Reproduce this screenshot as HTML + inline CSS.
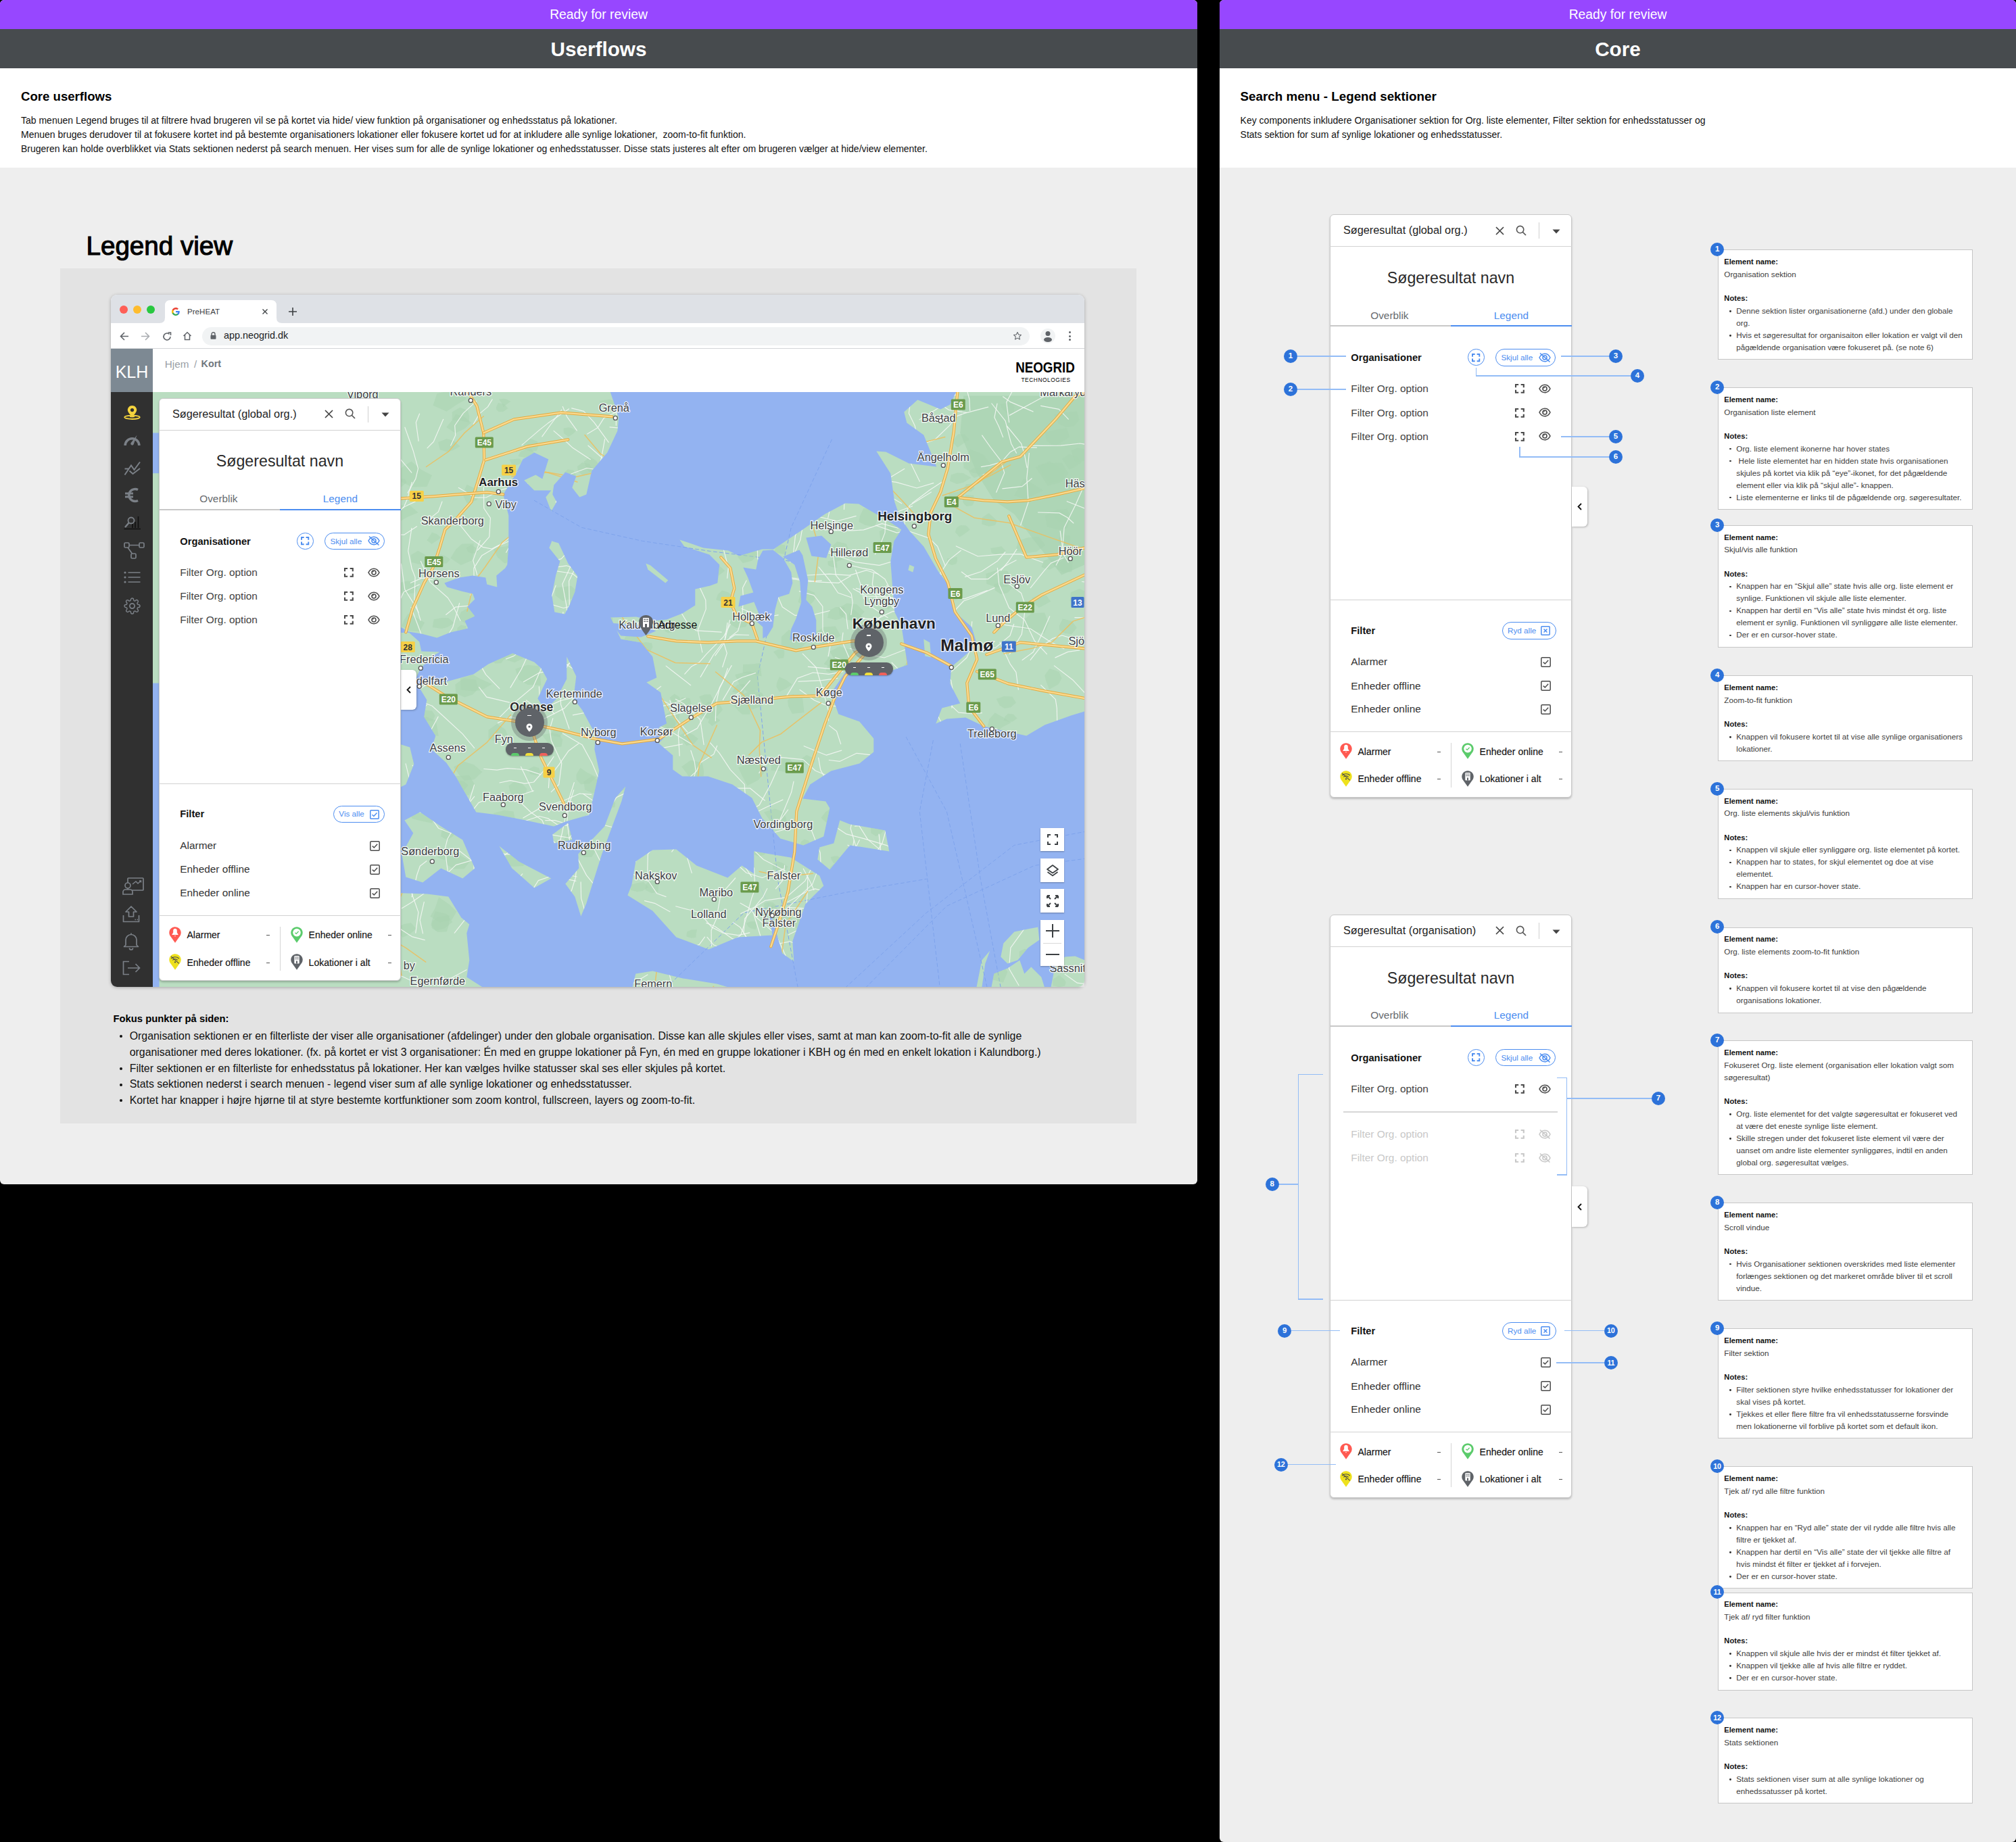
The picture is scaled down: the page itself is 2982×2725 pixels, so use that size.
<!DOCTYPE html>
<html><head><meta charset="utf-8"><title>Userflows - Core</title>
<style>
html,body{margin:0;padding:0;}
body{width:2982px;height:2725px;background:#000;position:relative;overflow:hidden;font-family:"Liberation Sans", sans-serif;}
.t{position:absolute;white-space:nowrap;font-family:"Liberation Sans", sans-serif;}
.r{position:absolute;}
svg{position:absolute;overflow:visible;}
</style></head><body>
<div class="r" style="left:0.00px;top:0.00px;width:1771.00px;height:1752.00px;background:#EEEEEE;border-radius:6px;overflow:hidden"></div><div class="r" style="left:0.00px;top:0.00px;width:1771.00px;height:43.00px;background:#9747FF;border-radius:6px 6px 0 0"></div><div class="r" style="left:0.00px;top:43.00px;width:1771.00px;height:58.00px;background:#474B4E;"></div><div class="r" style="left:0.00px;top:101.00px;width:1771.00px;height:147.00px;background:#FFFFFF;"></div><div class="t" style="left:-114.50px;top:9.83px;width:2000px;text-align:center;font-size:19.3px;line-height:23.16px;font-weight:400;color:#fff;">Ready for review</div><div class="t" style="left:-114.50px;top:55.19px;width:2000px;text-align:center;font-size:29.7px;line-height:35.64px;font-weight:700;color:#fff;">Userflows</div><div class="t" style="left:31.00px;top:131.70px;font-size:18.6px;line-height:22.32px;font-weight:700;color:#000;">Core userflows</div><div class="t" style="left:31.00px;top:170.25px;font-size:14px;line-height:16.8px;font-weight:400;color:#111;">Tab menuen Legend bruges til at filtrere hvad brugeren vil se på kortet via hide/ view funktion på organisationer og enhedsstatus på lokationer.</div><div class="t" style="left:31.00px;top:191.05px;font-size:14px;line-height:16.8px;font-weight:400;color:#111;white-space:pre">Menuen bruges derudover til at fokusere kortet ind på bestemte organisationers lokationer eller fokusere kortet ud for at inkludere alle synlige lokationer,  zoom-to-fit funktion.</div><div class="t" style="left:31.00px;top:211.75px;font-size:14px;line-height:16.8px;font-weight:400;color:#111;">Brugeren kan holde overblikket via Stats sektionen nederst på search menuen. Her vises sum for alle de synlige lokationer og enhedsstatusser. Disse stats justeres alt efter om brugeren vælger at hide/view elementer.</div><div class="t" style="left:127.50px;top:340.87px;font-size:38.6px;line-height:46.32px;font-weight:400;color:#000;-webkit-text-stroke:1.1px #000">Legend view</div><div class="r" style="left:89.00px;top:397.00px;width:1592.00px;height:1265.00px;background:#E3E3E3;"></div><div class="t" style="left:167.50px;top:1499.49px;font-size:14.8px;line-height:17.76px;font-weight:700;color:#000;">Fokus punkter på siden:</div><div class="r" style="left:177.00px;top:1530.70px;width:4.00px;height:4.00px;background:#111;border-radius:50%"></div><div class="t" style="left:191.70px;top:1522.65px;font-size:15.9px;line-height:19.08px;font-weight:400;color:#111;">Organisation sektionen er en filterliste der viser alle organisationer (afdelinger) under den globale organisation. Disse kan alle skjules eller vises, samt at man kan zoom-to-fit alle de synlige</div><div class="t" style="left:191.70px;top:1546.75px;font-size:15.9px;line-height:19.08px;font-weight:400;color:#111;">organisationer med deres lokationer. (fx. på kortet er vist 3 organisationer: Én med en gruppe lokationer på Fyn, én med en gruppe lokationer i KBH og én med en enkelt lokation i Kalundborg.)</div><div class="r" style="left:177.00px;top:1579.00px;width:4.00px;height:4.00px;background:#111;border-radius:50%"></div><div class="t" style="left:191.70px;top:1570.95px;font-size:15.9px;line-height:19.08px;font-weight:400;color:#111;">Filter sektionen er en filterliste for enhedsstatus på lokationer. Her kan vælges hvilke statusser skal ses eller skjules på kortet.</div><div class="r" style="left:177.00px;top:1602.50px;width:4.00px;height:4.00px;background:#111;border-radius:50%"></div><div class="t" style="left:191.70px;top:1594.45px;font-size:15.9px;line-height:19.08px;font-weight:400;color:#111;">Stats sektionen nederst i search menuen - legend viser sum af alle synlige lokationer og enhedsstatusser.</div><div class="r" style="left:177.00px;top:1626.30px;width:4.00px;height:4.00px;background:#111;border-radius:50%"></div><div class="t" style="left:191.70px;top:1618.25px;font-size:15.9px;line-height:19.08px;font-weight:400;color:#111;">Kortet har knapper i højre hjørne til at styre bestemte kortfunktioner som zoom kontrol, fullscreen, layers og zoom-to-fit.</div><div class="r" style="left:1804.00px;top:0.00px;width:1178.00px;height:2725.00px;background:#EEEEEE;border-radius:6px;overflow:hidden"></div><div class="r" style="left:1804.00px;top:0.00px;width:1178.00px;height:43.00px;background:#9747FF;border-radius:6px 6px 0 0"></div><div class="r" style="left:1804.00px;top:43.00px;width:1178.00px;height:58.00px;background:#474B4E;"></div><div class="r" style="left:1804.00px;top:101.00px;width:1178.00px;height:147.00px;background:#FFFFFF;"></div><div class="t" style="left:1393.00px;top:9.83px;width:2000px;text-align:center;font-size:19.3px;line-height:23.16px;font-weight:400;color:#fff;">Ready for review</div><div class="t" style="left:1393.00px;top:55.19px;width:2000px;text-align:center;font-size:29.7px;line-height:35.64px;font-weight:700;color:#fff;">Core</div><div class="t" style="left:1834.60px;top:131.51px;font-size:18.8px;line-height:22.56px;font-weight:700;color:#000;">Search menu - Legend sektioner</div><div class="t" style="left:1834.60px;top:170.35px;font-size:14px;line-height:16.8px;font-weight:400;color:#111;">Key components inkludere Organisationer sektion for Org. liste elementer, Filter sektion for enhedsstatusser og</div><div class="t" style="left:1834.60px;top:191.35px;font-size:14px;line-height:16.8px;font-weight:400;color:#111;">Stats sektion for sum af synlige lokationer og enhedsstatusser.</div><div class="r" style="left:164.00px;top:436.00px;width:1440.00px;height:1024.00px;background:#FFFFFF;border-radius:9px;box-shadow:0 1px 5px rgba(0,0,0,0.28);overflow:hidden"></div><div class="r" style="left:164.00px;top:436.00px;width:1440.00px;height:42.00px;background:#DEE1E6;border-radius:9px 9px 0 0"></div><div class="r" style="left:177.00px;top:451.70px;width:12.00px;height:12.00px;background:#FE5F57;border-radius:50%"></div><div class="r" style="left:197.00px;top:451.70px;width:12.00px;height:12.00px;background:#FEBC2E;border-radius:50%"></div><div class="r" style="left:217.00px;top:451.70px;width:12.00px;height:12.00px;background:#28C840;border-radius:50%"></div><svg style="left:236px;top:444px" width="181" height="34" viewBox="0 0 181 34">
<path d="M0 34 Q8 34 8 26 L8 8 Q8 0 16 0 L165 0 Q173 0 173 8 L173 26 Q173 34 181 34 Z" fill="#fff"/></svg><svg style="left:254px;top:455px" width="12" height="12" viewBox="0 0 24 24">
<path d="M23.5 12.3c0-.8-.1-1.6-.2-2.3H12v4.5h6.5c-.3 1.5-1.1 2.7-2.4 3.6v3h3.9c2.2-2.1 3.5-5.1 3.5-8.8z" fill="#4285F4"/>
<path d="M12 24c3.2 0 6-1.1 7.9-2.9l-3.9-3c-1.1.7-2.4 1.2-4 1.2-3.1 0-5.7-2.1-6.6-4.9h-4v3.1C3.4 21.3 7.4 24 12 24z" fill="#34A853"/>
<path d="M5.4 14.4c-.2-.7-.4-1.5-.4-2.4s.1-1.6.4-2.4V6.5h-4C.5 8.2 0 10 0 12s.5 3.8 1.4 5.5l4-3.1z" fill="#FBBC05"/>
<path d="M12 4.8c1.8 0 3.3.6 4.6 1.8l3.4-3.4C18 1.2 15.2 0 12 0 7.4 0 3.4 2.7 1.4 6.5l4 3.1C6.3 6.9 8.9 4.8 12 4.8z" fill="#EA4335"/></svg><div class="t" style="left:277.00px;top:453.72px;font-size:11.6px;line-height:13.92px;font-weight:400;color:#3C4043;">PreHEAT</div><svg style="left:387.7px;top:457px" width="8" height="8" viewBox="0 0 8 8"><path d="M0.5 0.5L7.5 7.5M7.5 0.5L0.5 7.5" stroke="#3C4043" stroke-width="1.3"/></svg><svg style="left:426.6px;top:455px" width="12" height="12" viewBox="0 0 12 12"><path d="M6 0V12M0 6H12" stroke="#3C4043" stroke-width="1.6"/></svg><div class="r" style="left:164.00px;top:515.00px;width:1440.00px;height:1.00px;background:#D3D5D8;"></div><svg style="left:177px;top:491px" width="14" height="13" viewBox="0 0 14 13"><path d="M13 6.5H2M7 1L1.5 6.5L7 12" stroke="#5F6368" stroke-width="1.6" fill="none"/></svg><svg style="left:208px;top:491px" width="14" height="13" viewBox="0 0 14 13"><path d="M1 6.5H12M7 1L12.5 6.5L7 12" stroke="#A9ACB0" stroke-width="1.6" fill="none"/></svg><svg style="left:239.5px;top:490.5px" width="14" height="14" viewBox="0 0 14 14"><path d="M12 7A5 5 0 1 1 10.5 3.4" stroke="#5F6368" stroke-width="1.6" fill="none"/><path d="M8.5 1H12.5V5" stroke="#5F6368" stroke-width="1.6" fill="none"/></svg><svg style="left:270px;top:490px" width="14" height="14" viewBox="0 0 14 14"><path d="M1.5 7L7 1.8L12.5 7M3.5 5.5V12.5H10.5V5.5" stroke="#5F6368" stroke-width="1.5" fill="none"/></svg><div class="r" style="left:298.60px;top:483.50px;width:1224.40px;height:27.50px;background:#F1F3F4;border-radius:14px"></div><svg style="left:311px;top:491px" width="9" height="11" viewBox="0 0 9 11"><path d="M2 5V3.2A2.5 2.5 0 0 1 7 3.2V5" stroke="#5F6368" stroke-width="1.4" fill="none"/><rect x="0.5" y="4.8" width="8" height="6" rx="1" fill="#5F6368"/></svg><div class="t" style="left:331.00px;top:487.97px;font-size:14.4px;line-height:17.28px;font-weight:400;color:#202124;">app.neogrid.dk</div><svg style="left:1497.8px;top:490px" width="14" height="14" viewBox="0 0 24 24"><path d="M12 2.5l2.9 6.1 6.6.8-4.9 4.6 1.3 6.6L12 17.3l-5.9 3.3 1.3-6.6L2.5 9.4l6.6-.8z" stroke="#5F6368" stroke-width="1.8" fill="none" stroke-linejoin="round"/></svg><div class="r" style="left:1539.00px;top:486.00px;width:22.00px;height:22.00px;background:#F1F3F4;border-radius:50%"></div><svg style="left:1543px;top:489px" width="14" height="16" viewBox="0 0 14 16"><circle cx="7" cy="4.5" r="3.5" fill="#5F6368"/><ellipse cx="7" cy="13.5" rx="6" ry="3.5" fill="#5F6368"/></svg><div class="r" style="left:1580.50px;top:490.00px;width:3.00px;height:3.00px;background:#5F6368;border-radius:50%"></div><div class="r" style="left:1580.50px;top:495.50px;width:3.00px;height:3.00px;background:#5F6368;border-radius:50%"></div><div class="r" style="left:1580.50px;top:501.00px;width:3.00px;height:3.00px;background:#5F6368;border-radius:50%"></div><div class="r" style="left:164.00px;top:515.50px;width:61.70px;height:64.10px;background:#7D8993;"></div><div class="t" style="left:145.00px;top:535.24px;width:100px;text-align:center;font-size:25px;line-height:30.0px;font-weight:400;color:#fff;">KLH</div><div class="r" style="left:164.00px;top:579.60px;width:61.70px;height:880.40px;background:#303030;border-bottom-left-radius:9px"></div><div class="t" style="left:243.70px;top:529.52px;font-size:15.3px;line-height:18.36px;font-weight:400;color:#9AA0A6;">Hjem</div><div class="t" style="left:287.00px;top:529.80px;font-size:15px;line-height:18.0px;font-weight:400;color:#9AA0A6;">/</div><div class="t" style="left:297.60px;top:530.47px;font-size:14.3px;line-height:17.16px;font-weight:700;color:#6F767D;">Kort</div><div class="t" style="left:1446.00px;top:530.40px;width:200px;text-align:center;font-size:22.5px;line-height:27.0px;font-weight:700;color:#000;transform:scaleX(0.835);transform-origin:center;letter-spacing:0px">NEOGRID</div><div class="t" style="left:1447.00px;top:557.09px;width:200px;text-align:center;font-size:9.1px;line-height:10.92px;font-weight:400;color:#000;letter-spacing:0.6px;transform:scaleX(0.92)">TECHNOLOGIES</div>
<svg style="left:183px;top:599px" width="25" height="22" viewBox="0 0 25 22">
 <path d="M12.5 1C8.6 1 5.8 3.9 5.8 7.6C5.8 11.8 12.5 17.5 12.5 17.5S19.2 11.8 19.2 7.6C19.2 3.9 16.4 1 12.5 1Z" fill="#F3D33E"/>
 <circle cx="12.5" cy="7.6" r="2.6" fill="#303030"/>
 <ellipse cx="12.5" cy="18.3" rx="11.3" ry="2.7" stroke="#F3D33E" stroke-width="1.8" fill="none"/>
 <path d="M9 17L12.5 17.5L16 17" stroke="#F3D33E" stroke-width="2"/></svg>
<svg style="left:183px;top:643px" width="25" height="17" viewBox="0 0 25 17">
 <path d="M2.2 16A10.3 10.3 0 0 1 22.8 16" stroke="#7B8087" stroke-width="3.6" fill="none"/>
 <path d="M19.5 0.8L14.6 14.6A2.4 2.4 0 0 1 10.4 12.4Z" fill="#7B8087"/></svg>
<svg style="left:183px;top:682px" width="25" height="22" viewBox="0 0 25 22">
 <path d="M1.5 20.5L11 6.5L15.5 13L24 1.5M1.5 11.5L7 11.5M8.5 14.5L13.5 19L24 11" stroke="#7B8087" stroke-width="2" fill="none"/></svg>
<svg style="left:184px;top:720px" width="22" height="25" viewBox="0 0 22 25">
 <path d="M20 4.5A9 9 0 1 0 20 20.5" stroke="#7B8087" stroke-width="3.4" fill="none"/>
 <path d="M1 10H13M1 15H13" stroke="#7B8087" stroke-width="2.8"/></svg>
<svg style="left:183px;top:763px" width="25" height="21" viewBox="0 0 25 21">
 <circle cx="11" cy="7" r="4.5" stroke="#7B8087" stroke-width="1.8" fill="none"/>
 <path d="M7.7 10.3L2 17" stroke="#7B8087" stroke-width="2.4"/>
 <path d="M13 12V18M17 9V18M21.5 1V18" stroke="#111" stroke-width="1.6"/>
 <path d="M0.5 19.5H25" stroke="#111" stroke-width="1.4"/></svg>
<svg style="left:183px;top:802px" width="32" height="25" viewBox="0 0 32 25">
 <rect x="1" y="1" width="7" height="7" rx="1.5" stroke="#7B8087" stroke-width="1.7" fill="none"/>
 <rect x="23" y="1" width="7" height="7" rx="1.5" stroke="#7B8087" stroke-width="1.7" fill="none"/>
 <rect x="11" y="17" width="7" height="7" rx="1.5" stroke="#7B8087" stroke-width="1.7" fill="none"/>
 <path d="M8 4.5H23M6 8L12.5 17" stroke="#7B8087" stroke-width="1.7"/></svg>
<svg style="left:183px;top:845px" width="25" height="18" viewBox="0 0 25 18">
 <circle cx="2" cy="2" r="1.6" fill="#7B8087"/><circle cx="2" cy="9" r="1.6" fill="#7B8087"/><circle cx="2" cy="16" r="1.6" fill="#7B8087"/>
 <path d="M6.5 2H24.5M6.5 9H24.5M6.5 16H24.5" stroke="#7B8087" stroke-width="1.6"/></svg>
<svg style="left:183px;top:883px" width="25" height="27" viewBox="0 0 24 24">
 <path d="M12 15.5A3.5 3.5 0 1 0 12 8.5A3.5 3.5 0 1 0 12 15.5Z" stroke="#7B8087" stroke-width="1.6" fill="none"/>
 <path d="M19.4 15a1.7 1.7 0 0 0 .3 1.8l.1.1a2 2 0 1 1-2.8 2.8l-.1-.1a1.7 1.7 0 0 0-1.8-.3 1.7 1.7 0 0 0-1 1.5V21a2 2 0 1 1-4 0v-.1a1.7 1.7 0 0 0-1.1-1.5 1.7 1.7 0 0 0-1.8.3l-.1.1a2 2 0 1 1-2.8-2.8l.1-.1a1.7 1.7 0 0 0 .3-1.8 1.7 1.7 0 0 0-1.5-1H3a2 2 0 1 1 0-4h.1a1.7 1.7 0 0 0 1.5-1.1 1.7 1.7 0 0 0-.3-1.8l-.1-.1a2 2 0 1 1 2.8-2.8l.1.1a1.7 1.7 0 0 0 1.8.3H9a1.7 1.7 0 0 0 1-1.5V3a2 2 0 1 1 4 0v.1a1.7 1.7 0 0 0 1 1.5 1.7 1.7 0 0 0 1.8-.3l.1-.1a2 2 0 1 1 2.8 2.8l-.1.1a1.7 1.7 0 0 0-.3 1.8V9a1.7 1.7 0 0 0 1.5 1H21a2 2 0 1 1 0 4h-.1a1.7 1.7 0 0 0-1.5 1z" stroke="#7B8087" stroke-width="1.4" fill="none"/></svg>
<svg style="left:181px;top:1298px" width="32" height="26" viewBox="0 0 32 26">
 <rect x="8" y="1" width="23" height="18" rx="1" stroke="#7B8087" stroke-width="1.7" fill="none"/>
 <circle cx="8" cy="12" r="4" stroke="#7B8087" stroke-width="1.7" fill="#303030"/>
 <path d="M1 25V21.5A3.5 3.5 0 0 1 4.5 18H11.5A3.5 3.5 0 0 1 15 21.5V25Z" stroke="#7B8087" stroke-width="1.7" fill="#303030"/>
 <path d="M15 10L20 6L23 9L27.5 5M25 5H27.5V7.5" stroke="#7B8087" stroke-width="1.5" fill="none"/></svg>
<svg style="left:181px;top:1339px" width="27" height="26" viewBox="0 0 27 26">
 <path d="M13 2L5 10H9.5V17H16.5V10H21Z" stroke="#7B8087" stroke-width="1.7" fill="none" stroke-linejoin="round"/>
 <path d="M1.5 15V24.5H24.5V15" stroke="#7B8087" stroke-width="1.7" fill="none"/>
 <path d="M18.5 21.5H20M21.5 21.5H23" stroke="#7B8087" stroke-width="1.5"/></svg>
<svg style="left:182px;top:1379px" width="24" height="26" viewBox="0 0 24 26">
 <path d="M12 1.5V3.5M4 19V11.5A8 8 0 0 1 20 11.5V19L22.5 21.5H1.5Z" stroke="#7B8087" stroke-width="1.7" fill="none" stroke-linejoin="round"/>
 <path d="M9.5 23.5A2.5 2.5 0 0 0 14.5 23.5" stroke="#7B8087" stroke-width="1.7" fill="none"/></svg>
<svg style="left:181px;top:1421px" width="27" height="22" viewBox="0 0 27 22">
 <path d="M10 1.5H1.5V20.5H10" stroke="#7B8087" stroke-width="1.7" fill="none"/>
 <path d="M8 11H25.5M19.5 5L25.5 11L19.5 17" stroke="#7B8087" stroke-width="1.7" fill="none"/></svg>
<svg style="left:225.7px;top:579.6px;overflow:hidden" width="1378.3" height="880.4" viewBox="225.7 579.6 1378.3 880.4"><rect x="225.7" y="579.6" width="1378.3" height="880.4" fill="#93B3F1"/><polygon points="225.7,579.6 902.5,579.6 915,617 913,637 898,669 875,696 867,731 857,735 846,721 852,704 836,698 819,717 817,731 823,742 815,756 807,735 815,725 790,725 775,710 792,702 802,708 811,679 790,669 773,679 763,700 744,731 752,762 752,804 750,835 747,840 734,851 735,868 720,864 718,854 699,851 679,854 657,862 661,868 682,874 699,878 702,886 691,897 702,911 687,918 692,929 666,935 646,943 623,937 604,934 594,928 225.7,928" fill="#BADDC1" /><polygon points="225.7,935 605,935.5 620,949 623,963 650,964 640,970 626,984 620,992 612,1010 600,1040 225.7,1040" fill="#BADDC1" /><polygon points="590,1100 606,1105 612,1130 600,1160 590,1165" fill="#BADDC1" /><polygon points="617,1012 660,1008 700,997 722,982 758,966 790,979 800,988 809,1004 795,1033 806,1050 823,1033 838,1004 838,971 852,1000 848,1033 861,1050 881,1087 879,1108 886,1140 877,1180 871,1205 836,1215 819,1222 777,1213 736,1205 704,1201 692,1180 675,1150 660,1128 638,1108 644,1088 627,1060 631,1035" fill="#BADDC1" /><polygon points="817,1234 840,1217 846,1242 819,1247" fill="#BADDC1" /><polygon points="925,1163 919,1185 890,1263 867,1336 859,1355 850,1326 836,1307 856,1284 855,1263 894,1222 910,1180" fill="#BADDC1" /><polygon points="738,1251 767,1274 815,1299 790,1313 757,1284" fill="#BADDC1" /><polygon points="598,1213 621,1201 652,1222 684,1242 702,1284 684,1299 652,1284 625,1305 600,1297 594,1263 611,1232" fill="#BADDC1" /><polygon points="225.7,1309 632,1322 663,1326 682,1357 694,1367 690,1380 694,1420 690,1445 715,1461 225.7,1461" fill="#BADDC1" /><polygon points="816,800 826,803 840,833 854,852 850,875 842,895 835,908 820,905 816,880 822,850 828,830 812,810" fill="#BADDC1" /><polygon points="955,833 962,836 988,858 984,862 958,842" fill="#BADDC1" /><polygon points="1005,798 1040,810 1077,814 1093,822 1127,812 1144,812 1187,783 1220,760 1250,744 1270,745 1292,758 1310,768 1333,783 1322,800 1317,830 1320,870 1323,905 1333,925 1342,983 1312,994 1250,994 1229,1025 1240,1056 1271,1067 1292,1092 1292,1112 1271,1129 1229,1140 1198,1160 1187,1181 1221,1185 1227,1195 1218,1237 1188,1250 1154,1240 1127,1210 1112,1180 1083,1160 1047,1148 1009,1148 995,1138 995,1117 974,1099 983,1090 974,1076 986,1070 983,1055 977,1024 956,1009 971,1002 965,971 948,950 918,945 903,913 941,912 965,918 986,916 1009,907 1028,895 1028,871 1050,866 1061,862 1064,835 1049,820 1012,808" fill="#BADDC1" /><polygon points="1414,579.6 1604,579.6 1604,1052 1584,1058 1545,1072 1518,1088 1455,1074 1428,1061 1400,1063 1384,1070 1393,1047 1420,1040 1405,1011 1407,986 1445,954 1437,927 1410,903 1407,871 1387,844 1366,808 1345,785 1331,765 1323,742 1317,700 1296,667 1310,668 1344,685 1385,690 1375,665 1366,643 1341,625 1337,609 1357,591 1391,605 1405,598" fill="#BADDC1" /><polygon points="1000,1256 1030,1280 1076,1298 1097,1280 1115,1292 1136,1337 1142,1383 1091,1386 1048,1404 1000,1386 965,1347 928,1324 934,1309 940,1274 965,1257" fill="#BADDC1" /><polygon points="1115,1259 1169,1268 1212,1295 1218,1310 1191,1337 1172,1392 1174,1422 1157,1410 1145,1368 1136,1337 1115,1292" fill="#BADDC1" /><polygon points="1209,1271 1227,1286 1257,1250 1315,1259 1309,1228 1257,1219 1242,1213 1233,1247 1212,1253" fill="#BADDC1" /><polygon points="1444,1461 1452,1420 1464,1406 1457,1425 1452,1461" fill="#BADDC1" /><polygon points="1484,1395 1500,1378 1535,1371 1537,1390 1520,1402 1505,1420 1490,1425 1480,1415" fill="#BADDC1" /><polygon points="1466,1461 1470,1440 1490,1432 1508,1420 1515,1440 1525,1430 1540,1445 1545,1461" fill="#BADDC1" /><polygon points="1554,1461 1560,1430 1575,1415 1590,1414 1604,1420 1604,1461" fill="#BADDC1" /><polygon points="940,1440 965,1436 1010,1447 1060,1455 1080,1461 935,1461" fill="#BADDC1" /><polygon points="1366,945 1375,950 1377,972 1368,970" fill="#BADDC1" /><polygon points="1345,835 1352,838 1350,846 1343,843" fill="#BADDC1" /><rect x="225.7" y="640" width="9.5" height="60" fill="#93B3F1"/><rect x="225.7" y="1010" width="9.5" height="451" fill="#93B3F1"/><rect x="225.7" y="700" width="9.5" height="310" fill="#BADDC1"/><polyline points="790,740 860,780 950,800 1050,815 1170,830" fill="none" stroke="#7DA3EC" stroke-width="1" stroke-linejoin="round" stroke-linecap="round" stroke-dasharray="5 4"/><polyline points="1230,650 1170,780 1120,1000 1150,1300 1180,1461" fill="none" stroke="#7DA3EC" stroke-width="1" stroke-linejoin="round" stroke-linecap="round" stroke-dasharray="5 4"/><polyline points="1340,1090 1400,1200 1460,1461" fill="none" stroke="#7DA3EC" stroke-width="1" stroke-linejoin="round" stroke-linecap="round" stroke-dasharray="5 4"/><polyline points="1420,1100 1450,1300 1480,1461" fill="none" stroke="#7DA3EC" stroke-width="1" stroke-linejoin="round" stroke-linecap="round" stroke-dasharray="5 4"/><polyline points="1250,1461 1370,1350 1500,1250 1604,1230" fill="none" stroke="#7DA3EC" stroke-width="1" stroke-linejoin="round" stroke-linecap="round" stroke-dasharray="5 4"/><polyline points="1280,1461 1400,1340 1530,1280 1604,1270" fill="none" stroke="#7DA3EC" stroke-width="1" stroke-linejoin="round" stroke-linecap="round" stroke-dasharray="5 4"/><polyline points="1380,1095 1360,1200 1390,1461" fill="none" stroke="#7DA3EC" stroke-width="1" stroke-linejoin="round" stroke-linecap="round" stroke-dasharray="5 4"/><polyline points="985,1461 1100,1350 1250,1320 1370,1300" fill="none" stroke="#7DA3EC" stroke-width="1" stroke-linejoin="round" stroke-linecap="round" stroke-dasharray="5 4"/><defs><clipPath id="landclip"><polygon points="225.7,579.6 902.5,579.6 915,617 913,637 898,669 875,696 867,731 857,735 846,721 852,704 836,698 819,717 817,731 823,742 815,756 807,735 815,725 790,725 775,710 792,702 802,708 811,679 790,669 773,679 763,700 744,731 752,762 752,804 750,835 747,840 734,851 735,868 720,864 718,854 699,851 679,854 657,862 661,868 682,874 699,878 702,886 691,897 702,911 687,918 692,929 666,935 646,943 623,937 604,934 594,928 225.7,928" fill="#000" /><polygon points="225.7,935 605,935.5 620,949 623,963 650,964 640,970 626,984 620,992 612,1010 600,1040 225.7,1040" fill="#000" /><polygon points="590,1100 606,1105 612,1130 600,1160 590,1165" fill="#000" /><polygon points="617,1012 660,1008 700,997 722,982 758,966 790,979 800,988 809,1004 795,1033 806,1050 823,1033 838,1004 838,971 852,1000 848,1033 861,1050 881,1087 879,1108 886,1140 877,1180 871,1205 836,1215 819,1222 777,1213 736,1205 704,1201 692,1180 675,1150 660,1128 638,1108 644,1088 627,1060 631,1035" fill="#000" /><polygon points="817,1234 840,1217 846,1242 819,1247" fill="#000" /><polygon points="925,1163 919,1185 890,1263 867,1336 859,1355 850,1326 836,1307 856,1284 855,1263 894,1222 910,1180" fill="#000" /><polygon points="738,1251 767,1274 815,1299 790,1313 757,1284" fill="#000" /><polygon points="598,1213 621,1201 652,1222 684,1242 702,1284 684,1299 652,1284 625,1305 600,1297 594,1263 611,1232" fill="#000" /><polygon points="225.7,1309 632,1322 663,1326 682,1357 694,1367 690,1380 694,1420 690,1445 715,1461 225.7,1461" fill="#000" /><polygon points="816,800 826,803 840,833 854,852 850,875 842,895 835,908 820,905 816,880 822,850 828,830 812,810" fill="#000" /><polygon points="1005,798 1040,810 1077,814 1093,822 1127,812 1144,812 1187,783 1220,760 1250,744 1270,745 1292,758 1310,768 1333,783 1322,800 1317,830 1320,870 1323,905 1333,925 1342,983 1312,994 1250,994 1229,1025 1240,1056 1271,1067 1292,1092 1292,1112 1271,1129 1229,1140 1198,1160 1187,1181 1221,1185 1227,1195 1218,1237 1188,1250 1154,1240 1127,1210 1112,1180 1083,1160 1047,1148 1009,1148 995,1138 995,1117 974,1099 983,1090 974,1076 986,1070 983,1055 977,1024 956,1009 971,1002 965,971 948,950 918,945 903,913 941,912 965,918 986,916 1009,907 1028,895 1028,871 1050,866 1061,862 1064,835 1049,820 1012,808" fill="#000" /><polygon points="1414,579.6 1604,579.6 1604,1052 1584,1058 1545,1072 1518,1088 1455,1074 1428,1061 1400,1063 1384,1070 1393,1047 1420,1040 1405,1011 1407,986 1445,954 1437,927 1410,903 1407,871 1387,844 1366,808 1345,785 1331,765 1323,742 1317,700 1296,667 1310,668 1344,685 1385,690 1375,665 1366,643 1341,625 1337,609 1357,591 1391,605 1405,598" fill="#000" /><polygon points="1000,1256 1030,1280 1076,1298 1097,1280 1115,1292 1136,1337 1142,1383 1091,1386 1048,1404 1000,1386 965,1347 928,1324 934,1309 940,1274 965,1257" fill="#000" /><polygon points="1115,1259 1169,1268 1212,1295 1218,1310 1191,1337 1172,1392 1174,1422 1157,1410 1145,1368 1136,1337 1115,1292" fill="#000" /><polygon points="1209,1271 1227,1286 1257,1250 1315,1259 1309,1228 1257,1219 1242,1213 1233,1247 1212,1253" fill="#000" /><polygon points="1484,1395 1500,1378 1535,1371 1537,1390 1520,1402 1505,1420 1490,1425 1480,1415" fill="#000" /><polygon points="1466,1461 1470,1440 1490,1432 1508,1420 1515,1440 1525,1430 1540,1445 1545,1461" fill="#000" /><polygon points="1554,1461 1560,1430 1575,1415 1590,1414 1604,1420 1604,1461" fill="#000" /><polygon points="940,1440 965,1436 1010,1447 1060,1455 1080,1461 935,1461" fill="#000" /></clipPath></defs><g clip-path="url(#landclip)"><polygon points="1425,585 1604,585 1604,835 1570,850 1530,800 1500,760 1470,740 1445,700 1420,640" fill="#A9D3B1" opacity="0.75"/><polygon points="931.5,712.7 930.8,723.2 917.1,724.2 910.5,716.6 905.7,707.1 918.0,704.4 930.0,703.1" fill="#A9D3B1" opacity="0.55"/><polygon points="680.1,659.8 669.6,665.8 661.3,668.1 650.6,664.9 647.8,653.7 660.5,648.9 671.3,652.2" fill="#A9D3B1" opacity="0.55"/><polygon points="1596.1,621.0 1588.7,629.8 1577.0,631.6 1565.3,626.7 1558.9,612.9 1576.8,609.6 1592.6,608.4" fill="#A9D3B1" opacity="0.55"/><polygon points="1249.0,907.7 1245.2,914.0 1236.3,916.8 1223.7,913.6 1226.2,902.8 1236.1,897.7 1248.8,897.8" fill="#A9D3B1" opacity="0.55"/><polygon points="1072.0,843.8 1060.4,853.0 1046.9,858.7 1034.5,850.2 1030.3,835.7 1046.4,827.2 1060.7,834.2" fill="#A9D3B1" opacity="0.55"/><polygon points="1599.6,683.9 1590.1,690.0 1581.1,694.1 1576.1,686.9 1570.6,678.8 1580.5,671.6 1592.6,675.2" fill="#A9D3B1" opacity="0.55"/><polygon points="1496.1,856.1 1489.2,867.3 1474.5,868.8 1459.1,863.4 1458.0,848.3 1474.4,843.2 1489.9,844.3" fill="#A9D3B1" opacity="0.55"/><polygon points="676.4,1197.3 666.8,1209.9 651.3,1207.9 641.0,1202.5 637.9,1191.0 652.0,1189.1 664.2,1187.5" fill="#A9D3B1" opacity="0.55"/><polygon points="772.9,683.0 766.7,686.9 761.4,688.4 756.0,685.7 753.3,679.3 761.6,678.5 767.9,678.0" fill="#A9D3B1" opacity="0.55"/><polygon points="1171.9,1357.4 1158.1,1367.1 1144.6,1370.9 1133.6,1363.1 1127.1,1349.1 1143.0,1338.1 1157.0,1348.8" fill="#A9D3B1" opacity="0.55"/><polygon points="781.7,784.1 778.3,791.3 769.2,791.0 765.0,786.5 762.1,780.6 769.0,776.6 778.2,777.1" fill="#A9D3B1" opacity="0.55"/><polygon points="1572.3,1187.6 1566.8,1197.9 1554.4,1195.2 1539.7,1194.1 1540.9,1181.6 1552.5,1173.2 1567.6,1176.6" fill="#A9D3B1" opacity="0.55"/><polygon points="999.6,931.1 993.5,934.9 988.3,935.9 983.3,933.5 983.6,928.8 987.9,924.9 993.4,927.3" fill="#A9D3B1" opacity="0.55"/><polygon points="601.3,713.1 596.9,716.8 590.7,722.0 584.5,716.5 587.3,710.8 591.6,707.4 598.2,708.1" fill="#A9D3B1" opacity="0.55"/><polygon points="986.9,688.1 972.7,699.6 957.0,702.7 949.3,692.7 949.1,683.5 957.5,675.1 970.9,678.3" fill="#A9D3B1" opacity="0.55"/><polygon points="1441.5,722.1 1436.0,727.1 1429.7,726.6 1423.6,724.9 1426.3,720.3 1429.2,715.8 1437.6,715.4" fill="#A9D3B1" opacity="0.55"/><polygon points="1475.8,1192.7 1471.0,1197.9 1462.9,1203.0 1455.6,1196.6 1453.8,1188.0 1463.7,1185.1 1471.3,1187.1" fill="#A9D3B1" opacity="0.55"/><polygon points="1436.6,1446.7 1428.0,1461.4 1408.5,1464.1 1399.8,1452.0 1396.2,1440.1 1409.7,1433.5 1421.1,1439.0" fill="#A9D3B1" opacity="0.55"/><polygon points="633.9,825.9 630.4,835.1 618.9,834.2 608.1,831.0 607.7,820.7 618.0,814.4 627.4,819.7" fill="#A9D3B1" opacity="0.55"/><polygon points="823.9,779.6 822.8,786.6 812.9,789.9 804.4,784.1 806.8,776.1 813.4,770.8 823.7,771.8" fill="#A9D3B1" opacity="0.55"/><polygon points="702.5,1161.3 693.3,1175.9 674.4,1176.4 665.2,1166.5 657.2,1153.0 674.9,1147.8 693.7,1146.3" fill="#A9D3B1" opacity="0.55"/><polygon points="1592.5,928.3 1584.7,937.8 1573.2,936.0 1566.9,931.6 1566.7,925.0 1571.6,915.2 1585.2,918.4" fill="#A9D3B1" opacity="0.55"/><polygon points="763.8,1307.3 752.2,1318.8 736.0,1324.0 727.2,1312.5 728.8,1302.7 734.6,1285.6 755.1,1293.0" fill="#A9D3B1" opacity="0.55"/><polygon points="1142.4,1401.6 1135.7,1412.0 1123.0,1409.8 1115.5,1405.4 1115.2,1397.7 1123.0,1393.2 1134.2,1392.7" fill="#A9D3B1" opacity="0.55"/><polygon points="867.4,948.7 860.4,953.9 853.2,955.8 846.3,952.2 844.3,944.5 853.3,941.9 862.8,941.1" fill="#A9D3B1" opacity="0.55"/><polygon points="1109.6,1048.0 1108.8,1056.7 1097.7,1056.7 1091.8,1051.2 1084.2,1041.8 1097.7,1039.4 1109.1,1039.1" fill="#A9D3B1" opacity="0.55"/><polygon points="1338.3,1069.7 1333.9,1077.5 1323.0,1081.0 1318.5,1072.6 1314.9,1065.4 1324.0,1062.1 1332.4,1063.5" fill="#A9D3B1" opacity="0.55"/><polygon points="1391.7,1026.8 1386.0,1039.1 1370.5,1038.1 1359.1,1032.5 1360.1,1021.5 1370.4,1014.9 1384.5,1016.0" fill="#A9D3B1" opacity="0.55"/><polygon points="1068.8,1049.3 1060.3,1059.3 1046.4,1063.2 1033.6,1055.7 1040.0,1045.3 1047.1,1037.9 1061.9,1037.7" fill="#A9D3B1" opacity="0.55"/><polygon points="1451.1,700.7 1446.2,704.6 1440.6,706.5 1436.5,702.9 1432.9,697.1 1439.8,692.0 1449.7,693.2" fill="#A9D3B1" opacity="0.55"/><polygon points="761.2,1210.2 762.2,1223.3 744.2,1227.4 737.4,1214.7 729.5,1202.6 745.8,1198.4 759.3,1200.0" fill="#A9D3B1" opacity="0.55"/><polygon points="1603.0,1312.6 1599.9,1318.7 1591.8,1319.3 1586.9,1315.2 1586.2,1309.6 1591.2,1303.7 1597.7,1308.6" fill="#A9D3B1" opacity="0.55"/><polygon points="1160.0,967.6 1158.5,973.0 1151.4,973.8 1148.3,969.5 1143.6,963.9 1151.0,960.2 1159.7,961.0" fill="#A9D3B1" opacity="0.55"/><polygon points="708.7,813.7 703.1,817.9 697.6,818.3 692.0,816.4 689.4,810.0 696.7,805.9 703.1,809.5" fill="#A9D3B1" opacity="0.55"/><polygon points="761.4,1388.9 750.6,1395.5 741.7,1396.9 728.4,1394.9 731.1,1383.9 741.7,1380.8 756.5,1376.3" fill="#A9D3B1" opacity="0.55"/><polygon points="1245.4,1285.4 1238.1,1289.1 1232.0,1294.0 1226.8,1288.4 1227.5,1282.8 1232.4,1278.4 1241.6,1278.3" fill="#A9D3B1" opacity="0.55"/><polygon points="875.6,693.7 870.3,700.2 861.4,702.3 855.0,697.1 853.5,689.8 861.0,683.9 871.6,685.9" fill="#A9D3B1" opacity="0.55"/><polygon points="1371.7,835.2 1368.7,843.1 1358.8,842.3 1350.4,839.2 1352.6,832.0 1357.1,822.1 1370.1,825.9" fill="#A9D3B1" opacity="0.55"/><polygon points="798.8,997.8 800.0,1013.3 780.3,1012.6 766.6,1004.7 762.0,989.1 780.4,983.4 797.1,985.2" fill="#A9D3B1" opacity="0.55"/><polygon points="1303.4,1444.5 1297.0,1453.3 1285.3,1455.0 1278.1,1448.5 1278.6,1440.8 1286.5,1438.2 1293.8,1439.0" fill="#A9D3B1" opacity="0.55"/><polygon points="672.8,1232.0 669.3,1236.8 661.4,1242.7 651.9,1236.8 653.3,1227.7 662.4,1224.8 670.1,1226.4" fill="#A9D3B1" opacity="0.55"/><polygon points="898.6,984.3 894.3,989.3 886.4,994.5 877.5,988.9 880.2,980.8 887.5,978.2 897.4,976.2" fill="#A9D3B1" opacity="0.55"/><polygon points="912.9,893.8 910.6,898.5 904.3,899.7 900.6,895.9 899.1,891.1 904.9,890.0 909.9,889.9" fill="#A9D3B1" opacity="0.55"/><polygon points="689.0,931.6 688.1,935.9 682.3,936.7 675.9,934.6 676.2,928.7 681.6,924.0 689.4,925.9" fill="#A9D3B1" opacity="0.55"/><polygon points="1328.0,1353.6 1327.7,1364.4 1314.8,1361.0 1303.5,1358.8 1304.1,1348.7 1315.0,1347.0 1326.8,1343.6" fill="#A9D3B1" opacity="0.55"/><polygon points="1516.1,1132.1 1502.7,1140.0 1490.8,1145.8 1479.1,1138.1 1475.3,1124.5 1490.0,1115.5 1508.2,1118.6" fill="#A9D3B1" opacity="0.55"/><polygon points="1202.5,1365.7 1191.8,1374.0 1181.1,1374.2 1172.5,1369.9 1170.0,1360.5 1180.9,1356.5 1196.5,1352.7" fill="#A9D3B1" opacity="0.55"/><polygon points="1175.7,1132.4 1167.5,1142.3 1155.4,1140.3 1140.2,1139.2 1140.7,1125.9 1154.1,1120.0 1167.9,1122.2" fill="#A9D3B1" opacity="0.55"/><polygon points="1273.8,638.1 1267.0,645.6 1256.3,649.4 1241.2,645.2 1247.3,633.4 1255.0,622.2 1274.2,623.4" fill="#A9D3B1" opacity="0.55"/><polygon points="1108.2,916.7 1102.8,927.1 1089.0,928.5 1078.5,922.0 1083.7,913.3 1090.1,908.6 1099.5,909.5" fill="#A9D3B1" opacity="0.55"/><polygon points="1354.1,847.9 1350.8,854.3 1341.6,857.7 1329.0,853.8 1328.8,841.9 1340.6,834.5 1352.4,839.9" fill="#A9D3B1" opacity="0.55"/><polygon points="1125.1,988.9 1126.3,1000.0 1112.8,997.3 1098.4,995.4 1098.8,982.6 1113.2,982.0 1123.6,980.5" fill="#A9D3B1" opacity="0.55"/><polygon points="1433.2,1431.9 1428.6,1438.6 1417.9,1446.0 1412.3,1435.6 1408.9,1426.9 1419.7,1424.1 1430.5,1423.3" fill="#A9D3B1" opacity="0.55"/><polygon points="1574.8,696.7 1571.1,711.6 1551.5,713.3 1542.8,701.8 1534.7,688.4 1552.1,682.4 1563.7,689.2" fill="#A9D3B1" opacity="0.55"/><polygon points="608.2,1012.7 602.9,1018.9 594.0,1022.1 586.0,1016.8 581.3,1006.8 594.7,1006.0 606.7,1002.6" fill="#A9D3B1" opacity="0.55"/><polygon points="1464.4,685.6 1457.4,701.8 1437.6,698.8 1425.1,691.9 1424.8,679.3 1435.3,664.4 1454.6,672.4" fill="#A9D3B1" opacity="0.55"/><polygon points="965.2,956.7 962.6,961.7 954.6,967.6 949.1,960.0 944.3,951.5 955.6,949.5 963.5,950.9" fill="#A9D3B1" opacity="0.55"/><polygon points="1126.4,747.1 1119.6,757.2 1106.1,759.1 1097.2,751.8 1094.8,741.4 1105.9,734.1 1117.7,738.9" fill="#A9D3B1" opacity="0.55"/><polygon points="1337.2,623.5 1333.3,636.4 1316.2,638.5 1307.3,628.6 1310.1,619.5 1315.4,605.8 1328.3,615.7" fill="#A9D3B1" opacity="0.55"/><polygon points="1084.0,882.4 1080.1,892.2 1068.3,889.8 1058.8,886.9 1061.5,879.0 1067.7,873.0 1077.0,875.8" fill="#A9D3B1" opacity="0.55"/><polygon points="775.6,722.3 768.6,728.7 760.3,728.7 750.0,726.9 749.4,717.3 760.0,714.5 766.9,717.5" fill="#A9D3B1" opacity="0.55"/><polygon points="796.0,659.8 793.6,666.0 785.3,667.6 776.0,664.3 773.5,654.4 784.3,648.6 794.6,652.7" fill="#A9D3B1" opacity="0.55"/><polygon points="1022.5,1041.3 1016.8,1046.6 1009.1,1049.5 996.2,1047.2 1003.2,1038.1 1008.6,1031.4 1020.1,1032.6" fill="#A9D3B1" opacity="0.55"/><polygon points="1474.5,770.0 1471.8,776.5 1463.0,778.4 1451.9,775.2 1452.7,765.2 1462.2,758.9 1469.9,765.5" fill="#A9D3B1" opacity="0.55"/><polygon points="644.7,1204.4 638.5,1217.4 622.9,1214.0 609.4,1210.6 602.5,1195.5 620.2,1185.5 641.0,1189.0" fill="#A9D3B1" opacity="0.55"/><polygon points="1582.7,798.6 1581.7,804.4 1573.7,806.7 1565.1,802.8 1566.4,795.0 1573.7,790.8 1582.7,791.9" fill="#A9D3B1" opacity="0.55"/><polygon points="1065.2,1065.3 1059.4,1069.4 1053.0,1073.6 1047.2,1068.4 1049.1,1062.9 1054.0,1060.7 1059.5,1061.2" fill="#A9D3B1" opacity="0.55"/><polygon points="1242.5,1194.8 1242.1,1200.5 1234.1,1202.3 1228.8,1197.6 1229.8,1192.2 1234.1,1187.1 1239.9,1191.1" fill="#A9D3B1" opacity="0.55"/><polygon points="920.4,985.4 914.1,1001.7 893.4,1001.0 883.1,991.1 882.9,979.7 891.8,964.1 912.4,970.8" fill="#A9D3B1" opacity="0.55"/><polygon points="919.8,599.2 912.1,607.5 901.2,608.3 889.4,604.7 886.9,592.7 901.3,590.3 909.6,593.3" fill="#A9D3B1" opacity="0.55"/><polygon points="947.7,950.1 947.4,962.8 930.4,965.4 919.7,955.9 923.0,945.6 929.8,932.6 943.7,941.1" fill="#A9D3B1" opacity="0.55"/><polygon points="1434.6,783.1 1427.6,788.7 1418.9,794.1 1412.6,786.8 1414.7,780.3 1420.2,776.6 1428.2,776.9" fill="#A9D3B1" opacity="0.55"/><polygon points="1274.4,1414.9 1270.3,1419.6 1262.7,1425.0 1259.3,1417.3 1259.9,1412.7 1264.2,1409.9 1271.1,1409.4" fill="#A9D3B1" opacity="0.55"/><polygon points="1524.8,1357.6 1515.3,1371.9 1497.7,1369.4 1489.0,1362.2 1480.4,1349.6 1496.5,1341.6 1508.1,1350.4" fill="#A9D3B1" opacity="0.55"/><polygon points="1275.8,913.2 1270.7,919.1 1263.0,919.4 1255.2,916.8 1254.7,909.3 1261.0,900.1 1270.4,907.5" fill="#A9D3B1" opacity="0.55"/><polygon points="1583.1,762.5 1577.4,772.1 1565.3,771.7 1560.5,765.4 1557.0,758.3 1565.4,753.8 1578.0,752.4" fill="#A9D3B1" opacity="0.55"/><polygon points="800.9,900.5 799.5,912.0 782.8,919.3 767.1,908.7 776.5,896.1 785.3,890.5 796.4,892.3" fill="#A9D3B1" opacity="0.55"/><polygon points="1545.9,806.2 1532.8,815.8 1519.9,817.6 1502.1,814.3 1506.0,799.6 1520.0,794.9 1535.9,793.5" fill="#A9D3B1" opacity="0.55"/><polygon points="922.1,822.6 919.2,828.8 911.1,829.1 903.8,826.1 908.5,820.8 911.6,817.8 917.6,817.9" fill="#A9D3B1" opacity="0.55"/><polygon points="1570.7,1419.4 1567.8,1427.0 1557.5,1429.3 1545.2,1425.3 1551.5,1416.1 1556.8,1407.3 1569.6,1410.1" fill="#A9D3B1" opacity="0.55"/><polygon points="1438.5,1260.1 1433.3,1268.6 1421.7,1271.1 1407.7,1266.6 1415.1,1256.3 1422.1,1250.6 1436.4,1248.4" fill="#A9D3B1" opacity="0.55"/><polygon points="851.4,637.0 847.4,641.4 840.6,645.5 833.7,640.5 833.2,633.2 841.5,631.8 846.5,633.5" fill="#A9D3B1" opacity="0.55"/><polygon points="706.9,1018.7 699.0,1027.2 686.9,1031.1 673.8,1025.1 673.2,1012.0 686.0,1002.9 703.8,1005.3" fill="#A9D3B1" opacity="0.55"/><polygon points="1280.7,686.6 1277.0,699.0 1260.9,699.9 1244.8,694.3 1251.6,681.6 1261.3,674.7 1274.2,677.1" fill="#A9D3B1" opacity="0.55"/><polygon points="761.3,1358.1 756.8,1366.9 743.4,1374.3 734.2,1363.4 737.0,1353.8 743.8,1343.4 758.6,1347.4" fill="#A9D3B1" opacity="0.55"/><polygon points="1612.0,670.1 1605.7,680.9 1590.8,684.2 1586.6,673.2 1584.2,666.0 1592.6,662.2 1601.5,663.3" fill="#A9D3B1" opacity="0.55"/><polygon points="1594.8,1093.2 1592.5,1109.1 1572.4,1108.2 1561.9,1098.9 1555.0,1084.9 1570.8,1072.5 1585.5,1084.3" fill="#A9D3B1" opacity="0.55"/><polygon points="1205.2,1125.6 1200.5,1130.4 1193.9,1132.0 1188.0,1128.5 1185.6,1121.6 1193.1,1116.5 1200.8,1120.4" fill="#A9D3B1" opacity="0.55"/><polygon points="617.3,868.0 613.4,876.9 601.6,878.1 586.3,875.0 589.0,862.0 602.0,859.2 611.8,860.6" fill="#A9D3B1" opacity="0.55"/><polygon points="1003.9,1064.1 1000.2,1071.7 988.5,1078.5 979.1,1069.3 980.5,1059.4 989.6,1053.3 1006.0,1050.7" fill="#A9D3B1" opacity="0.55"/><polygon points="920.4,1078.5 918.6,1088.3 905.0,1091.7 898.8,1082.4 900.2,1075.2 905.6,1067.3 914.8,1072.5" fill="#A9D3B1" opacity="0.55"/><polygon points="615.3,1373.4 606.6,1381.1 595.2,1386.7 587.4,1377.9 590.0,1370.0 597.0,1366.8 607.5,1364.8" fill="#A9D3B1" opacity="0.55"/><polygon points="1250.3,1380.6 1245.7,1385.6 1238.8,1387.5 1234.9,1382.9 1234.1,1378.1 1238.7,1373.7 1247.9,1373.4" fill="#A9D3B1" opacity="0.55"/><polygon points="727.6,1011.6 711.9,1020.5 700.0,1022.0 681.1,1020.1 680.7,1003.1 699.0,997.6 710.6,1004.0" fill="#A9D3B1" opacity="0.55"/><polygon points="1550.7,921.3 1544.5,936.6 1526.1,932.8 1507.9,929.6 1515.3,915.9 1525.3,907.1 1544.7,905.9" fill="#A9D3B1" opacity="0.55"/><polygon points="1441.0,741.0 1437.9,747.7 1429.2,748.5 1424.5,743.6 1423.6,738.0 1428.6,731.5 1439.8,732.5" fill="#A9D3B1" opacity="0.55"/><polygon points="646.2,1074.9 648.3,1088.7 631.7,1084.8 617.5,1081.4 618.0,1068.5 630.3,1059.8 644.0,1065.4" fill="#A9D3B1" opacity="0.55"/><polygon points="1032.5,1092.7 1025.6,1100.7 1014.9,1102.6 1009.9,1095.7 1004.7,1087.7 1014.8,1082.4 1024.3,1086.0" fill="#A9D3B1" opacity="0.55"/><polygon points="1375.4,1266.4 1373.3,1274.8 1362.8,1274.0 1356.0,1269.8 1353.3,1261.9 1362.8,1258.9 1373.1,1258.2" fill="#A9D3B1" opacity="0.55"/><polygon points="1119.9,615.9 1120.5,627.7 1104.5,631.0 1094.2,621.5 1099.1,612.1 1105.2,603.3 1117.9,606.7" fill="#A9D3B1" opacity="0.55"/><polygon points="1580.3,699.8 1568.2,713.8 1549.1,718.1 1541.1,704.9 1531.1,690.9 1550.1,685.1 1570.2,684.0" fill="#A9D3B1" opacity="0.55"/><polygon points="1542.9,725.3 1526.8,733.0 1515.5,737.9 1499.7,732.8 1506.9,720.6 1513.9,707.1 1528.5,715.9" fill="#A9D3B1" opacity="0.55"/><polygon points="1436.3,706.3 1424.6,713.4 1415.0,715.5 1404.7,711.3 1406.4,702.0 1415.5,699.0 1424.4,699.5" fill="#A9D3B1" opacity="0.55"/><polygon points="777.5,1404.0 763.8,1411.9 751.5,1419.7 745.3,1408.2 740.7,1398.1 751.9,1389.8 765.3,1394.7" fill="#A9D3B1" opacity="0.55"/><polygon points="1495.2,1068.6 1482.3,1075.3 1470.9,1084.8 1460.4,1074.4 1462.8,1063.7 1471.4,1054.0 1483.4,1060.6" fill="#A9D3B1" opacity="0.55"/><polygon points="1609.2,1088.1 1601.8,1095.5 1592.3,1095.4 1581.2,1093.2 1586.9,1085.2 1591.0,1076.1 1600.7,1081.7" fill="#A9D3B1" opacity="0.55"/><polygon points="1256.5,1446.0 1247.5,1454.3 1237.1,1453.6 1230.2,1449.5 1229.0,1442.0 1235.6,1432.9 1248.4,1436.8" fill="#A9D3B1" opacity="0.55"/><polygon points="1118.8,1368.1 1117.8,1374.6 1110.0,1372.8 1106.0,1370.1 1103.8,1365.2 1109.8,1362.9 1116.5,1362.8" fill="#A9D3B1" opacity="0.55"/><polygon points="831.8,1093.6 830.2,1104.1 816.4,1105.4 809.6,1097.5 801.3,1086.5 816.9,1083.8 826.9,1086.4" fill="#A9D3B1" opacity="0.55"/><polygon points="713.0,1141.6 701.0,1152.8 686.3,1154.0 678.8,1145.9 670.7,1134.3 685.4,1126.0 700.5,1130.9" fill="#A9D3B1" opacity="0.55"/><polygon points="1269.2,970.5 1255.9,980.7 1239.9,990.8 1233.7,975.1 1227.2,963.4 1241.6,955.9 1255.8,960.4" fill="#A9D3B1" opacity="0.55"/><polygon points="660.1,1265.4 658.4,1271.8 650.7,1269.9 646.6,1267.5 644.5,1262.5 650.3,1259.3 657.4,1260.0" fill="#A9D3B1" opacity="0.55"/><polygon points="1425.3,733.7 1420.2,738.6 1412.0,745.4 1402.6,738.6 1403.1,729.0 1413.7,727.9 1424.5,724.5" fill="#A9D3B1" opacity="0.55"/><polygon points="1363.2,989.4 1355.1,998.2 1343.6,999.1 1333.8,994.3 1336.0,985.4 1343.0,977.5 1359.3,976.5" fill="#A9D3B1" opacity="0.55"/><polygon points="1309.9,1323.9 1306.8,1335.0 1292.1,1336.6 1277.1,1331.1 1280.1,1317.9 1292.6,1312.9 1307.5,1312.1" fill="#A9D3B1" opacity="0.55"/><polygon points="1581.2,771.0 1578.7,780.9 1565.3,783.1 1548.2,778.9 1545.7,762.1 1563.7,753.2 1579.3,760.4" fill="#A9D3B1" opacity="0.55"/><polygon points="1496.9,869.1 1490.2,876.5 1480.1,878.7 1472.0,873.3 1469.7,864.1 1480.5,860.9 1491.3,860.7" fill="#A9D3B1" opacity="0.55"/><polygon points="1313.9,1334.6 1307.1,1343.4 1295.7,1343.6 1288.8,1338.3 1285.1,1329.5 1296.2,1327.4 1309.2,1323.7" fill="#A9D3B1" opacity="0.55"/><polygon points="751.1,603.7 744.2,608.7 737.7,608.9 733.9,605.7 733.8,601.6 736.9,595.6 745.4,597.5" fill="#A9D3B1" opacity="0.55"/><polygon points="1306.7,1228.4 1302.4,1233.1 1295.3,1236.5 1288.2,1232.0 1287.8,1224.6 1296.4,1223.9 1304.4,1221.6" fill="#A9D3B1" opacity="0.55"/><polygon points="1524.5,1411.0 1521.5,1415.0 1516.1,1415.6 1507.3,1414.9 1507.5,1407.2 1515.3,1403.3 1524.4,1404.0" fill="#A9D3B1" opacity="0.55"/><polygon points="1237.8,832.9 1238.1,839.5 1229.9,838.3 1224.5,835.6 1223.9,830.0 1230.2,828.4 1236.1,828.3" fill="#A9D3B1" opacity="0.55"/><polygon points="889.5,1209.9 889.2,1220.4 875.9,1219.6 864.5,1215.3 866.5,1205.2 876.9,1203.5 886.0,1202.6" fill="#A9D3B1" opacity="0.55"/><polygon points="1048.3,1260.3 1042.1,1268.1 1032.1,1267.8 1020.3,1265.6 1026.6,1257.3 1030.9,1248.5 1040.0,1254.5" fill="#A9D3B1" opacity="0.55"/><polygon points="618.3,757.8 601.3,764.8 590.4,771.5 578.4,763.9 574.8,750.3 591.3,747.2 605.3,746.7" fill="#A9D3B1" opacity="0.55"/><polygon points="958.7,1312.0 949.8,1317.8 942.1,1318.8 932.6,1316.4 934.0,1308.2 942.3,1305.9 951.6,1304.4" fill="#A9D3B1" opacity="0.55"/><polygon points="695.2,1273.4 686.3,1284.9 671.4,1285.1 660.7,1278.8 660.8,1268.0 669.9,1256.4 682.1,1266.0" fill="#A9D3B1" opacity="0.55"/><polygon points="1499.8,602.2 1499.6,610.5 1488.9,610.2 1482.7,605.4 1479.3,597.5 1489.4,595.7 1497.5,595.9" fill="#A9D3B1" opacity="0.55"/><polygon points="1149.9,1243.9 1140.1,1253.7 1127.0,1255.9 1118.6,1248.5 1110.5,1236.3 1126.0,1228.6 1143.3,1231.0" fill="#A9D3B1" opacity="0.55"/><polygon points="783.3,966.1 772.5,974.2 760.5,979.7 743.7,974.1 751.4,961.1 761.3,955.4 773.9,956.6" fill="#A9D3B1" opacity="0.55"/><polygon points="1311.1,1322.4 1308.8,1327.3 1302.0,1329.0 1295.1,1325.8 1297.4,1319.9 1302.0,1315.8 1308.5,1317.8" fill="#A9D3B1" opacity="0.55"/><polygon points="1590.9,1221.3 1582.8,1225.2 1577.1,1227.7 1567.9,1225.5 1569.1,1217.5 1576.5,1213.1 1584.2,1216.0" fill="#A9D3B1" opacity="0.55"/><polygon points="798.4,1141.4 796.5,1146.6 790.0,1146.0 783.8,1144.3 781.5,1137.6 789.1,1133.4 797.0,1135.8" fill="#A9D3B1" opacity="0.55"/><polygon points="1242.5,987.7 1237.8,993.2 1229.8,996.4 1221.2,992.0 1224.2,984.6 1230.1,979.9 1239.3,980.7" fill="#A9D3B1" opacity="0.55"/><polygon points="1040.8,781.1 1031.7,794.1 1014.4,796.5 999.3,788.7 1001.2,774.4 1014.6,766.3 1029.2,770.7" fill="#A9D3B1" opacity="0.55"/><polygon points="917.8,1132.9 916.2,1139.6 907.2,1140.9 900.7,1136.3 902.9,1130.4 907.6,1126.3 914.8,1127.5" fill="#A9D3B1" opacity="0.55"/><polygon points="1243.2,940.2 1229.3,948.2 1217.3,954.6 1203.4,947.2 1207.7,934.9 1217.7,927.4 1235.4,926.2" fill="#A9D3B1" opacity="0.55"/><polygon points="643.3,1058.2 639.6,1066.2 629.4,1065.9 625.4,1060.5 622.3,1054.6 629.3,1050.3 638.6,1051.1" fill="#A9D3B1" opacity="0.55"/><polygon points="1129.7,1142.5 1121.7,1153.4 1105.3,1161.9 1097.6,1147.6 1091.8,1135.2 1107.0,1129.2 1124.7,1128.6" fill="#A9D3B1" opacity="0.55"/><polygon points="725.0,1446.3 723.1,1452.8 714.2,1455.2 709.6,1449.1 706.3,1442.3 714.2,1437.3 725.5,1437.5" fill="#A9D3B1" opacity="0.55"/><polygon points="961.5,813.3 957.7,822.1 946.6,821.8 941.4,816.3 937.3,808.8 946.8,805.7 954.2,808.1" fill="#A9D3B1" opacity="0.55"/><polygon points="743.9,1263.4 734.9,1274.6 719.4,1278.4 710.5,1268.5 701.5,1254.9 720.1,1250.6 736.3,1250.8" fill="#A9D3B1" opacity="0.55"/><polygon points="1432.5,1298.2 1429.7,1307.2 1418.5,1306.0 1405.2,1304.2 1409.6,1294.0 1416.9,1284.7 1427.9,1291.1" fill="#A9D3B1" opacity="0.55"/><polygon points="983.5,803.1 978.5,808.4 969.9,815.2 963.3,807.0 963.6,799.4 970.8,794.3 981.4,795.0" fill="#A9D3B1" opacity="0.55"/><polygon points="1040.9,1140.8 1039.6,1154.3 1021.6,1156.9 1016.3,1144.7 1007.9,1133.8 1021.5,1124.2 1038.5,1128.4" fill="#A9D3B1" opacity="0.55"/><polygon points="745.2,1311.6 741.3,1318.0 730.2,1328.2 718.9,1317.8 723.2,1307.0 732.4,1302.7 742.3,1304.2" fill="#A9D3B1" opacity="0.55"/><polygon points="838.3,1263.1 839.1,1273.1 825.9,1274.7 820.9,1266.3 815.0,1257.7 826.3,1252.9 838.4,1253.9" fill="#A9D3B1" opacity="0.55"/><polygon points="1291.4,1366.6 1277.6,1375.4 1264.2,1382.7 1252.2,1373.1 1249.6,1359.2 1265.0,1353.2 1283.3,1352.1" fill="#A9D3B1" opacity="0.55"/><polygon points="1162.0,812.8 1160.8,819.4 1152.6,818.4 1144.8,816.4 1147.0,810.0 1151.8,804.5 1160.8,806.1" fill="#A9D3B1" opacity="0.55"/><polygon points="1148.1,1339.3 1143.2,1344.0 1136.7,1345.6 1130.7,1342.3 1129.8,1336.0 1136.9,1333.9 1143.0,1334.8" fill="#A9D3B1" opacity="0.55"/><polygon points="1581.9,646.3 1570.7,652.9 1560.3,659.9 1547.8,652.7 1545.1,639.0 1561.1,635.4 1577.8,632.7" fill="#A9D3B1" opacity="0.55"/><polygon points="1122.1,1006.5 1123.4,1020.7 1104.5,1023.2 1093.7,1012.5 1086.9,997.9 1105.3,992.8 1121.2,994.5" fill="#A9D3B1" opacity="0.55"/><polygon points="1134.2,1258.1 1130.4,1264.2 1121.9,1266.5 1112.7,1262.6 1116.4,1255.0 1121.4,1248.0 1130.3,1252.1" fill="#A9D3B1" opacity="0.55"/><polygon points="1121.6,819.1 1112.2,829.1 1098.4,832.7 1091.0,823.5 1091.1,814.8 1099.6,809.6 1111.8,809.6" fill="#A9D3B1" opacity="0.55"/><polygon points="1244.3,1270.1 1241.3,1276.6 1232.9,1276.7 1229.9,1272.0 1228.6,1267.7 1233.7,1266.1 1238.7,1266.2" fill="#A9D3B1" opacity="0.55"/><polygon points="1544.4,1115.6 1537.8,1129.0 1520.6,1129.4 1508.6,1121.8 1508.5,1109.4 1520.4,1101.0 1535.5,1104.7" fill="#A9D3B1" opacity="0.55"/><polygon points="1297.4,767.0 1293.7,779.3 1278.9,776.1 1270.1,771.4 1271.7,763.2 1277.1,751.6 1294.9,753.6" fill="#A9D3B1" opacity="0.55"/><polygon points="1278.4,904.6 1268.0,916.7 1252.5,916.5 1241.7,910.1 1240.2,898.5 1252.4,892.1 1266.9,893.6" fill="#A9D3B1" opacity="0.55"/><polygon points="1250.6,1401.8 1245.3,1405.2 1240.5,1406.5 1232.6,1405.3 1233.9,1398.7 1239.4,1393.3 1246.8,1396.8" fill="#A9D3B1" opacity="0.55"/><polygon points="627.7,920.7 620.4,933.8 603.9,932.5 594.2,925.7 597.4,916.9 603.5,907.3 614.9,913.1" fill="#A9D3B1" opacity="0.55"/><polygon points="755.1,593.7 749.9,597.1 744.1,601.7 741.6,595.5 737.6,590.3 745.2,589.3 749.5,590.6" fill="#A9D3B1" opacity="0.55"/><polygon points="1333.6,793.2 1327.5,800.5 1315.6,809.5 1302.2,800.2 1300.5,785.6 1315.7,777.4 1327.8,785.7" fill="#A9D3B1" opacity="0.55"/><polygon points="1246.6,1204.1 1235.5,1211.2 1224.4,1218.5 1214.2,1209.7 1220.6,1201.1 1226.6,1197.2 1238.0,1194.6" fill="#A9D3B1" opacity="0.55"/><polygon points="1433.1,650.1 1424.9,655.7 1416.0,661.7 1408.9,654.2 1412.2,647.4 1417.0,641.9 1427.1,642.4" fill="#A9D3B1" opacity="0.55"/><polygon points="1048.2,1175.7 1041.9,1181.0 1034.2,1183.9 1027.1,1179.3 1028.5,1172.5 1034.6,1168.8 1043.7,1168.4" fill="#A9D3B1" opacity="0.55"/><polygon points="1561.1,1270.5 1554.7,1276.9 1543.8,1286.4 1532.6,1276.5 1531.4,1263.9 1545.4,1260.1 1558.5,1260.3" fill="#A9D3B1" opacity="0.55"/><polygon points="1594.6,1311.5 1590.4,1320.8 1576.7,1327.2 1568.4,1316.5 1565.2,1305.4 1577.5,1298.5 1593.8,1298.9" fill="#A9D3B1" opacity="0.55"/><polygon points="1415.7,829.3 1413.8,833.8 1407.6,835.6 1400.9,832.6 1400.5,825.9 1408.2,825.4 1415.3,823.4" fill="#A9D3B1" opacity="0.55"/><polygon points="1426.4,1343.1 1425.6,1355.1 1409.5,1357.7 1398.1,1349.1 1395.8,1336.3 1410.7,1332.6 1420.3,1336.5" fill="#A9D3B1" opacity="0.55"/><polygon points="1164.9,1281.7 1161.2,1290.2 1150.9,1288.1 1142.8,1285.5 1142.3,1277.7 1150.5,1273.9 1157.8,1276.7" fill="#A9D3B1" opacity="0.55"/><polygon points="868.1,1241.0 858.4,1248.9 845.6,1258.3 830.9,1248.6 837.4,1235.9 846.3,1226.0 865.1,1226.3" fill="#A9D3B1" opacity="0.55"/><polygon points="1502.7,1039.2 1494.5,1046.0 1485.4,1047.6 1478.2,1042.9 1473.4,1033.7 1485.0,1029.5 1496.9,1030.1" fill="#A9D3B1" opacity="0.55"/><polygon points="1006.3,1035.2 1008.1,1043.3 998.0,1041.9 993.8,1037.5 990.4,1031.5 997.3,1026.1 1004.4,1030.7" fill="#A9D3B1" opacity="0.55"/><polygon points="1206.2,883.5 1202.7,889.5 1192.4,898.9 1180.2,889.9 1183.8,878.5 1193.4,871.7 1204.2,876.1" fill="#A9D3B1" opacity="0.55"/><polygon points="1404.9,954.8 1396.3,970.4 1374.7,976.0 1365.9,960.6 1368.8,950.2 1377.3,942.6 1390.4,945.2" fill="#A9D3B1" opacity="0.55"/><polygon points="696.7,624.9 686.6,634.0 673.1,640.4 660.0,631.7 668.4,621.3 674.0,612.3 686.2,616.2" fill="#A9D3B1" opacity="0.55"/><polygon points="725.8,1424.2 721.8,1431.8 711.0,1435.7 703.1,1428.5 705.1,1420.7 711.9,1415.9 719.4,1419.0" fill="#A9D3B1" opacity="0.55"/><polygon points="1576.4,1452.7 1574.8,1458.1 1567.3,1460.0 1557.1,1457.5 1557.1,1448.0 1566.5,1442.4 1573.8,1448.3" fill="#A9D3B1" opacity="0.55"/><polygon points="1410.0,1204.5 1394.8,1211.3 1385.4,1213.8 1370.7,1211.1 1368.7,1197.0 1383.9,1190.2 1396.6,1195.8" fill="#A9D3B1" opacity="0.55"/><polygon points="1198.8,1247.0 1195.6,1251.6 1189.5,1252.0 1183.0,1250.0 1184.8,1244.6 1189.4,1241.3 1195.1,1242.8" fill="#A9D3B1" opacity="0.55"/><polygon points="1291.4,591.1 1285.1,598.2 1273.1,608.7 1265.8,595.8 1257.7,583.2 1273.3,574.1 1291.8,577.3" fill="#A9D3B1" opacity="0.55"/><polygon points="746.0,973.6 741.2,980.5 732.1,981.2 726.6,976.6 727.2,970.9 731.9,965.0 739.8,968.1" fill="#A9D3B1" opacity="0.55"/><polygon points="1235.2,705.6 1235.7,713.3 1225.7,714.2 1221.1,708.3 1216.0,701.0 1226.2,698.8 1234.2,699.5" fill="#A9D3B1" opacity="0.55"/><polygon points="766.9,818.6 759.2,827.4 746.3,833.1 735.8,824.2 728.5,810.1 747.4,808.1 766.2,802.7" fill="#A9D3B1" opacity="0.55"/><polygon points="663.5,1367.6 660.6,1377.8 647.4,1378.5 638.3,1372.3 638.9,1363.2 647.2,1356.1 664.5,1353.6" fill="#A9D3B1" opacity="0.55"/><polygon points="1609.6,1394.1 1609.2,1401.3 1600.7,1398.7 1592.7,1397.7 1595.3,1391.5 1599.4,1384.7 1605.6,1390.5" fill="#A9D3B1" opacity="0.55"/><polygon points="1414.9,880.0 1416.2,887.4 1406.8,887.5 1402.3,882.5 1400.8,876.9 1406.2,870.4 1413.6,875.3" fill="#A9D3B1" opacity="0.55"/><polygon points="1182.6,701.5 1177.8,708.7 1168.9,707.6 1164.4,703.9 1164.4,699.1 1168.2,693.1 1176.8,695.3" fill="#A9D3B1" opacity="0.55"/><polygon points="888.1,761.3 882.0,773.4 866.2,774.3 858.8,765.6 860.3,757.6 865.8,746.9 879.1,752.1" fill="#A9D3B1" opacity="0.55"/><polygon points="1338.7,628.7 1336.9,643.1 1317.4,646.9 1306.1,635.1 1311.9,624.6 1317.3,610.1 1333.9,617.4" fill="#A9D3B1" opacity="0.55"/><polygon points="1487.1,814.3 1480.3,820.0 1472.9,820.2 1466.4,817.5 1464.9,810.6 1473.2,809.3 1481.0,807.9" fill="#A9D3B1" opacity="0.55"/><polygon points="1054.3,1033.8 1050.7,1040.9 1041.1,1042.9 1036.5,1036.5 1034.1,1030.1 1041.8,1027.2 1050.5,1026.9" fill="#A9D3B1" opacity="0.55"/><polygon points="675.1,1348.1 667.7,1360.9 650.3,1364.2 636.1,1355.3 643.1,1343.5 648.8,1326.8 665.0,1338.0" fill="#A9D3B1" opacity="0.55"/><polygon points="790.9,670.4 781.9,674.8 775.7,676.3 766.1,674.7 769.8,667.4 775.8,664.9 784.7,663.0" fill="#A9D3B1" opacity="0.55"/><polygon points="1187.8,1040.2 1189.3,1053.6 1171.5,1055.5 1165.7,1044.1 1164.8,1035.9 1172.1,1027.0 1186.4,1029.6" fill="#A9D3B1" opacity="0.55"/><polygon points="885.2,687.4 884.3,696.1 872.0,700.2 867.0,690.7 863.4,682.6 872.3,675.4 881.8,681.3" fill="#A9D3B1" opacity="0.55"/><polygon points="1440.1,1405.1 1438.1,1415.1 1425.2,1415.2 1417.5,1409.2 1412.9,1399.2 1424.7,1393.1 1435.1,1398.0" fill="#A9D3B1" opacity="0.55"/><polygon points="854.2,874.9 846.2,885.1 832.1,888.5 821.2,880.6 820.9,869.0 834.0,867.9 844.5,866.4" fill="#A9D3B1" opacity="0.55"/><polygon points="1571.7,1402.2 1568.9,1409.7 1559.2,1409.9 1551.3,1406.1 1554.7,1399.6 1559.1,1394.1 1568.2,1395.4" fill="#A9D3B1" opacity="0.55"/><polygon points="638.7,702.7 631.0,719.6 609.0,720.2 591.4,711.4 590.4,693.5 608.2,682.2 622.5,694.3" fill="#A9D3B1" opacity="0.55"/><polygon points="1255.5,813.9 1252.3,824.6 1236.8,830.9 1225.3,820.2 1229.4,809.2 1237.9,800.7 1251.5,804.0" fill="#A9D3B1" opacity="0.55"/><polygon points="1567.3,833.0 1559.6,838.3 1551.6,842.7 1540.3,838.4 1543.7,828.9 1552.2,825.5 1561.4,825.9" fill="#A9D3B1" opacity="0.55"/><polygon points="1139.4,710.6 1137.6,715.5 1130.8,717.3 1125.7,713.3 1125.9,708.0 1131.3,705.6 1138.7,704.6" fill="#A9D3B1" opacity="0.55"/><polygon points="1458.8,1116.8 1449.4,1124.2 1438.1,1130.4 1428.7,1121.9 1427.8,1111.3 1438.3,1103.9 1451.2,1107.5" fill="#A9D3B1" opacity="0.55"/><polygon points="917.6,793.2 912.9,799.2 904.4,801.9 900.8,795.5 898.4,789.9 903.9,782.8 912.2,787.9" fill="#A9D3B1" opacity="0.55"/><polygon points="1171.3,1012.4 1161.8,1018.5 1152.7,1023.1 1148.1,1015.4 1148.8,1009.7 1152.5,1001.1 1162.6,1005.6" fill="#A9D3B1" opacity="0.55"/><polygon points="671.5,921.3 661.7,927.3 653.3,929.7 639.5,927.6 641.4,915.9 653.5,913.5 663.1,913.9" fill="#A9D3B1" opacity="0.55"/><polygon points="969.2,1174.3 961.5,1186.5 945.8,1186.8 932.6,1180.8 932.5,1167.8 945.1,1159.6 959.0,1164.6" fill="#A9D3B1" opacity="0.55"/><polygon points="1400.9,1203.5 1402.3,1219.3 1383.8,1213.3 1365.3,1211.7 1367.6,1196.2 1382.2,1188.1 1403.1,1186.9" fill="#A9D3B1" opacity="0.55"/><polygon points="1194.2,947.8 1183.4,959.9 1167.6,960.6 1155.6,953.8 1155.5,941.7 1166.6,931.4 1180.8,938.2" fill="#A9D3B1" opacity="0.55"/><polygon points="999.0,1068.7 997.6,1078.3 984.4,1081.2 976.5,1073.1 977.0,1064.5 985.8,1061.1 994.8,1061.9" fill="#A9D3B1" opacity="0.55"/><polygon points="750.3,1086.4 752.1,1098.9 736.6,1096.8 722.3,1093.1 722.3,1079.7 735.0,1070.4 747.1,1078.9" fill="#A9D3B1" opacity="0.55"/><polygon points="1029.3,1381.3 1029.2,1386.4 1022.4,1387.3 1015.0,1384.8 1015.8,1378.1 1022.4,1375.1 1030.7,1374.7" fill="#A9D3B1" opacity="0.55"/><polygon points="1131.5,1035.2 1125.5,1044.6 1112.2,1049.1 1102.7,1040.4 1096.1,1027.5 1111.9,1020.5 1126.8,1024.5" fill="#A9D3B1" opacity="0.55"/><polygon points="706.6,909.5 701.6,918.0 689.4,922.4 677.4,915.5 681.5,905.0 690.3,899.8 701.9,900.7" fill="#A9D3B1" opacity="0.55"/><polygon points="1618.1,882.1 1607.0,889.0 1597.3,892.0 1582.2,889.0 1583.7,875.8 1596.8,870.6 1606.6,875.6" fill="#A9D3B1" opacity="0.55"/><polygon points="1522.6,1187.1 1512.2,1202.0 1493.5,1200.7 1484.9,1191.9 1483.3,1181.7 1493.2,1172.5 1508.9,1175.5" fill="#A9D3B1" opacity="0.55"/><polygon points="800.4,740.5 792.1,749.4 778.3,757.5 767.3,746.6 773.6,736.8 779.9,728.9 795.3,728.4" fill="#A9D3B1" opacity="0.55"/><polygon points="909.7,1187.8 909.1,1193.8 901.3,1194.2 895.4,1190.8 897.8,1185.8 901.4,1181.9 908.1,1182.8" fill="#A9D3B1" opacity="0.55"/><polygon points="882.0,1149.2 871.6,1158.9 858.9,1159.9 852.4,1152.9 852.1,1145.4 858.1,1135.6 868.4,1142.7" fill="#A9D3B1" opacity="0.55"/><polygon points="712.2,730.1 704.0,739.9 690.2,744.0 685.3,733.5 685.8,726.8 690.3,716.5 702.1,722.2" fill="#A9D3B1" opacity="0.55"/><polygon points="1324.5,891.4 1320.7,895.7 1313.5,901.4 1306.9,895.0 1308.4,888.3 1314.2,884.0 1322.0,885.7" fill="#A9D3B1" opacity="0.55"/><polygon points="668.8,1363.7 657.4,1372.8 644.6,1376.7 637.0,1368.0 639.1,1360.1 643.8,1347.9 660.4,1351.6" fill="#A9D3B1" opacity="0.55"/><polygon points="927.0,1371.0 923.6,1383.4 905.8,1390.3 894.7,1377.4 889.1,1362.5 907.9,1359.3 921.8,1360.4" fill="#A9D3B1" opacity="0.55"/><polygon points="1334.3,774.8 1326.6,782.1 1316.2,785.9 1310.8,778.1 1311.4,771.7 1317.0,766.6 1325.0,769.2" fill="#A9D3B1" opacity="0.55"/><polygon points="1586.0,835.8 1584.9,845.5 1572.2,846.6 1562.6,840.7 1566.0,832.3 1572.8,827.3 1586.9,824.1" fill="#A9D3B1" opacity="0.55"/><polygon points="956.6,795.5 953.2,800.7 946.6,800.7 937.9,799.5 940.0,792.4 946.4,789.6 955.4,788.2" fill="#A9D3B1" opacity="0.55"/><polygon points="700.2,817.3 697.8,828.5 681.5,835.5 666.0,825.3 674.0,812.4 682.9,804.3 700.2,803.7" fill="#A9D3B1" opacity="0.55"/><polygon points="987.9,1423.4 980.5,1429.9 972.2,1429.9 965.0,1426.9 967.2,1420.8 971.4,1414.1 979.4,1418.1" fill="#A9D3B1" opacity="0.55"/><polygon points="1512.7,1097.1 1510.9,1105.5 1500.3,1104.7 1488.2,1102.6 1494.4,1093.9 1499.7,1087.2 1510.5,1089.0" fill="#A9D3B1" opacity="0.55"/><polygon points="880.6,1259.1 874.7,1267.5 863.9,1267.7 855.9,1263.2 858.4,1256.1 864.2,1251.6 876.4,1249.1" fill="#A9D3B1" opacity="0.55"/><polygon points="927.0,1163.2 922.6,1168.3 915.6,1170.3 910.6,1165.9 912.0,1161.1 915.8,1157.1 922.1,1158.7" fill="#A9D3B1" opacity="0.55"/><polygon points="731.1,1210.7 729.7,1219.9 717.5,1221.3 707.4,1215.7 707.6,1205.7 718.7,1204.2 726.4,1204.8" fill="#A9D3B1" opacity="0.55"/><polygon points="637.5,1178.1 632.5,1187.7 618.8,1192.4 605.9,1184.6 610.8,1173.4 618.3,1162.0 632.0,1168.9" fill="#A9D3B1" opacity="0.55"/><polygon points="1240.7,739.9 1235.4,746.6 1226.4,748.1 1223.3,742.0 1223.3,737.8 1227.2,734.5 1233.2,735.4" fill="#A9D3B1" opacity="0.55"/><polygon points="906.4,915.1 905.0,920.7 898.0,919.9 890.3,918.6 891.7,912.1 897.3,907.7 903.6,910.9" fill="#A9D3B1" opacity="0.55"/><polygon points="1040.5,1182.2 1042.2,1191.8 1029.4,1193.7 1023.4,1185.8 1025.4,1179.4 1029.3,1170.2 1041.0,1173.9" fill="#A9D3B1" opacity="0.55"/><polygon points="651.9,795.1 645.3,799.6 638.2,804.4 631.2,798.9 635.2,792.9 638.6,787.0 646.1,789.9" fill="#A9D3B1" opacity="0.55"/><polygon points="1356.7,1309.3 1358.2,1318.7 1346.4,1317.6 1335.3,1314.5 1337.1,1304.8 1345.8,1298.9 1357.6,1300.5" fill="#A9D3B1" opacity="0.55"/><polygon points="1237.5,978.4 1232.9,983.4 1226.1,985.0 1218.1,982.2 1222.6,976.4 1225.8,970.7 1231.5,975.0" fill="#A9D3B1" opacity="0.55"/><polygon points="1314.9,1289.0 1312.8,1298.4 1300.8,1298.6 1293.2,1293.0 1295.3,1285.9 1301.8,1283.2 1309.7,1282.8" fill="#A9D3B1" opacity="0.55"/><polygon points="1017.8,757.2 1017.6,765.7 1006.2,767.5 1000.6,760.5 1000.6,753.9 1006.5,748.0 1016.2,750.2" fill="#A9D3B1" opacity="0.55"/><polygon points="1554.0,889.3 1544.5,894.6 1536.4,898.7 1530.0,892.8 1526.3,884.3 1536.5,879.9 1547.7,880.7" fill="#A9D3B1" opacity="0.55"/><polygon points="779.2,1166.5 775.7,1178.2 759.8,1181.6 754.0,1170.4 752.2,1162.0 761.0,1155.7 771.7,1158.9" fill="#A9D3B1" opacity="0.55"/><polygon points="665.7,827.2 660.1,833.3 652.4,832.9 646.0,830.3 645.0,823.7 652.0,820.0 658.8,822.3" fill="#A9D3B1" opacity="0.55"/><polygon points="690.2,589.5 674.6,598.5 660.2,608.3 640.2,599.3 646.0,582.0 662.3,578.0 678.5,576.6" fill="#A9D3B1" opacity="0.55"/><polygon points="1041.5,747.0 1044.1,759.2 1028.4,759.8 1017.4,752.7 1014.4,740.2 1028.3,734.2 1039.6,739.5" fill="#A9D3B1" opacity="0.55"/><polygon points="851.3,702.0 847.9,708.2 840.2,707.3 836.2,704.1 833.8,699.0 839.5,694.2 848.2,695.5" fill="#A9D3B1" opacity="0.55"/><polygon points="785.3,1270.5 773.5,1280.6 760.1,1281.6 742.5,1278.5 748.7,1264.8 759.6,1257.3 775.4,1258.4" fill="#A9D3B1" opacity="0.55"/><polygon points="973.5,1311.6 973.4,1318.7 963.7,1320.8 954.3,1316.3 955.2,1307.3 963.2,1300.7 975.3,1302.7" fill="#A9D3B1" opacity="0.55"/><polygon points="1101.1,1019.6 1099.2,1026.0 1091.3,1024.8 1082.9,1023.4 1086.2,1017.1 1090.8,1012.3 1101.0,1011.4" fill="#A9D3B1" opacity="0.55"/><polygon points="694.0,615.1 693.4,624.9 681.8,621.8 668.5,621.0 668.4,609.3 680.0,602.4 691.6,607.2" fill="#A9D3B1" opacity="0.55"/><polygon points="893.0,1162.2 887.3,1170.2 876.3,1173.0 864.8,1167.9 863.2,1156.0 875.2,1147.6 886.2,1155.4" fill="#A9D3B1" opacity="0.55"/><polygon points="905.4,970.0 899.3,977.3 889.7,978.1 880.2,974.5 878.8,964.9 887.5,954.1 904.2,957.7" fill="#A9D3B1" opacity="0.55"/><polygon points="1490.1,1437.4 1483.6,1453.1 1464.9,1448.2 1447.2,1445.4 1448.1,1429.8 1464.1,1423.9 1481.3,1424.0" fill="#A9D3B1" opacity="0.55"/><polygon points="1570.1,1003.0 1565.2,1012.0 1551.7,1019.3 1546.8,1006.7 1545.0,998.7 1552.2,988.7 1566.0,993.3" fill="#A9D3B1" opacity="0.55"/><polygon points="692.4,1161.2 686.5,1168.6 676.3,1171.2 667.3,1165.8 668.7,1157.2 677.1,1154.2 685.1,1155.2" fill="#A9D3B1" opacity="0.55"/><polygon points="1504.3,1062.3 1497.4,1067.0 1491.4,1067.3 1484.4,1065.6 1486.1,1059.8 1490.8,1055.3 1498.7,1056.4" fill="#A9D3B1" opacity="0.55"/><polygon points="831.2,1084.0 828.1,1090.0 820.6,1088.9 814.4,1086.9 816.4,1081.8 820.1,1077.2 829.2,1076.8" fill="#A9D3B1" opacity="0.55"/><polygon points="1162.3,1208.9 1164.6,1223.9 1145.0,1224.9 1138.4,1213.2 1129.8,1201.2 1146.0,1196.2 1158.0,1200.5" fill="#A9D3B1" opacity="0.55"/><polyline points="1563.6,1075.5 1563.0,1047.4 1561.0,1034.3 1539.4,1013.2" fill="none" stroke="#F6F8F6" stroke-width="1.2" stroke-linejoin="round" stroke-linecap="round" opacity="0.85"/><polyline points="1559.1,984.5 1587.0,1005.9 1610.6,1031.3 1632.5,1059.7" fill="none" stroke="#F6F8F6" stroke-width="1.2" stroke-linejoin="round" stroke-linecap="round" opacity="0.85"/><polyline points="1473.4,727.8 1485.4,699.1 1480.1,681.2 1464.7,661.1 1452.4,643.7" fill="none" stroke="#F6F8F6" stroke-width="1.2" stroke-linejoin="round" stroke-linecap="round" opacity="0.85"/><polyline points="1087.4,1298.6 1065.7,1323.3 1059.4,1358.8 1051.8,1375.8 1052.0,1399.4" fill="none" stroke="#F6F8F6" stroke-width="1.2" stroke-linejoin="round" stroke-linecap="round" opacity="0.85"/><polyline points="1440.4,1091.6 1451.1,1100.5 1465.9,1106.1" fill="none" stroke="#F6F8F6" stroke-width="1.2" stroke-linejoin="round" stroke-linecap="round" opacity="0.85"/><polyline points="1534.3,1348.9 1527.4,1331.7 1537.3,1301.5 1537.1,1277.9" fill="none" stroke="#F6F8F6" stroke-width="1.2" stroke-linejoin="round" stroke-linecap="round" opacity="0.85"/><polyline points="618.0,1455.1 588.4,1441.1 572.0,1444.6 543.2,1437.6 518.9,1435.5 487.5,1448.5" fill="none" stroke="#F6F8F6" stroke-width="1.2" stroke-linejoin="round" stroke-linecap="round" opacity="0.85"/><polyline points="990.7,1348.3 968.2,1335.9 953.2,1332.3" fill="none" stroke="#F6F8F6" stroke-width="1.2" stroke-linejoin="round" stroke-linecap="round" opacity="0.85"/><polyline points="1224.5,766.0 1229.3,742.3 1243.9,728.4 1257.4,707.9 1261.0,689.8 1279.4,668.9" fill="none" stroke="#F6F8F6" stroke-width="1.2" stroke-linejoin="round" stroke-linecap="round" opacity="0.85"/><polyline points="1230.8,1219.7 1251.7,1233.5 1277.6,1240.2 1312.9,1250.8 1320.1,1261.5 1335.6,1289.6" fill="none" stroke="#F6F8F6" stroke-width="1.2" stroke-linejoin="round" stroke-linecap="round" opacity="0.85"/><polyline points="1475.0,1261.4 1459.5,1249.8 1442.5,1219.6" fill="none" stroke="#F6F8F6" stroke-width="1.2" stroke-linejoin="round" stroke-linecap="round" opacity="0.85"/><polyline points="1542.0,1179.6 1526.2,1199.3 1510.2,1213.0 1492.0,1226.4 1485.5,1246.1" fill="none" stroke="#F6F8F6" stroke-width="1.2" stroke-linejoin="round" stroke-linecap="round" opacity="0.85"/><polyline points="919.8,1449.8 889.8,1435.9 883.0,1421.5 856.6,1398.4 843.6,1379.9" fill="none" stroke="#F6F8F6" stroke-width="1.2" stroke-linejoin="round" stroke-linecap="round" opacity="0.85"/><polyline points="993.4,1259.7 1011.5,1234.8 1019.0,1209.0" fill="none" stroke="#F6F8F6" stroke-width="1.2" stroke-linejoin="round" stroke-linecap="round" opacity="0.85"/><polyline points="1259.1,1429.9 1270.9,1437.6 1297.8,1441.1 1312.4,1456.5" fill="none" stroke="#F6F8F6" stroke-width="1.2" stroke-linejoin="round" stroke-linecap="round" opacity="0.85"/><polyline points="1376.0,956.9 1395.0,949.8 1419.4,924.3" fill="none" stroke="#F6F8F6" stroke-width="1.2" stroke-linejoin="round" stroke-linecap="round" opacity="0.85"/><polyline points="1145.5,1247.5 1137.2,1231.9 1127.0,1218.0 1110.9,1187.5" fill="none" stroke="#F6F8F6" stroke-width="1.2" stroke-linejoin="round" stroke-linecap="round" opacity="0.85"/><polyline points="1248.2,753.1 1248.8,739.1 1264.6,708.1 1268.5,693.0" fill="none" stroke="#F6F8F6" stroke-width="1.2" stroke-linejoin="round" stroke-linecap="round" opacity="0.85"/><polyline points="783.2,1052.5 800.4,1049.2 829.0,1036.0 851.0,1030.9 871.8,1031.5" fill="none" stroke="#F6F8F6" stroke-width="1.2" stroke-linejoin="round" stroke-linecap="round" opacity="0.85"/><polyline points="651.1,944.6 680.6,968.0 712.0,986.5 718.3,997.5 738.5,1018.3" fill="none" stroke="#F6F8F6" stroke-width="1.2" stroke-linejoin="round" stroke-linecap="round" opacity="0.85"/><polyline points="909.9,945.3 901.5,936.0 878.2,925.2 865.1,908.4 849.3,894.6" fill="none" stroke="#F6F8F6" stroke-width="1.2" stroke-linejoin="round" stroke-linecap="round" opacity="0.85"/><polyline points="1280.6,1342.0 1304.0,1357.5 1316.7,1378.4 1343.6,1388.8 1365.6,1403.2" fill="none" stroke="#F6F8F6" stroke-width="1.2" stroke-linejoin="round" stroke-linecap="round" opacity="0.85"/><polyline points="1307.1,1072.2 1304.9,1084.2 1300.5,1112.9 1289.6,1131.4 1272.8,1137.5" fill="none" stroke="#F6F8F6" stroke-width="1.2" stroke-linejoin="round" stroke-linecap="round" opacity="0.85"/><polyline points="1357.9,659.1 1382.4,650.1 1405.6,627.7 1418.1,603.0" fill="none" stroke="#F6F8F6" stroke-width="1.2" stroke-linejoin="round" stroke-linecap="round" opacity="0.85"/><polyline points="1338.7,1374.5 1353.8,1359.8 1374.7,1349.0 1392.2,1349.4" fill="none" stroke="#F6F8F6" stroke-width="1.2" stroke-linejoin="round" stroke-linecap="round" opacity="0.85"/><polyline points="1515.4,1372.9 1494.6,1401.7 1492.2,1432.6 1506.7,1457.4" fill="none" stroke="#F6F8F6" stroke-width="1.2" stroke-linejoin="round" stroke-linecap="round" opacity="0.85"/><polyline points="999.3,1340.4 1034.0,1349.3 1052.2,1371.0 1068.6,1379.7 1091.6,1383.3 1108.5,1379.5" fill="none" stroke="#F6F8F6" stroke-width="1.2" stroke-linejoin="round" stroke-linecap="round" opacity="0.85"/><polyline points="1360.5,1145.6 1363.0,1172.3 1381.7,1201.2 1382.7,1220.1 1373.0,1252.1 1373.1,1272.7" fill="none" stroke="#F6F8F6" stroke-width="1.2" stroke-linejoin="round" stroke-linecap="round" opacity="0.85"/><polyline points="1083.9,1364.1 1094.8,1371.7 1113.1,1400.6 1116.1,1413.4 1112.6,1436.6 1111.7,1452.2" fill="none" stroke="#F6F8F6" stroke-width="1.2" stroke-linejoin="round" stroke-linecap="round" opacity="0.85"/><polyline points="1539.5,1182.9 1549.9,1176.4 1565.8,1176.7 1579.5,1181.6" fill="none" stroke="#F6F8F6" stroke-width="1.2" stroke-linejoin="round" stroke-linecap="round" opacity="0.85"/><polyline points="763.6,1180.8 784.7,1201.1 801.6,1213.2 812.1,1238.3 832.7,1257.7" fill="none" stroke="#F6F8F6" stroke-width="1.2" stroke-linejoin="round" stroke-linecap="round" opacity="0.85"/><polyline points="608.5,698.7 588.7,674.9 554.5,666.4 540.6,671.7 504.8,661.7 493.3,658.0" fill="none" stroke="#F6F8F6" stroke-width="1.2" stroke-linejoin="round" stroke-linecap="round" opacity="0.85"/><polyline points="819.4,1055.6 797.8,1029.5 797.1,1015.5" fill="none" stroke="#F6F8F6" stroke-width="1.2" stroke-linejoin="round" stroke-linecap="round" opacity="0.85"/><polyline points="1574.2,1330.8 1593.1,1333.6 1611.1,1328.0 1619.2,1317.6" fill="none" stroke="#F6F8F6" stroke-width="1.2" stroke-linejoin="round" stroke-linecap="round" opacity="0.85"/><polyline points="1107.3,939.1 1086.9,938.5 1067.4,952.2 1054.9,968.6 1035.8,1001.2" fill="none" stroke="#F6F8F6" stroke-width="1.2" stroke-linejoin="round" stroke-linecap="round" opacity="0.85"/><polyline points="1346.5,816.4 1333.8,826.1 1300.3,836.0 1265.3,831.2 1248.1,825.4 1212.4,813.3" fill="none" stroke="#F6F8F6" stroke-width="1.2" stroke-linejoin="round" stroke-linecap="round" opacity="0.85"/><polyline points="1294.3,1222.4 1308.3,1224.8 1320.5,1229.1 1338.5,1242.7" fill="none" stroke="#F6F8F6" stroke-width="1.2" stroke-linejoin="round" stroke-linecap="round" opacity="0.85"/><polyline points="1157.7,1182.7 1133.0,1193.8 1107.2,1206.6 1088.9,1216.7 1069.1,1226.0" fill="none" stroke="#F6F8F6" stroke-width="1.2" stroke-linejoin="round" stroke-linecap="round" opacity="0.85"/><polyline points="1427.1,1276.4 1446.3,1265.3 1471.0,1252.2 1490.8,1247.4 1516.9,1245.9" fill="none" stroke="#F6F8F6" stroke-width="1.2" stroke-linejoin="round" stroke-linecap="round" opacity="0.85"/><polyline points="818.7,1119.0 806.9,1136.4 789.2,1156.6 775.7,1158.7 754.7,1154.3 738.6,1157.6" fill="none" stroke="#F6F8F6" stroke-width="1.2" stroke-linejoin="round" stroke-linecap="round" opacity="0.85"/><polyline points="962.8,1172.8 994.8,1190.6 1010.4,1215.1 1010.2,1235.4 1016.5,1269.3 1022.9,1291.0" fill="none" stroke="#F6F8F6" stroke-width="1.2" stroke-linejoin="round" stroke-linecap="round" opacity="0.85"/><polyline points="1303.4,910.1 1294.6,921.5 1276.2,954.6 1259.5,971.4 1237.1,995.3" fill="none" stroke="#F6F8F6" stroke-width="1.2" stroke-linejoin="round" stroke-linecap="round" opacity="0.85"/><polyline points="1360.1,711.9 1347.3,685.7 1340.2,661.1 1342.8,642.7 1345.4,631.0" fill="none" stroke="#F6F8F6" stroke-width="1.2" stroke-linejoin="round" stroke-linecap="round" opacity="0.85"/><polyline points="855.5,1099.7 840.5,1110.7 827.1,1129.9 812.1,1149.7 811.1,1165.0" fill="none" stroke="#F6F8F6" stroke-width="1.2" stroke-linejoin="round" stroke-linecap="round" opacity="0.85"/><polyline points="1561.9,835.6 1572.3,816.5 1567.9,785.2" fill="none" stroke="#F6F8F6" stroke-width="1.2" stroke-linejoin="round" stroke-linecap="round" opacity="0.85"/><polyline points="1573.5,959.3 1553.8,949.3 1523.6,929.6 1486.8,924.2 1467.2,914.9" fill="none" stroke="#F6F8F6" stroke-width="1.2" stroke-linejoin="round" stroke-linecap="round" opacity="0.85"/><polyline points="1265.9,869.9 1290.6,876.9 1324.8,886.4 1335.0,893.9 1352.4,910.4 1378.1,932.4" fill="none" stroke="#F6F8F6" stroke-width="1.2" stroke-linejoin="round" stroke-linecap="round" opacity="0.85"/><polyline points="1012.5,996.8 1022.9,985.3 1033.8,979.7 1045.1,966.7 1070.4,940.9 1080.0,922.8" fill="none" stroke="#F6F8F6" stroke-width="1.2" stroke-linejoin="round" stroke-linecap="round" opacity="0.85"/><polyline points="984.8,984.7 994.5,992.4 1021.4,1013.3" fill="none" stroke="#F6F8F6" stroke-width="1.2" stroke-linejoin="round" stroke-linecap="round" opacity="0.85"/><polyline points="811.0,979.8 827.9,962.0 832.0,932.3 832.6,905.1" fill="none" stroke="#F6F8F6" stroke-width="1.2" stroke-linejoin="round" stroke-linecap="round" opacity="0.85"/><polyline points="1602.1,1298.8 1610.4,1284.1 1626.0,1277.8 1650.2,1269.6" fill="none" stroke="#F6F8F6" stroke-width="1.2" stroke-linejoin="round" stroke-linecap="round" opacity="0.85"/><polyline points="680.6,917.7 669.3,895.1 662.0,883.9 636.1,861.0 622.0,829.8" fill="none" stroke="#F6F8F6" stroke-width="1.2" stroke-linejoin="round" stroke-linecap="round" opacity="0.85"/><polyline points="852.9,757.8 870.2,781.1 875.5,795.9 870.2,816.1 864.2,845.8" fill="none" stroke="#F6F8F6" stroke-width="1.2" stroke-linejoin="round" stroke-linecap="round" opacity="0.85"/><polyline points="1264.2,1221.7 1290.8,1219.8 1308.9,1213.7" fill="none" stroke="#F6F8F6" stroke-width="1.2" stroke-linejoin="round" stroke-linecap="round" opacity="0.85"/><polyline points="1397.8,836.6 1386.4,807.8 1374.1,795.7 1341.6,784.6 1326.3,787.7 1295.0,776.8" fill="none" stroke="#F6F8F6" stroke-width="1.2" stroke-linejoin="round" stroke-linecap="round" opacity="0.85"/><polyline points="1095.6,592.5 1090.2,563.5 1091.5,543.8 1080.1,512.0" fill="none" stroke="#F6F8F6" stroke-width="1.2" stroke-linejoin="round" stroke-linecap="round" opacity="0.85"/><polyline points="740.4,1387.7 745.8,1404.1 756.1,1412.5" fill="none" stroke="#F6F8F6" stroke-width="1.2" stroke-linejoin="round" stroke-linecap="round" opacity="0.85"/><polyline points="819.2,1313.5 819.0,1297.5 801.1,1273.3 768.8,1263.5 750.8,1263.5 730.6,1261.0" fill="none" stroke="#F6F8F6" stroke-width="1.2" stroke-linejoin="round" stroke-linecap="round" opacity="0.85"/><polyline points="1159.7,715.5 1175.3,707.3 1204.3,711.3 1240.6,702.5 1254.8,695.1" fill="none" stroke="#F6F8F6" stroke-width="1.2" stroke-linejoin="round" stroke-linecap="round" opacity="0.85"/><polyline points="887.3,1156.2 875.2,1127.8 861.0,1101.7 832.1,1084.7" fill="none" stroke="#F6F8F6" stroke-width="1.2" stroke-linejoin="round" stroke-linecap="round" opacity="0.85"/><polyline points="716.5,1392.5 736.5,1385.9 761.4,1386.8" fill="none" stroke="#F6F8F6" stroke-width="1.2" stroke-linejoin="round" stroke-linecap="round" opacity="0.85"/><polyline points="1533.1,661.8 1507.0,660.8 1493.6,668.7 1470.5,695.3 1453.8,701.8" fill="none" stroke="#F6F8F6" stroke-width="1.2" stroke-linejoin="round" stroke-linecap="round" opacity="0.85"/><polyline points="1527.8,608.5 1494.1,594.2 1483.3,586.4" fill="none" stroke="#F6F8F6" stroke-width="1.2" stroke-linejoin="round" stroke-linecap="round" opacity="0.85"/><polyline points="929.8,975.7 944.4,1004.7 953.8,1014.8 962.7,1026.2 980.9,1053.1" fill="none" stroke="#F6F8F6" stroke-width="1.2" stroke-linejoin="round" stroke-linecap="round" opacity="0.85"/><polyline points="1195.1,986.0 1225.1,988.7 1258.9,987.8" fill="none" stroke="#F6F8F6" stroke-width="1.2" stroke-linejoin="round" stroke-linecap="round" opacity="0.85"/><polyline points="670.1,1220.3 650.6,1189.4 626.4,1165.7 619.8,1142.2 609.7,1131.8" fill="none" stroke="#F6F8F6" stroke-width="1.2" stroke-linejoin="round" stroke-linecap="round" opacity="0.85"/><polyline points="1481.7,683.0 1464.0,687.9 1451.1,690.2" fill="none" stroke="#F6F8F6" stroke-width="1.2" stroke-linejoin="round" stroke-linecap="round" opacity="0.85"/><polyline points="852.0,1415.5 824.3,1437.8 800.0,1446.9 789.2,1456.5" fill="none" stroke="#F6F8F6" stroke-width="1.2" stroke-linejoin="round" stroke-linecap="round" opacity="0.85"/><polyline points="699.9,627.2 708.9,611.7 721.2,601.5 727.9,590.5" fill="none" stroke="#F6F8F6" stroke-width="1.2" stroke-linejoin="round" stroke-linecap="round" opacity="0.85"/><polyline points="990.6,1035.9 999.1,1061.6 1016.6,1082.8" fill="none" stroke="#F6F8F6" stroke-width="1.2" stroke-linejoin="round" stroke-linecap="round" opacity="0.85"/><polyline points="1385.6,1205.5 1406.0,1201.2 1418.6,1189.0 1433.9,1182.7" fill="none" stroke="#F6F8F6" stroke-width="1.2" stroke-linejoin="round" stroke-linecap="round" opacity="0.85"/><polyline points="899.9,653.9 878.5,624.4 863.1,607.9 845.3,603.5" fill="none" stroke="#F6F8F6" stroke-width="1.2" stroke-linejoin="round" stroke-linecap="round" opacity="0.85"/><polyline points="1334.8,1177.3 1339.0,1194.1 1328.7,1222.1 1320.4,1233.1 1322.2,1268.0" fill="none" stroke="#F6F8F6" stroke-width="1.2" stroke-linejoin="round" stroke-linecap="round" opacity="0.85"/><polyline points="631.1,1042.5 609.6,1061.2 597.7,1086.9" fill="none" stroke="#F6F8F6" stroke-width="1.2" stroke-linejoin="round" stroke-linecap="round" opacity="0.85"/><polyline points="1448.0,1272.2 1473.3,1293.3 1498.1,1313.6 1512.6,1325.4 1524.2,1341.6" fill="none" stroke="#F6F8F6" stroke-width="1.2" stroke-linejoin="round" stroke-linecap="round" opacity="0.85"/><polyline points="646.4,990.2 651.4,957.1 669.5,927.6 679.3,891.9" fill="none" stroke="#F6F8F6" stroke-width="1.2" stroke-linejoin="round" stroke-linecap="round" opacity="0.85"/><polyline points="1130.5,1412.4 1146.6,1442.4 1167.2,1460.3 1191.4,1485.3 1213.8,1513.9" fill="none" stroke="#F6F8F6" stroke-width="1.2" stroke-linejoin="round" stroke-linecap="round" opacity="0.85"/><polyline points="1492.3,624.2 1488.4,594.7 1504.1,565.1 1509.0,551.7 1527.2,523.3 1536.5,497.4" fill="none" stroke="#F6F8F6" stroke-width="1.2" stroke-linejoin="round" stroke-linecap="round" opacity="0.85"/><polyline points="1438.5,1277.8 1474.7,1284.1 1493.3,1299.9 1509.8,1310.7 1535.9,1312.9 1555.4,1302.2" fill="none" stroke="#F6F8F6" stroke-width="1.2" stroke-linejoin="round" stroke-linecap="round" opacity="0.85"/><polyline points="1064.1,608.7 1060.5,643.6 1061.2,669.6 1067.9,685.9 1072.5,707.2" fill="none" stroke="#F6F8F6" stroke-width="1.2" stroke-linejoin="round" stroke-linecap="round" opacity="0.85"/><polyline points="1499.4,922.9 1493.7,939.8 1472.3,957.7 1450.3,961.0" fill="none" stroke="#F6F8F6" stroke-width="1.2" stroke-linejoin="round" stroke-linecap="round" opacity="0.85"/><polyline points="1098.2,1421.1 1066.3,1401.9 1055.0,1397.3 1045.7,1385.9" fill="none" stroke="#F6F8F6" stroke-width="1.2" stroke-linejoin="round" stroke-linecap="round" opacity="0.85"/><polyline points="841.6,1077.4 829.2,1041.9 828.9,1010.4 832.3,995.2 842.5,979.7" fill="none" stroke="#F6F8F6" stroke-width="1.2" stroke-linejoin="round" stroke-linecap="round" opacity="0.85"/><polyline points="1013.6,1032.6 994.1,1041.3 966.2,1046.8 942.3,1056.0 907.0,1060.3" fill="none" stroke="#F6F8F6" stroke-width="1.2" stroke-linejoin="round" stroke-linecap="round" opacity="0.85"/><polyline points="1096.6,900.1 1129.2,912.9 1150.8,909.5" fill="none" stroke="#F6F8F6" stroke-width="1.2" stroke-linejoin="round" stroke-linecap="round" opacity="0.85"/><polyline points="907.6,1031.0 927.1,1037.1 963.1,1029.8 977.9,1035.1 1002.0,1047.3 1023.9,1043.6" fill="none" stroke="#F6F8F6" stroke-width="1.2" stroke-linejoin="round" stroke-linecap="round" opacity="0.85"/><polyline points="1348.6,1144.5 1351.2,1170.5 1358.9,1207.2 1359.0,1240.1" fill="none" stroke="#F6F8F6" stroke-width="1.2" stroke-linejoin="round" stroke-linecap="round" opacity="0.85"/><polyline points="1276.9,914.8 1296.1,915.5 1320.5,904.0 1353.2,904.6 1368.5,901.6" fill="none" stroke="#F6F8F6" stroke-width="1.2" stroke-linejoin="round" stroke-linecap="round" opacity="0.85"/><polyline points="1114.7,1352.1 1125.1,1386.1 1131.6,1422.8 1127.1,1443.7" fill="none" stroke="#F6F8F6" stroke-width="1.2" stroke-linejoin="round" stroke-linecap="round" opacity="0.85"/><polyline points="1294.2,819.7 1303.3,801.5 1308.7,787.7 1309.6,765.5 1305.2,728.7 1297.8,713.1" fill="none" stroke="#F6F8F6" stroke-width="1.2" stroke-linejoin="round" stroke-linecap="round" opacity="0.85"/><polyline points="1511.8,976.2 1528.0,964.3 1541.8,935.7 1552.4,911.4" fill="none" stroke="#F6F8F6" stroke-width="1.2" stroke-linejoin="round" stroke-linecap="round" opacity="0.85"/><polyline points="1271.0,1242.3 1261.0,1262.2 1234.3,1283.5 1225.8,1305.6 1233.8,1330.2" fill="none" stroke="#F6F8F6" stroke-width="1.2" stroke-linejoin="round" stroke-linecap="round" opacity="0.85"/><polyline points="1298.8,848.9 1281.3,843.3 1256.2,850.7 1226.6,848.8 1193.6,850.6" fill="none" stroke="#F6F8F6" stroke-width="1.2" stroke-linejoin="round" stroke-linecap="round" opacity="0.85"/><polyline points="705.5,850.1 699.4,828.7 709.8,799.2" fill="none" stroke="#F6F8F6" stroke-width="1.2" stroke-linejoin="round" stroke-linecap="round" opacity="0.85"/><polyline points="938.5,925.5 961.7,905.6 972.7,876.5 981.3,841.4 980.3,823.9" fill="none" stroke="#F6F8F6" stroke-width="1.2" stroke-linejoin="round" stroke-linecap="round" opacity="0.85"/><polyline points="1282.4,1393.6 1300.4,1416.8 1312.1,1436.0" fill="none" stroke="#F6F8F6" stroke-width="1.2" stroke-linejoin="round" stroke-linecap="round" opacity="0.85"/><polyline points="1173.0,821.0 1176.2,791.7 1187.4,769.3 1217.5,750.8" fill="none" stroke="#F6F8F6" stroke-width="1.2" stroke-linejoin="round" stroke-linecap="round" opacity="0.85"/><polyline points="1344.2,1302.5 1316.5,1290.1 1295.2,1272.1 1282.5,1266.8 1253.7,1249.8" fill="none" stroke="#F6F8F6" stroke-width="1.2" stroke-linejoin="round" stroke-linecap="round" opacity="0.85"/><polyline points="869.0,767.5 878.5,792.6 875.9,806.4" fill="none" stroke="#F6F8F6" stroke-width="1.2" stroke-linejoin="round" stroke-linecap="round" opacity="0.85"/><polyline points="616.6,1035.2 638.8,1043.9 656.3,1059.8 683.8,1085.2 701.4,1106.2" fill="none" stroke="#F6F8F6" stroke-width="1.2" stroke-linejoin="round" stroke-linecap="round" opacity="0.85"/><polyline points="625.6,1053.3 602.0,1069.1 587.9,1084.1 574.6,1095.7 558.0,1100.9 525.4,1095.4" fill="none" stroke="#F6F8F6" stroke-width="1.2" stroke-linejoin="round" stroke-linecap="round" opacity="0.85"/><polyline points="1136.0,606.8 1146.9,591.3 1162.4,557.9" fill="none" stroke="#F6F8F6" stroke-width="1.2" stroke-linejoin="round" stroke-linecap="round" opacity="0.85"/><polyline points="869.7,658.8 890.2,676.8 922.8,688.4 939.6,716.6 937.4,737.1 927.6,746.8" fill="none" stroke="#F6F8F6" stroke-width="1.2" stroke-linejoin="round" stroke-linecap="round" opacity="0.85"/><polyline points="1076.1,697.7 1055.1,716.2 1050.2,731.8 1041.6,742.7 1029.9,747.0 997.3,745.6" fill="none" stroke="#F6F8F6" stroke-width="1.2" stroke-linejoin="round" stroke-linecap="round" opacity="0.85"/><polyline points="1344.2,1260.5 1342.8,1297.1 1324.7,1322.1 1313.7,1330.2 1307.6,1340.8" fill="none" stroke="#F6F8F6" stroke-width="1.2" stroke-linejoin="round" stroke-linecap="round" opacity="0.85"/><polyline points="1466.1,1215.3 1448.4,1193.2 1437.3,1176.3 1426.9,1165.9 1413.9,1138.9" fill="none" stroke="#F6F8F6" stroke-width="1.2" stroke-linejoin="round" stroke-linecap="round" opacity="0.85"/><polyline points="1018.7,605.9 1003.7,575.0 982.7,547.0" fill="none" stroke="#F6F8F6" stroke-width="1.2" stroke-linejoin="round" stroke-linecap="round" opacity="0.85"/><polyline points="1084.4,652.8 1067.9,681.8 1067.9,696.6 1065.7,721.8 1071.6,739.4" fill="none" stroke="#F6F8F6" stroke-width="1.2" stroke-linejoin="round" stroke-linecap="round" opacity="0.85"/><polyline points="614.5,1379.8 618.6,1349.2 606.8,1315.9 600.3,1301.8 574.7,1284.4 564.5,1276.8" fill="none" stroke="#F6F8F6" stroke-width="1.2" stroke-linejoin="round" stroke-linecap="round" opacity="0.85"/><polyline points="1415.1,1436.4 1441.8,1439.8 1468.0,1462.0" fill="none" stroke="#F6F8F6" stroke-width="1.2" stroke-linejoin="round" stroke-linecap="round" opacity="0.85"/><polyline points="935.2,1072.4 924.8,1086.3 910.0,1117.9 914.4,1152.5" fill="none" stroke="#F6F8F6" stroke-width="1.2" stroke-linejoin="round" stroke-linecap="round" opacity="0.85"/><polyline points="1548.2,967.2 1529.9,947.6 1515.1,916.6 1492.3,898.8 1477.5,864.0 1475.1,840.0" fill="none" stroke="#F6F8F6" stroke-width="1.2" stroke-linejoin="round" stroke-linecap="round" opacity="0.85"/><polyline points="1483.3,1113.2 1492.0,1123.7 1524.7,1142.3 1546.7,1145.3 1575.4,1162.5 1598.7,1183.3" fill="none" stroke="#F6F8F6" stroke-width="1.2" stroke-linejoin="round" stroke-linecap="round" opacity="0.85"/><polyline points="631.7,662.5 641.0,653.1 655.4,619.9" fill="none" stroke="#F6F8F6" stroke-width="1.2" stroke-linejoin="round" stroke-linecap="round" opacity="0.85"/><polyline points="815.0,1171.3 826.5,1160.1 830.5,1128.7 815.0,1094.8 812.8,1078.1 817.5,1062.5" fill="none" stroke="#F6F8F6" stroke-width="1.2" stroke-linejoin="round" stroke-linecap="round" opacity="0.85"/><polyline points="1110.8,673.1 1119.5,664.8 1145.1,657.9 1169.7,662.6 1195.5,672.1 1205.5,681.9" fill="none" stroke="#F6F8F6" stroke-width="1.2" stroke-linejoin="round" stroke-linecap="round" opacity="0.85"/><polyline points="647.8,1060.0 635.2,1083.4 633.7,1100.2 630.4,1133.8 639.7,1162.7 639.1,1192.2" fill="none" stroke="#F6F8F6" stroke-width="1.2" stroke-linejoin="round" stroke-linecap="round" opacity="0.85"/><polyline points="1587.1,1119.2 1597.2,1129.3 1629.0,1143.7 1635.4,1156.5 1649.6,1170.7" fill="none" stroke="#F6F8F6" stroke-width="1.2" stroke-linejoin="round" stroke-linecap="round" opacity="0.85"/><polyline points="892.0,1014.8 884.0,1005.6 869.5,1001.8 845.7,987.9 825.5,975.2" fill="none" stroke="#F6F8F6" stroke-width="1.2" stroke-linejoin="round" stroke-linecap="round" opacity="0.85"/><polyline points="1004.9,1117.7 1002.9,1084.0 1006.0,1071.6" fill="none" stroke="#F6F8F6" stroke-width="1.2" stroke-linejoin="round" stroke-linecap="round" opacity="0.85"/><polyline points="1281.4,1328.0 1258.2,1356.2 1240.9,1381.2" fill="none" stroke="#F6F8F6" stroke-width="1.2" stroke-linejoin="round" stroke-linecap="round" opacity="0.85"/><polyline points="848.4,844.5 841.3,859.0 842.0,895.7 837.1,919.5 825.6,948.9" fill="none" stroke="#F6F8F6" stroke-width="1.2" stroke-linejoin="round" stroke-linecap="round" opacity="0.85"/><polyline points="1351.7,866.8 1354.4,854.6 1348.7,820.0" fill="none" stroke="#F6F8F6" stroke-width="1.2" stroke-linejoin="round" stroke-linecap="round" opacity="0.85"/><polyline points="1524.0,869.3 1544.4,843.7 1554.1,832.7 1572.7,824.9" fill="none" stroke="#F6F8F6" stroke-width="1.2" stroke-linejoin="round" stroke-linecap="round" opacity="0.85"/><polyline points="1226.9,903.1 1201.8,909.2 1175.8,910.0 1157.0,897.6 1145.1,870.1 1148.5,856.2" fill="none" stroke="#F6F8F6" stroke-width="1.2" stroke-linejoin="round" stroke-linecap="round" opacity="0.85"/><polyline points="807.7,832.9 830.0,826.3 854.9,799.5" fill="none" stroke="#F6F8F6" stroke-width="1.2" stroke-linejoin="round" stroke-linecap="round" opacity="0.85"/><polyline points="1210.3,1120.6 1213.5,1138.7 1219.7,1149.8 1223.9,1166.8 1244.2,1197.8" fill="none" stroke="#F6F8F6" stroke-width="1.2" stroke-linejoin="round" stroke-linecap="round" opacity="0.85"/><polyline points="1243.4,1100.2 1237.2,1081.3 1226.2,1073.0" fill="none" stroke="#F6F8F6" stroke-width="1.2" stroke-linejoin="round" stroke-linecap="round" opacity="0.85"/><polyline points="607.7,898.1 618.0,925.1 630.0,957.8" fill="none" stroke="#F6F8F6" stroke-width="1.2" stroke-linejoin="round" stroke-linecap="round" opacity="0.85"/><polyline points="1523.8,976.0 1537.8,958.2 1556.7,944.2 1570.5,939.6 1590.5,945.5" fill="none" stroke="#F6F8F6" stroke-width="1.2" stroke-linejoin="round" stroke-linecap="round" opacity="0.85"/><polyline points="1434.4,607.0 1433.5,589.6 1428.0,569.6 1425.0,535.8" fill="none" stroke="#F6F8F6" stroke-width="1.2" stroke-linejoin="round" stroke-linecap="round" opacity="0.85"/><polyline points="666.4,658.7 673.4,643.6 672.4,629.1 684.9,611.0 704.5,592.7" fill="none" stroke="#F6F8F6" stroke-width="1.2" stroke-linejoin="round" stroke-linecap="round" opacity="0.85"/><polyline points="818.7,637.0 834.9,650.8 846.9,662.2 873.0,679.3" fill="none" stroke="#F6F8F6" stroke-width="1.2" stroke-linejoin="round" stroke-linecap="round" opacity="0.85"/><polyline points="967.6,726.3 968.0,710.0 981.9,676.5 974.3,648.6" fill="none" stroke="#F6F8F6" stroke-width="1.2" stroke-linejoin="round" stroke-linecap="round" opacity="0.85"/><polyline points="1489.4,1251.1 1507.5,1235.0 1520.6,1232.3 1554.3,1233.0" fill="none" stroke="#F6F8F6" stroke-width="1.2" stroke-linejoin="round" stroke-linecap="round" opacity="0.85"/><polyline points="830.4,605.9 814.7,627.1 801.5,645.4" fill="none" stroke="#F6F8F6" stroke-width="1.2" stroke-linejoin="round" stroke-linecap="round" opacity="0.85"/><polyline points="1083.3,1392.3 1095.3,1383.2 1101.9,1362.9 1111.7,1327.8 1116.5,1314.8 1115.2,1283.5" fill="none" stroke="#F6F8F6" stroke-width="1.2" stroke-linejoin="round" stroke-linecap="round" opacity="0.85"/><polyline points="1162.1,1345.8 1188.0,1320.0 1201.4,1307.7 1213.6,1275.4 1213.0,1261.3 1200.0,1227.7" fill="none" stroke="#F6F8F6" stroke-width="1.2" stroke-linejoin="round" stroke-linecap="round" opacity="0.85"/><polyline points="1059.0,1223.6 1070.6,1232.4 1101.2,1243.3 1130.5,1235.5 1148.3,1230.1 1175.5,1222.2" fill="none" stroke="#F6F8F6" stroke-width="1.2" stroke-linejoin="round" stroke-linecap="round" opacity="0.85"/><polyline points="1413.5,1374.3 1403.0,1359.6 1386.9,1337.0" fill="none" stroke="#F6F8F6" stroke-width="1.2" stroke-linejoin="round" stroke-linecap="round" opacity="0.85"/><polyline points="1251.3,707.6 1272.7,680.8 1289.3,649.5 1290.1,631.6 1296.4,596.7" fill="none" stroke="#F6F8F6" stroke-width="1.2" stroke-linejoin="round" stroke-linecap="round" opacity="0.85"/><polyline points="675.9,770.9 697.1,797.2 713.6,808.9 727.0,811.6 741.6,804.2 760.9,789.1" fill="none" stroke="#F6F8F6" stroke-width="1.2" stroke-linejoin="round" stroke-linecap="round" opacity="0.85"/><polyline points="659.5,908.9 673.2,897.8 690.1,895.9 709.9,892.9 728.4,897.5 747.8,922.5" fill="none" stroke="#F6F8F6" stroke-width="1.2" stroke-linejoin="round" stroke-linecap="round" opacity="0.85"/><polyline points="625.1,736.2 596.3,750.1 573.2,774.7" fill="none" stroke="#F6F8F6" stroke-width="1.2" stroke-linejoin="round" stroke-linecap="round" opacity="0.85"/><polyline points="749.5,1294.3 727.3,1273.4 709.6,1268.9 674.1,1279.2 663.0,1290.0 643.0,1308.4" fill="none" stroke="#F6F8F6" stroke-width="1.2" stroke-linejoin="round" stroke-linecap="round" opacity="0.85"/><polyline points="1489.3,630.1 1510.4,655.9 1515.5,673.7 1518.7,691.2" fill="none" stroke="#F6F8F6" stroke-width="1.2" stroke-linejoin="round" stroke-linecap="round" opacity="0.85"/><polyline points="745.4,1235.1 762.2,1218.9 797.4,1207.1 810.8,1210.5 824.5,1219.8 838.4,1221.0" fill="none" stroke="#F6F8F6" stroke-width="1.2" stroke-linejoin="round" stroke-linecap="round" opacity="0.85"/><polyline points="974.0,844.2 959.4,823.9 943.2,799.1" fill="none" stroke="#F6F8F6" stroke-width="1.2" stroke-linejoin="round" stroke-linecap="round" opacity="0.85"/><polyline points="966.6,1039.3 932.2,1047.2 915.6,1049.4 897.2,1046.8 876.2,1051.7 847.1,1057.4" fill="none" stroke="#F6F8F6" stroke-width="1.2" stroke-linejoin="round" stroke-linecap="round" opacity="0.85"/><polyline points="667.2,1232.3 648.2,1224.8 634.8,1205.4 611.3,1183.9 604.7,1149.4 599.8,1129.5" fill="none" stroke="#F6F8F6" stroke-width="1.2" stroke-linejoin="round" stroke-linecap="round" opacity="0.85"/><polyline points="1574.9,1440.8 1593.2,1453.8 1624.4,1457.1 1654.8,1454.9" fill="none" stroke="#F6F8F6" stroke-width="1.2" stroke-linejoin="round" stroke-linecap="round" opacity="0.85"/><polyline points="977.3,1015.0 949.6,1036.2 940.3,1059.7 918.1,1076.8" fill="none" stroke="#F6F8F6" stroke-width="1.2" stroke-linejoin="round" stroke-linecap="round" opacity="0.85"/><polyline points="1246.5,993.2 1225.6,997.0 1202.3,994.6 1179.3,1003.0 1163.9,1028.2" fill="none" stroke="#F6F8F6" stroke-width="1.2" stroke-linejoin="round" stroke-linecap="round" opacity="0.85"/><polyline points="755.7,905.3 783.6,912.0 811.3,924.4 819.4,939.5 821.9,959.1" fill="none" stroke="#F6F8F6" stroke-width="1.2" stroke-linejoin="round" stroke-linecap="round" opacity="0.85"/><polyline points="851.6,1303.0 839.5,1300.4 809.7,1292.4" fill="none" stroke="#F6F8F6" stroke-width="1.2" stroke-linejoin="round" stroke-linecap="round" opacity="0.85"/><polyline points="868.4,641.6 884.2,632.0 893.0,618.0 922.3,604.0" fill="none" stroke="#F6F8F6" stroke-width="1.2" stroke-linejoin="round" stroke-linecap="round" opacity="0.85"/><polyline points="832.0,601.1 838.1,615.7 853.0,636.5" fill="none" stroke="#F6F8F6" stroke-width="1.2" stroke-linejoin="round" stroke-linecap="round" opacity="0.85"/><polyline points="916.7,947.3 883.0,960.2 868.5,972.4 865.0,985.3 852.7,994.6" fill="none" stroke="#F6F8F6" stroke-width="1.2" stroke-linejoin="round" stroke-linecap="round" opacity="0.85"/><polyline points="1470.7,869.2 1437.7,884.1 1425.2,888.6 1404.8,910.6" fill="none" stroke="#F6F8F6" stroke-width="1.2" stroke-linejoin="round" stroke-linecap="round" opacity="0.85"/><polyline points="982.5,1211.0 978.3,1224.8 971.5,1240.3" fill="none" stroke="#F6F8F6" stroke-width="1.2" stroke-linejoin="round" stroke-linecap="round" opacity="0.85"/><polyline points="1308.5,1287.5 1322.5,1257.1 1331.4,1235.6 1321.0,1200.8" fill="none" stroke="#F6F8F6" stroke-width="1.2" stroke-linejoin="round" stroke-linecap="round" opacity="0.85"/><polyline points="811.2,1319.2 786.5,1325.9 774.7,1332.4 766.7,1342.1 755.3,1355.4" fill="none" stroke="#F6F8F6" stroke-width="1.2" stroke-linejoin="round" stroke-linecap="round" opacity="0.85"/><polyline points="1318.8,979.7 1332.8,994.1 1342.6,1010.1 1357.9,1019.3" fill="none" stroke="#F6F8F6" stroke-width="1.2" stroke-linejoin="round" stroke-linecap="round" opacity="0.85"/><polyline points="1372.8,1307.8 1363.9,1283.8 1345.0,1257.8 1329.8,1245.3 1313.4,1237.6" fill="none" stroke="#F6F8F6" stroke-width="1.2" stroke-linejoin="round" stroke-linecap="round" opacity="0.85"/><polyline points="770.2,1133.9 776.8,1147.5 787.8,1170.6" fill="none" stroke="#F6F8F6" stroke-width="1.2" stroke-linejoin="round" stroke-linecap="round" opacity="0.85"/><polyline points="959.8,1210.4 946.9,1215.3 925.7,1227.7" fill="none" stroke="#F6F8F6" stroke-width="1.2" stroke-linejoin="round" stroke-linecap="round" opacity="0.85"/><polyline points="848.4,1168.3 837.1,1202.9 831.0,1232.6 822.9,1263.9 812.1,1280.9" fill="none" stroke="#F6F8F6" stroke-width="1.2" stroke-linejoin="round" stroke-linecap="round" opacity="0.85"/><polyline points="644.6,1256.9 678.9,1258.2 699.8,1274.4 729.6,1275.8 753.6,1259.3" fill="none" stroke="#F6F8F6" stroke-width="1.2" stroke-linejoin="round" stroke-linecap="round" opacity="0.85"/><polyline points="1454.8,1161.3 1452.6,1191.3 1441.2,1220.3" fill="none" stroke="#F6F8F6" stroke-width="1.2" stroke-linejoin="round" stroke-linecap="round" opacity="0.85"/><polyline points="625.2,1380.6 620.8,1360.9 627.0,1333.9" fill="none" stroke="#F6F8F6" stroke-width="1.2" stroke-linejoin="round" stroke-linecap="round" opacity="0.85"/><polyline points="1003.8,790.9 984.3,799.6 960.5,796.6 946.4,793.7 921.6,767.1 912.2,747.1" fill="none" stroke="#F6F8F6" stroke-width="1.2" stroke-linejoin="round" stroke-linecap="round" opacity="0.85"/><polyline points="822.0,742.8 825.9,726.0 844.6,700.6 867.8,692.1 892.9,696.1 903.5,703.1" fill="none" stroke="#F6F8F6" stroke-width="1.2" stroke-linejoin="round" stroke-linecap="round" opacity="0.85"/><polyline points="1111.5,1296.4 1093.9,1271.0 1090.4,1241.4 1091.8,1228.0 1081.8,1213.1" fill="none" stroke="#F6F8F6" stroke-width="1.2" stroke-linejoin="round" stroke-linecap="round" opacity="0.85"/><polyline points="940.6,1273.0 920.3,1303.6 908.8,1335.6" fill="none" stroke="#F6F8F6" stroke-width="1.2" stroke-linejoin="round" stroke-linecap="round" opacity="0.85"/><polyline points="1420.9,814.1 1403.6,828.0 1383.3,858.4 1386.0,887.8 1377.5,918.7" fill="none" stroke="#F6F8F6" stroke-width="1.2" stroke-linejoin="round" stroke-linecap="round" opacity="0.85"/><polyline points="1166.2,1382.4 1193.9,1368.6 1226.8,1365.0" fill="none" stroke="#F6F8F6" stroke-width="1.2" stroke-linejoin="round" stroke-linecap="round" opacity="0.85"/><polyline points="849.0,1157.2 841.1,1182.0 838.5,1215.2 843.1,1248.9 831.2,1281.6" fill="none" stroke="#F6F8F6" stroke-width="1.2" stroke-linejoin="round" stroke-linecap="round" opacity="0.85"/><polyline points="733.6,1405.7 746.0,1374.1 777.7,1355.8" fill="none" stroke="#F6F8F6" stroke-width="1.2" stroke-linejoin="round" stroke-linecap="round" opacity="0.85"/><polyline points="1068.4,986.4 1075.0,966.0 1070.6,951.6 1079.2,917.2" fill="none" stroke="#F6F8F6" stroke-width="1.2" stroke-linejoin="round" stroke-linecap="round" opacity="0.85"/><polyline points="618.9,905.6 610.5,890.7 598.5,871.7 593.3,835.2 582.1,809.1 585.6,785.1" fill="none" stroke="#F6F8F6" stroke-width="1.2" stroke-linejoin="round" stroke-linecap="round" opacity="0.85"/><polyline points="1502.6,1225.7 1495.6,1238.7 1476.4,1266.2 1461.7,1285.9 1444.4,1316.2" fill="none" stroke="#F6F8F6" stroke-width="1.2" stroke-linejoin="round" stroke-linecap="round" opacity="0.85"/><polyline points="1265.9,763.0 1237.8,770.6 1209.6,763.7 1186.9,755.7 1175.5,750.4" fill="none" stroke="#F6F8F6" stroke-width="1.2" stroke-linejoin="round" stroke-linecap="round" opacity="0.85"/><polyline points="725.4,1458.9 724.4,1491.4 727.3,1508.9 721.6,1541.2 729.2,1575.4" fill="none" stroke="#F6F8F6" stroke-width="1.2" stroke-linejoin="round" stroke-linecap="round" opacity="0.85"/><polyline points="1596.4,961.5 1579.3,964.0 1560.6,972.5" fill="none" stroke="#F6F8F6" stroke-width="1.2" stroke-linejoin="round" stroke-linecap="round" opacity="0.85"/><polyline points="1333.3,744.4 1319.7,736.4 1304.9,701.5" fill="none" stroke="#F6F8F6" stroke-width="1.2" stroke-linejoin="round" stroke-linecap="round" opacity="0.85"/><polyline points="1160.3,1279.8 1158.2,1301.1 1147.1,1314.5" fill="none" stroke="#F6F8F6" stroke-width="1.2" stroke-linejoin="round" stroke-linecap="round" opacity="0.85"/><polyline points="616.7,1022.1 646.1,1001.0 659.7,992.9 690.5,981.5" fill="none" stroke="#F6F8F6" stroke-width="1.2" stroke-linejoin="round" stroke-linecap="round" opacity="0.85"/><polyline points="1021.5,1109.9 1027.0,1126.6 1028.8,1139.9 1020.7,1171.8 1008.9,1183.0" fill="none" stroke="#F6F8F6" stroke-width="1.2" stroke-linejoin="round" stroke-linecap="round" opacity="0.85"/><polyline points="1384.4,1053.9 1392.1,1068.6 1390.9,1105.9 1385.9,1119.9" fill="none" stroke="#F6F8F6" stroke-width="1.2" stroke-linejoin="round" stroke-linecap="round" opacity="0.85"/><polyline points="1060.4,1102.9 1055.5,1115.3 1035.7,1127.9 1030.0,1140.5 1008.0,1160.3 1000.0,1182.9" fill="none" stroke="#F6F8F6" stroke-width="1.2" stroke-linejoin="round" stroke-linecap="round" opacity="0.85"/><polyline points="1238.7,1457.9 1221.8,1463.8 1200.9,1459.9 1180.9,1458.1" fill="none" stroke="#F6F8F6" stroke-width="1.2" stroke-linejoin="round" stroke-linecap="round" opacity="0.85"/><polyline points="1235.0,972.1 1253.3,979.2 1286.1,987.7 1308.2,1003.9 1324.1,1014.6" fill="none" stroke="#F6F8F6" stroke-width="1.2" stroke-linejoin="round" stroke-linecap="round" opacity="0.85"/><polyline points="1117.2,995.2 1097.1,1001.8 1084.9,1008.2 1069.1,1035.0" fill="none" stroke="#F6F8F6" stroke-width="1.2" stroke-linejoin="round" stroke-linecap="round" opacity="0.85"/><polyline points="932.3,1200.4 949.0,1171.1 956.2,1160.2 976.5,1146.7" fill="none" stroke="#F6F8F6" stroke-width="1.2" stroke-linejoin="round" stroke-linecap="round" opacity="0.85"/><polyline points="1107.5,1206.8 1103.0,1191.4 1100.9,1160.0 1080.2,1138.5 1063.8,1113.8 1050.2,1098.5" fill="none" stroke="#F6F8F6" stroke-width="1.2" stroke-linejoin="round" stroke-linecap="round" opacity="0.85"/><polyline points="1170.7,773.3 1179.3,752.5 1178.4,737.6 1194.2,708.8" fill="none" stroke="#F6F8F6" stroke-width="1.2" stroke-linejoin="round" stroke-linecap="round" opacity="0.85"/><polyline points="620.0,864.4 597.0,875.4 585.4,899.0 569.9,912.3 554.9,913.7 529.7,925.5" fill="none" stroke="#F6F8F6" stroke-width="1.2" stroke-linejoin="round" stroke-linecap="round" opacity="0.85"/><polyline points="1164.5,1334.2 1193.5,1318.4 1205.2,1314.5 1224.2,1318.9 1259.7,1326.8 1273.7,1327.5" fill="none" stroke="#F6F8F6" stroke-width="1.2" stroke-linejoin="round" stroke-linecap="round" opacity="0.85"/><polyline points="805.0,1228.3 816.8,1234.8 847.4,1240.1 879.1,1256.6 890.9,1280.1" fill="none" stroke="#F6F8F6" stroke-width="1.2" stroke-linejoin="round" stroke-linecap="round" opacity="0.85"/><polyline points="1525.1,658.8 1538.1,658.9 1569.1,658.8 1597.3,655.6 1613.7,658.6 1632.4,652.0" fill="none" stroke="#F6F8F6" stroke-width="1.2" stroke-linejoin="round" stroke-linecap="round" opacity="0.85"/><polyline points="678.0,721.2 702.4,735.7 718.6,735.6 743.7,723.4 780.1,715.6" fill="none" stroke="#F6F8F6" stroke-width="1.2" stroke-linejoin="round" stroke-linecap="round" opacity="0.85"/><polyline points="957.6,1441.5 937.4,1453.6 926.7,1460.4 893.1,1471.5 868.2,1496.5 842.0,1506.9" fill="none" stroke="#F6F8F6" stroke-width="1.2" stroke-linejoin="round" stroke-linecap="round" opacity="0.85"/><polyline points="1255.4,972.1 1245.1,948.0 1246.7,935.7" fill="none" stroke="#F6F8F6" stroke-width="1.2" stroke-linejoin="round" stroke-linecap="round" opacity="0.85"/><polyline points="1036.8,600.3 1026.4,588.3 994.8,581.2 970.6,575.2 956.5,567.4 937.6,551.0" fill="none" stroke="#F6F8F6" stroke-width="1.2" stroke-linejoin="round" stroke-linecap="round" opacity="0.85"/><polyline points="1525.9,1197.5 1551.7,1183.3 1580.1,1171.0 1611.9,1152.1 1647.8,1155.8" fill="none" stroke="#F6F8F6" stroke-width="1.2" stroke-linejoin="round" stroke-linecap="round" opacity="0.85"/><polyline points="1215.0,858.4 1197.5,859.9 1169.9,855.8 1146.8,869.9 1126.6,890.4" fill="none" stroke="#F6F8F6" stroke-width="1.2" stroke-linejoin="round" stroke-linecap="round" opacity="0.85"/><polyline points="1159.0,1284.9 1127.3,1298.1 1103.6,1290.9 1093.9,1281.9 1082.7,1273.3 1065.7,1263.4" fill="none" stroke="#F6F8F6" stroke-width="1.2" stroke-linejoin="round" stroke-linecap="round" opacity="0.85"/><polyline points="1106.2,1200.4 1122.8,1190.7 1139.4,1160.3 1152.0,1132.1" fill="none" stroke="#F6F8F6" stroke-width="1.2" stroke-linejoin="round" stroke-linecap="round" opacity="0.85"/><polyline points="852.4,1222.7 820.1,1213.2 806.4,1213.2" fill="none" stroke="#F6F8F6" stroke-width="1.2" stroke-linejoin="round" stroke-linecap="round" opacity="0.85"/><polyline points="854.0,1268.2 851.0,1298.1 845.3,1316.4 835.5,1334.2 814.7,1356.0 801.7,1358.2" fill="none" stroke="#F6F8F6" stroke-width="1.2" stroke-linejoin="round" stroke-linecap="round" opacity="0.85"/><polyline points="1438.4,1294.0 1435.8,1328.0 1425.6,1343.7 1412.5,1363.3" fill="none" stroke="#F6F8F6" stroke-width="1.2" stroke-linejoin="round" stroke-linecap="round" opacity="0.85"/><polyline points="618.8,652.0 615.0,624.6 620.3,611.6" fill="none" stroke="#F6F8F6" stroke-width="1.2" stroke-linejoin="round" stroke-linecap="round" opacity="0.85"/><polyline points="887.2,1319.1 867.2,1294.5 851.5,1264.6 839.7,1253.4" fill="none" stroke="#F6F8F6" stroke-width="1.2" stroke-linejoin="round" stroke-linecap="round" opacity="0.85"/><polyline points="1509.4,776.4 1520.8,742.5 1518.5,707.0 1522.0,669.9" fill="none" stroke="#F6F8F6" stroke-width="1.2" stroke-linejoin="round" stroke-linecap="round" opacity="0.85"/><polyline points="1372.6,1135.1 1350.3,1139.6 1330.7,1144.3 1316.3,1160.9 1296.6,1175.5 1282.5,1185.1" fill="none" stroke="#F6F8F6" stroke-width="1.2" stroke-linejoin="round" stroke-linecap="round" opacity="0.85"/><polyline points="854.6,1038.2 868.0,1047.7 892.0,1050.4 910.9,1052.3 937.2,1050.1" fill="none" stroke="#F6F8F6" stroke-width="1.2" stroke-linejoin="round" stroke-linecap="round" opacity="0.85"/><polyline points="1363.3,1098.7 1388.1,1126.0 1389.1,1141.6" fill="none" stroke="#F6F8F6" stroke-width="1.2" stroke-linejoin="round" stroke-linecap="round" opacity="0.85"/><polyline points="1181.7,1430.8 1174.6,1441.4 1172.0,1456.4 1175.6,1484.5" fill="none" stroke="#F6F8F6" stroke-width="1.2" stroke-linejoin="round" stroke-linecap="round" opacity="0.85"/><polyline points="1162.2,1414.4 1147.1,1381.6 1119.2,1357.4 1109.5,1344.0 1094.7,1335.7" fill="none" stroke="#F6F8F6" stroke-width="1.2" stroke-linejoin="round" stroke-linecap="round" opacity="0.85"/><polyline points="889.3,1204.6 883.0,1188.3 862.1,1173.9" fill="none" stroke="#F6F8F6" stroke-width="1.2" stroke-linejoin="round" stroke-linecap="round" opacity="0.85"/><polyline points="1262.9,1242.8 1256.5,1278.3 1233.9,1297.5" fill="none" stroke="#F6F8F6" stroke-width="1.2" stroke-linejoin="round" stroke-linecap="round" opacity="0.85"/><polyline points="1314.0,581.6 1332.6,576.5 1361.5,584.9 1381.6,591.3 1402.9,605.9 1429.5,610.0" fill="none" stroke="#F6F8F6" stroke-width="1.2" stroke-linejoin="round" stroke-linecap="round" opacity="0.85"/><polyline points="1592.0,1377.4 1583.9,1394.5 1562.9,1408.8 1538.2,1436.5" fill="none" stroke="#F6F8F6" stroke-width="1.2" stroke-linejoin="round" stroke-linecap="round" opacity="0.85"/><polyline points="1002.5,1193.7 1033.7,1189.9 1048.0,1183.1 1071.5,1165.8 1109.4,1165.8 1131.1,1183.8" fill="none" stroke="#F6F8F6" stroke-width="1.2" stroke-linejoin="round" stroke-linecap="round" opacity="0.85"/><polyline points="1253.6,721.8 1241.6,688.5 1231.6,676.4 1216.9,670.2" fill="none" stroke="#F6F8F6" stroke-width="1.2" stroke-linejoin="round" stroke-linecap="round" opacity="0.85"/><polyline points="1188.0,1284.8 1198.5,1304.9 1203.6,1316.2" fill="none" stroke="#F6F8F6" stroke-width="1.2" stroke-linejoin="round" stroke-linecap="round" opacity="0.85"/><polyline points="651.7,951.9 666.1,982.1 676.5,992.1" fill="none" stroke="#F6F8F6" stroke-width="1.2" stroke-linejoin="round" stroke-linecap="round" opacity="0.85"/><polyline points="1075.7,921.0 1071.3,950.1 1057.6,969.5" fill="none" stroke="#F6F8F6" stroke-width="1.2" stroke-linejoin="round" stroke-linecap="round" opacity="0.85"/><polyline points="1101.6,1392.8 1083.4,1388.5 1057.5,1370.3 1044.5,1365.0" fill="none" stroke="#F6F8F6" stroke-width="1.2" stroke-linejoin="round" stroke-linecap="round" opacity="0.85"/><polyline points="1355.8,645.3 1353.0,629.5 1344.1,611.1 1347.9,581.0 1348.4,564.7 1339.7,552.2" fill="none" stroke="#F6F8F6" stroke-width="1.2" stroke-linejoin="round" stroke-linecap="round" opacity="0.85"/><polyline points="1449.8,1150.3 1459.9,1158.5 1485.4,1159.8" fill="none" stroke="#F6F8F6" stroke-width="1.2" stroke-linejoin="round" stroke-linecap="round" opacity="0.85"/><polyline points="1349.3,748.3 1327.6,756.6 1313.3,758.5 1302.3,753.5" fill="none" stroke="#F6F8F6" stroke-width="1.2" stroke-linejoin="round" stroke-linecap="round" opacity="0.85"/><polyline points="818.2,930.6 823.4,949.3 831.7,965.8" fill="none" stroke="#F6F8F6" stroke-width="1.2" stroke-linejoin="round" stroke-linecap="round" opacity="0.85"/><polyline points="1261.7,870.6 1282.0,881.7 1295.9,882.0 1333.5,885.0 1345.0,894.1 1364.3,909.4" fill="none" stroke="#F6F8F6" stroke-width="1.2" stroke-linejoin="round" stroke-linecap="round" opacity="0.85"/><polyline points="789.2,1169.4 754.7,1180.8 730.6,1177.9 707.8,1187.0 689.3,1210.4 667.4,1226.3" fill="none" stroke="#F6F8F6" stroke-width="1.2" stroke-linejoin="round" stroke-linecap="round" opacity="0.85"/><polyline points="1580.0,619.8 1566.0,605.0 1539.3,600.0" fill="none" stroke="#F6F8F6" stroke-width="1.2" stroke-linejoin="round" stroke-linecap="round" opacity="0.85"/><polyline points="1324.0,886.2 1308.7,856.4 1289.7,842.7 1274.5,840.0 1252.0,834.6" fill="none" stroke="#F6F8F6" stroke-width="1.2" stroke-linejoin="round" stroke-linecap="round" opacity="0.85"/><polyline points="830.8,1378.4 826.8,1363.9 814.4,1337.2 802.5,1331.6 768.8,1323.5" fill="none" stroke="#F6F8F6" stroke-width="1.2" stroke-linejoin="round" stroke-linecap="round" opacity="0.85"/><polyline points="1600.3,860.1 1629.0,862.5 1649.2,880.0 1673.6,887.2 1693.7,892.6 1718.9,894.8" fill="none" stroke="#F6F8F6" stroke-width="1.2" stroke-linejoin="round" stroke-linecap="round" opacity="0.85"/><polyline points="1187.5,775.8 1183.5,798.4 1176.8,813.8 1168.4,831.1" fill="none" stroke="#F6F8F6" stroke-width="1.2" stroke-linejoin="round" stroke-linecap="round" opacity="0.85"/><polyline points="1371.5,1199.2 1365.9,1163.6 1362.8,1142.1 1353.4,1121.7 1348.6,1088.8 1343.5,1058.2" fill="none" stroke="#F6F8F6" stroke-width="1.2" stroke-linejoin="round" stroke-linecap="round" opacity="0.85"/><polyline points="808.3,977.8 800.0,989.4 788.2,1015.9 759.4,1040.0 737.5,1062.0" fill="none" stroke="#F6F8F6" stroke-width="1.2" stroke-linejoin="round" stroke-linecap="round" opacity="0.85"/><polyline points="851.6,902.5 874.1,899.8 901.4,894.2" fill="none" stroke="#F6F8F6" stroke-width="1.2" stroke-linejoin="round" stroke-linecap="round" opacity="0.85"/><polyline points="1492.8,1344.1 1489.7,1368.2 1476.7,1396.5 1476.7,1411.2" fill="none" stroke="#F6F8F6" stroke-width="1.2" stroke-linejoin="round" stroke-linecap="round" opacity="0.85"/><polyline points="792.2,1368.8 815.3,1393.8 820.7,1416.6 827.4,1435.6" fill="none" stroke="#F6F8F6" stroke-width="1.2" stroke-linejoin="round" stroke-linecap="round" opacity="0.85"/><polyline points="1577.9,741.4 1605.4,752.2 1618.3,752.5 1630.5,746.8 1644.1,738.5" fill="none" stroke="#F6F8F6" stroke-width="1.2" stroke-linejoin="round" stroke-linecap="round" opacity="0.85"/><polyline points="1385.8,1028.1 1404.1,1041.0 1417.7,1053.7 1439.8,1055.4 1452.0,1054.3" fill="none" stroke="#F6F8F6" stroke-width="1.2" stroke-linejoin="round" stroke-linecap="round" opacity="0.85"/><polyline points="968.9,1249.9 958.0,1262.9 957.3,1292.4" fill="none" stroke="#F6F8F6" stroke-width="1.2" stroke-linejoin="round" stroke-linecap="round" opacity="0.85"/><polyline points="1210.7,838.5 1228.0,859.6 1239.2,876.6 1258.5,883.4" fill="none" stroke="#F6F8F6" stroke-width="1.2" stroke-linejoin="round" stroke-linecap="round" opacity="0.85"/><polyline points="1244.5,1109.7 1222.1,1116.8 1188.9,1103.3" fill="none" stroke="#F6F8F6" stroke-width="1.2" stroke-linejoin="round" stroke-linecap="round" opacity="0.85"/><polyline points="608.6,780.9 603.4,814.7 609.0,841.4 613.8,853.5 612.7,886.5 621.8,917.4" fill="none" stroke="#F6F8F6" stroke-width="1.2" stroke-linejoin="round" stroke-linecap="round" opacity="0.85"/><polyline points="1077.4,1448.6 1103.9,1456.4 1131.1,1451.8 1167.1,1444.2 1195.7,1420.9 1227.4,1420.4" fill="none" stroke="#F6F8F6" stroke-width="1.2" stroke-linejoin="round" stroke-linecap="round" opacity="0.85"/><polyline points="1349.2,1406.2 1361.1,1393.4 1361.9,1378.9 1351.2,1360.2 1336.7,1339.6" fill="none" stroke="#F6F8F6" stroke-width="1.2" stroke-linejoin="round" stroke-linecap="round" opacity="0.85"/><polyline points="885.5,1197.7 862.4,1209.1 851.8,1225.6 841.4,1239.9" fill="none" stroke="#F6F8F6" stroke-width="1.2" stroke-linejoin="round" stroke-linecap="round" opacity="0.85"/><polyline points="984.8,1326.2 971.4,1321.4 959.3,1303.6 932.9,1291.3 914.7,1281.8" fill="none" stroke="#F6F8F6" stroke-width="1.2" stroke-linejoin="round" stroke-linecap="round" opacity="0.85"/><polyline points="925.0,1323.6 929.0,1358.7 934.8,1369.4 931.4,1386.2 926.3,1406.9 927.9,1423.3" fill="none" stroke="#F6F8F6" stroke-width="1.2" stroke-linejoin="round" stroke-linecap="round" opacity="0.85"/><polyline points="1305.2,724.8 1312.0,708.5 1337.5,693.2" fill="none" stroke="#F6F8F6" stroke-width="1.2" stroke-linejoin="round" stroke-linecap="round" opacity="0.85"/><polyline points="1276.1,1017.4 1262.5,1019.0 1248.3,1028.1 1223.5,1031.5" fill="none" stroke="#F6F8F6" stroke-width="1.2" stroke-linejoin="round" stroke-linecap="round" opacity="0.85"/><polyline points="1302.9,1258.0 1283.1,1241.2 1266.5,1215.0 1249.4,1206.5 1232.5,1203.3" fill="none" stroke="#F6F8F6" stroke-width="1.2" stroke-linejoin="round" stroke-linecap="round" opacity="0.85"/><polyline points="1577.3,1273.0 1608.3,1268.8 1622.4,1263.0 1647.1,1265.7" fill="none" stroke="#F6F8F6" stroke-width="1.2" stroke-linejoin="round" stroke-linecap="round" opacity="0.85"/><polyline points="1148.9,724.4 1176.5,718.5 1206.3,715.9" fill="none" stroke="#F6F8F6" stroke-width="1.2" stroke-linejoin="round" stroke-linecap="round" opacity="0.85"/><polyline points="1110.8,709.9 1107.5,676.5 1106.7,664.1" fill="none" stroke="#F6F8F6" stroke-width="1.2" stroke-linejoin="round" stroke-linecap="round" opacity="0.85"/><polyline points="1493.1,967.2 1511.0,937.9 1515.8,902.8 1514.6,890.2 1510.3,877.2 1487.8,860.1" fill="none" stroke="#F6F8F6" stroke-width="1.2" stroke-linejoin="round" stroke-linecap="round" opacity="0.85"/><polyline points="715.1,720.5 715.5,751.6 725.1,766.0 723.5,793.7 706.2,813.6" fill="none" stroke="#F6F8F6" stroke-width="1.2" stroke-linejoin="round" stroke-linecap="round" opacity="0.85"/><polyline points="598.6,631.8 610.7,665.8 618.2,692.7 614.5,708.0 602.7,728.9" fill="none" stroke="#F6F8F6" stroke-width="1.2" stroke-linejoin="round" stroke-linecap="round" opacity="0.85"/><polyline points="1387.7,981.2 1406.5,1006.4 1409.7,1024.5 1407.6,1046.7" fill="none" stroke="#F6F8F6" stroke-width="1.2" stroke-linejoin="round" stroke-linecap="round" opacity="0.85"/><polyline points="819.5,771.2 839.4,764.1 865.7,754.1 898.5,754.3 919.9,761.0" fill="none" stroke="#F6F8F6" stroke-width="1.2" stroke-linejoin="round" stroke-linecap="round" opacity="0.85"/><polyline points="754.7,1016.7 771.0,989.3 778.1,974.1 793.6,966.0 822.3,970.3 848.6,964.9" fill="none" stroke="#F6F8F6" stroke-width="1.2" stroke-linejoin="round" stroke-linecap="round" opacity="0.85"/><polyline points="1503.7,812.0 1491.5,830.1 1480.1,843.6" fill="none" stroke="#F6F8F6" stroke-width="1.2" stroke-linejoin="round" stroke-linecap="round" opacity="0.85"/><polyline points="1035.2,581.7 1045.4,569.9 1064.3,551.2 1093.8,544.4 1116.6,525.7" fill="none" stroke="#F6F8F6" stroke-width="1.2" stroke-linejoin="round" stroke-linecap="round" opacity="0.85"/><polyline points="689.7,1434.3 663.7,1448.4 647.0,1446.0 626.2,1455.3 611.6,1461.6 587.5,1486.2" fill="none" stroke="#F6F8F6" stroke-width="1.2" stroke-linejoin="round" stroke-linecap="round" opacity="0.85"/><polyline points="985.3,711.0 1006.5,728.1 1034.5,735.1 1048.7,738.3" fill="none" stroke="#F6F8F6" stroke-width="1.2" stroke-linejoin="round" stroke-linecap="round" opacity="0.85"/><polyline points="1584.1,1346.8 1567.2,1352.0 1547.3,1350.0" fill="none" stroke="#F6F8F6" stroke-width="1.2" stroke-linejoin="round" stroke-linecap="round" opacity="0.85"/><polyline points="1327.9,780.9 1304.4,774.2 1277.2,783.5 1261.3,784.5 1230.2,784.2" fill="none" stroke="#F6F8F6" stroke-width="1.2" stroke-linejoin="round" stroke-linecap="round" opacity="0.85"/><polyline points="695.2,1318.2 700.9,1301.8 700.6,1268.2" fill="none" stroke="#F6F8F6" stroke-width="1.2" stroke-linejoin="round" stroke-linecap="round" opacity="0.85"/><polyline points="858.8,740.5 875.7,733.6 898.3,736.9 928.5,753.3 960.0,752.1 984.6,749.4" fill="none" stroke="#F6F8F6" stroke-width="1.2" stroke-linejoin="round" stroke-linecap="round" opacity="0.85"/><polyline points="616.3,778.4 597.3,790.8 575.1,790.3 561.6,793.5 538.2,783.9" fill="none" stroke="#F6F8F6" stroke-width="1.2" stroke-linejoin="round" stroke-linecap="round" opacity="0.85"/><polyline points="1038.5,964.6 1031.9,931.8 1043.9,900.7 1043.5,887.4 1028.0,854.0 1032.9,816.5" fill="none" stroke="#F6F8F6" stroke-width="1.2" stroke-linejoin="round" stroke-linecap="round" opacity="0.85"/><polyline points="1107.2,684.2 1110.4,672.3 1122.5,646.5 1141.7,631.8 1149.5,613.6 1169.4,590.0" fill="none" stroke="#F6F8F6" stroke-width="1.2" stroke-linejoin="round" stroke-linecap="round" opacity="0.85"/><polyline points="799.8,1145.5 777.5,1138.2 750.0,1136.3 734.9,1138.7 715.5,1137.1" fill="none" stroke="#F6F8F6" stroke-width="1.2" stroke-linejoin="round" stroke-linecap="round" opacity="0.85"/><polyline points="1392.4,849.0 1362.3,856.7 1338.5,884.1 1336.9,914.9" fill="none" stroke="#F6F8F6" stroke-width="1.2" stroke-linejoin="round" stroke-linecap="round" opacity="0.85"/><polyline points="965.8,738.1 950.8,739.7 926.4,743.6 912.1,747.0 891.6,739.3 867.1,740.8" fill="none" stroke="#F6F8F6" stroke-width="1.2" stroke-linejoin="round" stroke-linecap="round" opacity="0.85"/><polyline points="1312.9,913.3 1290.2,898.2 1277.1,884.7 1274.2,868.9 1265.2,842.6" fill="none" stroke="#F6F8F6" stroke-width="1.2" stroke-linejoin="round" stroke-linecap="round" opacity="0.85"/><polyline points="958.4,1110.9 954.2,1146.0 960.7,1171.8 965.3,1183.8" fill="none" stroke="#F6F8F6" stroke-width="1.2" stroke-linejoin="round" stroke-linecap="round" opacity="0.85"/><polyline points="1042.2,1385.7 1034.2,1396.8 1020.3,1401.9 995.5,1419.9 989.8,1440.9 995.9,1464.4" fill="none" stroke="#F6F8F6" stroke-width="1.2" stroke-linejoin="round" stroke-linecap="round" opacity="0.85"/><polyline points="609.0,713.0 602.0,738.4 596.4,751.1" fill="none" stroke="#F6F8F6" stroke-width="1.2" stroke-linejoin="round" stroke-linecap="round" opacity="0.85"/><polyline points="885.8,1432.6 855.9,1454.5 823.9,1473.9 798.2,1487.4" fill="none" stroke="#F6F8F6" stroke-width="1.2" stroke-linejoin="round" stroke-linecap="round" opacity="0.85"/><polyline points="901.7,631.4 931.6,634.2 961.6,640.7 986.4,638.3 1006.5,626.4 1024.7,606.2" fill="none" stroke="#F6F8F6" stroke-width="1.2" stroke-linejoin="round" stroke-linecap="round" opacity="0.85"/><polyline points="895.4,821.8 871.3,813.7 849.8,811.4" fill="none" stroke="#F6F8F6" stroke-width="1.2" stroke-linejoin="round" stroke-linecap="round" opacity="0.85"/><polyline points="913.1,1312.6 911.2,1335.3 899.9,1350.7 865.9,1359.9 832.6,1345.0" fill="none" stroke="#F6F8F6" stroke-width="1.2" stroke-linejoin="round" stroke-linecap="round" opacity="0.85"/><polyline points="853.0,1296.6 827.3,1291.6 796.0,1302.3 786.0,1318.1" fill="none" stroke="#F6F8F6" stroke-width="1.2" stroke-linejoin="round" stroke-linecap="round" opacity="0.85"/><polyline points="1304.3,897.1 1296.1,882.8 1290.0,863.9 1291.9,847.2" fill="none" stroke="#F6F8F6" stroke-width="1.2" stroke-linejoin="round" stroke-linecap="round" opacity="0.85"/><polyline points="1242.1,1045.2 1220.1,1042.2 1204.3,1035.6 1182.8,1020.0" fill="none" stroke="#F6F8F6" stroke-width="1.2" stroke-linejoin="round" stroke-linecap="round" opacity="0.85"/><polyline points="1579.9,831.5 1571.0,817.1 1573.8,780.1 1590.7,746.3 1604.3,715.4 1606.0,684.1" fill="none" stroke="#F6F8F6" stroke-width="1.2" stroke-linejoin="round" stroke-linecap="round" opacity="0.85"/><polyline points="1315.8,1405.9 1336.9,1394.5 1357.4,1376.0 1392.5,1374.1 1415.5,1361.6" fill="none" stroke="#F6F8F6" stroke-width="1.2" stroke-linejoin="round" stroke-linecap="round" opacity="0.85"/><polyline points="771.7,658.0 797.9,635.5 810.2,625.7 841.1,604.5" fill="none" stroke="#F6F8F6" stroke-width="1.2" stroke-linejoin="round" stroke-linecap="round" opacity="0.85"/><polyline points="1414.2,1433.9 1416.1,1456.1 1432.3,1472.9" fill="none" stroke="#F6F8F6" stroke-width="1.2" stroke-linejoin="round" stroke-linecap="round" opacity="0.85"/><polyline points="977.1,591.1 990.0,584.6 1012.2,588.0 1039.0,582.4 1061.1,576.4 1075.5,576.0" fill="none" stroke="#F6F8F6" stroke-width="1.2" stroke-linejoin="round" stroke-linecap="round" opacity="0.85"/><polyline points="1046.3,767.4 1055.7,779.4 1057.9,791.8" fill="none" stroke="#F6F8F6" stroke-width="1.2" stroke-linejoin="round" stroke-linecap="round" opacity="0.85"/><polyline points="1311.8,1292.4 1313.4,1276.5 1316.2,1257.8 1316.4,1240.8" fill="none" stroke="#F6F8F6" stroke-width="1.2" stroke-linejoin="round" stroke-linecap="round" opacity="0.85"/><polyline points="1309.1,1084.3 1320.5,1050.2 1338.9,1030.8 1356.7,999.4 1361.6,985.6" fill="none" stroke="#F6F8F6" stroke-width="1.2" stroke-linejoin="round" stroke-linecap="round" opacity="0.85"/><polyline points="930.0,1201.6 965.6,1194.2 988.7,1198.6 1020.2,1202.7 1035.0,1200.9" fill="none" stroke="#F6F8F6" stroke-width="1.2" stroke-linejoin="round" stroke-linecap="round" opacity="0.85"/><polyline points="1219.5,1291.9 1226.5,1307.8 1229.6,1324.4 1242.1,1352.7" fill="none" stroke="#F6F8F6" stroke-width="1.2" stroke-linejoin="round" stroke-linecap="round" opacity="0.85"/><polyline points="1080.3,620.9 1081.7,607.0 1082.0,594.6" fill="none" stroke="#F6F8F6" stroke-width="1.2" stroke-linejoin="round" stroke-linecap="round" opacity="0.85"/><polyline points="1079.0,942.6 1091.3,933.0 1097.6,911.2 1099.1,882.9 1098.2,869.4 1103.8,858.5" fill="none" stroke="#F6F8F6" stroke-width="1.2" stroke-linejoin="round" stroke-linecap="round" opacity="0.85"/><polyline points="630.7,1273.3 621.0,1280.9 616.5,1293.6 608.8,1326.4" fill="none" stroke="#F6F8F6" stroke-width="1.2" stroke-linejoin="round" stroke-linecap="round" opacity="0.85"/><polyline points="1298.4,1430.2 1305.9,1420.4 1314.9,1403.9 1323.3,1393.1 1337.7,1376.8 1352.5,1359.8" fill="none" stroke="#F6F8F6" stroke-width="1.2" stroke-linejoin="round" stroke-linecap="round" opacity="0.85"/><polyline points="696.3,1223.7 690.2,1196.8 701.3,1160.8" fill="none" stroke="#F6F8F6" stroke-width="1.2" stroke-linejoin="round" stroke-linecap="round" opacity="0.85"/><polyline points="1359.8,620.3 1370.3,614.2 1400.1,595.3 1417.5,578.5 1424.3,551.0" fill="none" stroke="#F6F8F6" stroke-width="1.2" stroke-linejoin="round" stroke-linecap="round" opacity="0.85"/><polyline points="1203.0,626.2 1181.1,641.6 1154.4,642.5 1144.3,634.8" fill="none" stroke="#F6F8F6" stroke-width="1.2" stroke-linejoin="round" stroke-linecap="round" opacity="0.85"/><polyline points="1058.0,1066.0 1058.7,1041.6 1064.2,1016.3 1081.8,984.2" fill="none" stroke="#F6F8F6" stroke-width="1.2" stroke-linejoin="round" stroke-linecap="round" opacity="0.85"/><polyline points="607.1,861.9 623.9,854.7 640.0,857.4" fill="none" stroke="#F6F8F6" stroke-width="1.2" stroke-linejoin="round" stroke-linecap="round" opacity="0.85"/><polyline points="858.4,1224.8 868.6,1212.9 898.8,1198.9 911.6,1179.2 944.7,1163.2" fill="none" stroke="#F6F8F6" stroke-width="1.2" stroke-linejoin="round" stroke-linecap="round" opacity="0.85"/><polyline points="748.2,974.5 759.9,970.0 779.0,954.2 795.2,952.9 815.8,961.6" fill="none" stroke="#F6F8F6" stroke-width="1.2" stroke-linejoin="round" stroke-linecap="round" opacity="0.85"/><polyline points="1146.8,1396.6 1168.3,1392.4 1192.3,1402.7 1226.1,1394.5 1249.3,1400.6" fill="none" stroke="#F6F8F6" stroke-width="1.2" stroke-linejoin="round" stroke-linecap="round" opacity="0.85"/><polyline points="1352.2,1008.7 1357.6,972.7 1367.5,957.7" fill="none" stroke="#F6F8F6" stroke-width="1.2" stroke-linejoin="round" stroke-linecap="round" opacity="0.85"/><polyline points="594.0,1343.3 608.4,1334.7 629.2,1319.8" fill="none" stroke="#F6F8F6" stroke-width="1.2" stroke-linejoin="round" stroke-linecap="round" opacity="0.85"/><polyline points="1408.9,1441.9 1427.0,1450.7 1449.7,1470.0 1459.5,1494.9" fill="none" stroke="#F6F8F6" stroke-width="1.2" stroke-linejoin="round" stroke-linecap="round" opacity="0.85"/><polyline points="871.7,801.4 852.0,792.4 822.0,794.2 796.1,817.3" fill="none" stroke="#F6F8F6" stroke-width="1.2" stroke-linejoin="round" stroke-linecap="round" opacity="0.85"/><polyline points="796.9,849.5 813.7,839.9 837.5,836.4 853.0,841.2 873.4,835.9" fill="none" stroke="#F6F8F6" stroke-width="1.2" stroke-linejoin="round" stroke-linecap="round" opacity="0.85"/><polyline points="1482.5,722.4 1511.7,719.2 1525.9,707.4" fill="none" stroke="#F6F8F6" stroke-width="1.2" stroke-linejoin="round" stroke-linecap="round" opacity="0.85"/><polyline points="1263.9,1348.7 1253.9,1368.7 1252.7,1396.0 1253.6,1417.0 1256.0,1438.2 1243.0,1470.5" fill="none" stroke="#F6F8F6" stroke-width="1.2" stroke-linejoin="round" stroke-linecap="round" opacity="0.85"/><polyline points="660.7,948.4 663.5,968.6 678.2,999.8" fill="none" stroke="#F6F8F6" stroke-width="1.2" stroke-linejoin="round" stroke-linecap="round" opacity="0.85"/><polyline points="1238.5,1003.0 1215.1,1006.3 1180.7,1007.8" fill="none" stroke="#F6F8F6" stroke-width="1.2" stroke-linejoin="round" stroke-linecap="round" opacity="0.85"/><polyline points="852.2,807.6 865.6,818.0 900.5,817.1 934.0,832.9" fill="none" stroke="#F6F8F6" stroke-width="1.2" stroke-linejoin="round" stroke-linecap="round" opacity="0.85"/><polyline points="939.7,1144.4 922.8,1120.6 903.1,1104.6" fill="none" stroke="#F6F8F6" stroke-width="1.2" stroke-linejoin="round" stroke-linecap="round" opacity="0.85"/><polyline points="883.9,972.5 855.8,973.7 839.5,982.6 828.6,988.6 796.5,995.3 774.1,1008.3" fill="none" stroke="#F6F8F6" stroke-width="1.2" stroke-linejoin="round" stroke-linecap="round" opacity="0.85"/><polyline points="1095.4,1351.1 1117.3,1340.8 1131.8,1331.7 1162.5,1327.3 1190.7,1302.7 1200.4,1283.2" fill="none" stroke="#F6F8F6" stroke-width="1.2" stroke-linejoin="round" stroke-linecap="round" opacity="0.85"/><polyline points="1012.2,1087.3 1031.1,1077.0 1037.9,1065.0 1052.0,1041.7 1069.0,1008.3 1076.2,988.4" fill="none" stroke="#F6F8F6" stroke-width="1.2" stroke-linejoin="round" stroke-linecap="round" opacity="0.85"/><polyline points="1015.7,731.1 1033.6,718.3 1064.5,720.7 1085.6,707.3 1110.4,691.9 1123.8,690.3" fill="none" stroke="#F6F8F6" stroke-width="1.2" stroke-linejoin="round" stroke-linecap="round" opacity="0.85"/><polyline points="894.3,649.2 890.2,672.4 884.4,697.5 889.9,710.1 895.1,739.6 907.3,773.3" fill="none" stroke="#F6F8F6" stroke-width="1.2" stroke-linejoin="round" stroke-linecap="round" opacity="0.85"/><polyline points="1422.0,845.7 1436.3,856.3 1461.0,856.3 1485.7,837.3 1502.8,828.4" fill="none" stroke="#F6F8F6" stroke-width="1.2" stroke-linejoin="round" stroke-linecap="round" opacity="0.85"/><polyline points="1043.6,785.0 1068.1,805.3 1077.1,839.5 1075.4,854.9" fill="none" stroke="#F6F8F6" stroke-width="1.2" stroke-linejoin="round" stroke-linecap="round" opacity="0.85"/><polyline points="1315.6,1294.3 1302.7,1259.3 1299.8,1233.7" fill="none" stroke="#F6F8F6" stroke-width="1.2" stroke-linejoin="round" stroke-linecap="round" opacity="0.85"/><polyline points="1238.8,668.1 1225.7,683.7 1225.4,713.6 1227.8,742.0" fill="none" stroke="#F6F8F6" stroke-width="1.2" stroke-linejoin="round" stroke-linecap="round" opacity="0.85"/><polyline points="968.9,1019.2 938.5,1013.9 906.8,1015.0 873.7,1012.8" fill="none" stroke="#F6F8F6" stroke-width="1.2" stroke-linejoin="round" stroke-linecap="round" opacity="0.85"/><polyline points="1589.5,913.2 1621.0,913.8 1650.7,918.2" fill="none" stroke="#F6F8F6" stroke-width="1.2" stroke-linejoin="round" stroke-linecap="round" opacity="0.85"/><polyline points="1230.3,1149.8 1205.9,1139.9 1187.7,1123.2 1155.8,1120.2 1132.6,1127.4 1122.5,1143.2" fill="none" stroke="#F6F8F6" stroke-width="1.2" stroke-linejoin="round" stroke-linecap="round" opacity="0.85"/><polyline points="1265.9,1252.5 1257.8,1225.4 1261.6,1206.4 1264.6,1189.9 1290.4,1162.4 1297.6,1152.1" fill="none" stroke="#F6F8F6" stroke-width="1.2" stroke-linejoin="round" stroke-linecap="round" opacity="0.85"/><polyline points="893.1,1385.6 915.6,1406.8 946.4,1413.7 960.4,1409.8" fill="none" stroke="#F6F8F6" stroke-width="1.2" stroke-linejoin="round" stroke-linecap="round" opacity="0.85"/><polyline points="847.5,1033.2 834.4,1047.5 807.8,1061.4 790.6,1068.6 754.7,1060.1 736.2,1069.0" fill="none" stroke="#F6F8F6" stroke-width="1.2" stroke-linejoin="round" stroke-linecap="round" opacity="0.85"/><polyline points="917.6,754.6 902.4,784.8 900.0,796.9 886.8,810.7 881.6,824.8" fill="none" stroke="#F6F8F6" stroke-width="1.2" stroke-linejoin="round" stroke-linecap="round" opacity="0.85"/><polyline points="964.3,685.2 995.0,704.1 1013.3,715.3 1041.4,733.4 1064.2,731.8" fill="none" stroke="#F6F8F6" stroke-width="1.2" stroke-linejoin="round" stroke-linecap="round" opacity="0.85"/><polyline points="1222.9,810.7 1232.5,822.9 1236.0,850.5 1259.0,878.3 1260.9,891.0 1258.5,909.0" fill="none" stroke="#F6F8F6" stroke-width="1.2" stroke-linejoin="round" stroke-linecap="round" opacity="0.85"/><polyline points="1134.5,1314.1 1128.6,1326.2 1117.2,1340.2 1101.3,1358.6 1099.7,1379.5 1110.0,1398.0" fill="none" stroke="#F6F8F6" stroke-width="1.2" stroke-linejoin="round" stroke-linecap="round" opacity="0.85"/><polyline points="1083.7,1031.5 1096.1,1021.6 1109.1,1006.6" fill="none" stroke="#F6F8F6" stroke-width="1.2" stroke-linejoin="round" stroke-linecap="round" opacity="0.85"/><polyline points="1182.1,874.2 1203.6,880.2 1216.5,896.7 1216.7,931.9 1227.6,955.7 1224.8,970.5" fill="none" stroke="#F6F8F6" stroke-width="1.2" stroke-linejoin="round" stroke-linecap="round" opacity="0.85"/><polyline points="1451.1,1261.3 1447.5,1245.8 1431.1,1225.0" fill="none" stroke="#F6F8F6" stroke-width="1.2" stroke-linejoin="round" stroke-linecap="round" opacity="0.85"/><polyline points="1242.4,898.3 1251.1,908.1 1253.8,929.9" fill="none" stroke="#F6F8F6" stroke-width="1.2" stroke-linejoin="round" stroke-linecap="round" opacity="0.85"/><polyline points="1405.0,995.0 1429.9,972.4 1436.3,957.0 1435.9,936.1 1437.5,919.3" fill="none" stroke="#F6F8F6" stroke-width="1.2" stroke-linejoin="round" stroke-linecap="round" opacity="0.85"/><polyline points="1328.1,635.9 1323.8,624.3 1329.2,601.5" fill="none" stroke="#F6F8F6" stroke-width="1.2" stroke-linejoin="round" stroke-linecap="round" opacity="0.85"/><polyline points="1194.6,1296.9 1193.7,1323.6 1192.3,1342.6" fill="none" stroke="#F6F8F6" stroke-width="1.2" stroke-linejoin="round" stroke-linecap="round" opacity="0.85"/><polyline points="1059.4,762.4 1066.8,727.8 1078.4,703.2 1076.7,680.6" fill="none" stroke="#F6F8F6" stroke-width="1.2" stroke-linejoin="round" stroke-linecap="round" opacity="0.85"/><polyline points="1549.9,582.9 1516.9,600.9 1493.0,614.0" fill="none" stroke="#F6F8F6" stroke-width="1.2" stroke-linejoin="round" stroke-linecap="round" opacity="0.85"/><polyline points="1450.5,1348.1 1430.1,1362.2 1418.7,1384.8 1406.7,1394.5" fill="none" stroke="#F6F8F6" stroke-width="1.2" stroke-linejoin="round" stroke-linecap="round" opacity="0.85"/><polyline points="1478.8,949.6 1494.1,982.3 1502.6,994.0 1506.1,1019.7" fill="none" stroke="#F6F8F6" stroke-width="1.2" stroke-linejoin="round" stroke-linecap="round" opacity="0.85"/><polyline points="778.1,1035.6 794.5,1047.4 817.3,1049.6" fill="none" stroke="#F6F8F6" stroke-width="1.2" stroke-linejoin="round" stroke-linecap="round" opacity="0.85"/><polyline points="628.0,1390.3 608.9,1385.2 594.4,1375.6 572.7,1358.7" fill="none" stroke="#F6F8F6" stroke-width="1.2" stroke-linejoin="round" stroke-linecap="round" opacity="0.85"/><polyline points="1377.1,727.6 1345.2,747.3 1337.1,762.8 1339.2,793.5" fill="none" stroke="#F6F8F6" stroke-width="1.2" stroke-linejoin="round" stroke-linecap="round" opacity="0.85"/><polyline points="1346.6,1150.3 1366.8,1129.7 1389.7,1114.8 1416.1,1097.3" fill="none" stroke="#F6F8F6" stroke-width="1.2" stroke-linejoin="round" stroke-linecap="round" opacity="0.85"/><polyline points="1171.9,693.5 1163.2,709.5 1150.4,731.5 1149.8,750.3 1156.7,777.3 1163.4,796.6" fill="none" stroke="#F6F8F6" stroke-width="1.2" stroke-linejoin="round" stroke-linecap="round" opacity="0.85"/><polyline points="708.3,1016.3 719.4,1030.7 753.2,1038.8" fill="none" stroke="#F6F8F6" stroke-width="1.2" stroke-linejoin="round" stroke-linecap="round" opacity="0.85"/><polyline points="1542.3,831.6 1508.9,819.2 1479.5,819.7 1446.2,822.6 1414.0,807.6" fill="none" stroke="#F6F8F6" stroke-width="1.2" stroke-linejoin="round" stroke-linecap="round" opacity="0.85"/><polyline points="1042.2,682.7 1064.4,698.9 1072.3,728.4 1077.2,743.4 1102.2,761.9" fill="none" stroke="#F6F8F6" stroke-width="1.2" stroke-linejoin="round" stroke-linecap="round" opacity="0.85"/><polyline points="662.4,1291.9 657.8,1255.8 661.5,1240.9 667.5,1230.3 677.1,1207.1 701.4,1177.9" fill="none" stroke="#F6F8F6" stroke-width="1.2" stroke-linejoin="round" stroke-linecap="round" opacity="0.85"/><polyline points="1187.0,966.8 1206.6,986.6 1215.6,1016.2 1225.5,1052.0 1224.9,1065.7" fill="none" stroke="#F6F8F6" stroke-width="1.2" stroke-linejoin="round" stroke-linecap="round" opacity="0.85"/><polyline points="1474.7,596.7 1470.6,617.2 1477.3,630.8 1483.3,646.2" fill="none" stroke="#F6F8F6" stroke-width="1.2" stroke-linejoin="round" stroke-linecap="round" opacity="0.85"/><polyline points="902.5,1124.2 917.9,1101.8 927.1,1070.8 923.6,1052.3 913.8,1018.0" fill="none" stroke="#F6F8F6" stroke-width="1.2" stroke-linejoin="round" stroke-linecap="round" opacity="0.85"/><polyline points="760.2,749.3 767.1,764.3 766.7,784.2 748.4,816.9" fill="none" stroke="#F6F8F6" stroke-width="1.2" stroke-linejoin="round" stroke-linecap="round" opacity="0.85"/><polyline points="749.5,901.3 784.9,896.0 801.0,889.5 833.1,899.1 867.9,891.0" fill="none" stroke="#F6F8F6" stroke-width="1.2" stroke-linejoin="round" stroke-linecap="round" opacity="0.85"/><polyline points="1602.5,1300.6 1576.4,1312.6 1545.4,1304.6 1515.9,1306.9" fill="none" stroke="#F6F8F6" stroke-width="1.2" stroke-linejoin="round" stroke-linecap="round" opacity="0.85"/><polyline points="1348.8,744.1 1375.5,724.1 1392.7,712.9" fill="none" stroke="#F6F8F6" stroke-width="1.2" stroke-linejoin="round" stroke-linecap="round" opacity="0.85"/><polyline points="844.3,836.2 831.6,863.5 837.4,894.4 840.1,923.3 840.0,935.9" fill="none" stroke="#F6F8F6" stroke-width="1.2" stroke-linejoin="round" stroke-linecap="round" opacity="0.85"/><polyline points="1165.6,1341.9 1190.2,1343.4 1222.9,1347.4 1256.9,1349.4 1293.9,1341.4 1315.9,1344.9" fill="none" stroke="#F6F8F6" stroke-width="1.2" stroke-linejoin="round" stroke-linecap="round" opacity="0.85"/><polyline points="1381.3,1268.5 1352.7,1245.4 1341.9,1219.9" fill="none" stroke="#F6F8F6" stroke-width="1.2" stroke-linejoin="round" stroke-linecap="round" opacity="0.85"/><polyline points="1311.5,865.1 1318.6,896.5 1334.3,911.8" fill="none" stroke="#F6F8F6" stroke-width="1.2" stroke-linejoin="round" stroke-linecap="round" opacity="0.85"/><polyline points="1173.7,1155.8 1170.3,1171.7 1159.2,1198.6 1152.6,1213.9 1140.7,1222.8" fill="none" stroke="#F6F8F6" stroke-width="1.2" stroke-linejoin="round" stroke-linecap="round" opacity="0.85"/><polyline points="769.0,792.8 735.5,807.8 712.2,821.7 700.6,840.0 701.0,868.9 695.4,880.2" fill="none" stroke="#F6F8F6" stroke-width="1.2" stroke-linejoin="round" stroke-linecap="round" opacity="0.85"/><polyline points="653.7,741.6 648.1,756.7 625.5,774.7" fill="none" stroke="#F6F8F6" stroke-width="1.2" stroke-linejoin="round" stroke-linecap="round" opacity="0.85"/><polyline points="1141.5,839.8 1159.6,853.1 1181.5,855.6 1207.4,860.4 1240.1,862.0 1257.9,851.6" fill="none" stroke="#F6F8F6" stroke-width="1.2" stroke-linejoin="round" stroke-linecap="round" opacity="0.85"/><polyline points="1536.6,1340.6 1562.2,1329.7 1575.1,1313.7" fill="none" stroke="#F6F8F6" stroke-width="1.2" stroke-linejoin="round" stroke-linecap="round" opacity="0.85"/><polyline points="1466.6,596.6 1486.8,622.3 1495.5,656.1 1503.2,669.9" fill="none" stroke="#F6F8F6" stroke-width="1.2" stroke-linejoin="round" stroke-linecap="round" opacity="0.85"/><polyline points="1363.0,1190.0 1333.1,1210.2 1310.2,1227.9 1304.7,1247.0 1296.8,1259.3" fill="none" stroke="#F6F8F6" stroke-width="1.2" stroke-linejoin="round" stroke-linecap="round" opacity="0.85"/><polyline points="911.0,628.9 911.3,607.7 913.7,580.4 914.0,564.8 895.0,536.0 883.2,508.4" fill="none" stroke="#F6F8F6" stroke-width="1.2" stroke-linejoin="round" stroke-linecap="round" opacity="0.85"/><polyline points="1257.1,958.9 1281.7,967.3 1307.7,972.6 1341.2,959.6 1350.5,947.1" fill="none" stroke="#F6F8F6" stroke-width="1.2" stroke-linejoin="round" stroke-linecap="round" opacity="0.85"/><polyline points="1272.9,1143.9 1283.8,1136.3 1288.7,1118.8" fill="none" stroke="#F6F8F6" stroke-width="1.2" stroke-linejoin="round" stroke-linecap="round" opacity="0.85"/><polyline points="1380.5,714.3 1355.8,721.6 1325.5,713.0 1301.3,709.8" fill="none" stroke="#F6F8F6" stroke-width="1.2" stroke-linejoin="round" stroke-linecap="round" opacity="0.85"/><polyline points="873.9,1425.3 871.8,1394.4 868.9,1361.7 859.3,1328.2 858.8,1304.4" fill="none" stroke="#F6F8F6" stroke-width="1.2" stroke-linejoin="round" stroke-linecap="round" opacity="0.85"/><polyline points="1161.9,1288.3 1128.9,1271.1 1109.9,1252.8" fill="none" stroke="#F6F8F6" stroke-width="1.2" stroke-linejoin="round" stroke-linecap="round" opacity="0.85"/><polyline points="1149.3,587.9 1113.3,599.6 1100.2,601.1 1089.0,609.4 1071.5,619.8 1056.3,637.9" fill="none" stroke="#F6F8F6" stroke-width="1.2" stroke-linejoin="round" stroke-linecap="round" opacity="0.85"/><polyline points="672.0,1379.8 688.0,1359.6 704.2,1341.1 739.4,1327.7 756.3,1311.8 772.4,1292.4" fill="none" stroke="#F6F8F6" stroke-width="1.2" stroke-linejoin="round" stroke-linecap="round" opacity="0.85"/><polyline points="1313.1,1057.2 1330.7,1059.6 1342.9,1056.4 1354.2,1049.2" fill="none" stroke="#F6F8F6" stroke-width="1.2" stroke-linejoin="round" stroke-linecap="round" opacity="0.85"/><polyline points="1127.0,844.5 1120.3,825.9 1119.9,796.0 1126.7,772.7 1131.2,753.8 1121.7,731.7" fill="none" stroke="#F6F8F6" stroke-width="1.2" stroke-linejoin="round" stroke-linecap="round" opacity="0.85"/><polyline points="1216.0,743.8 1246.8,731.3 1262.0,724.8" fill="none" stroke="#F6F8F6" stroke-width="1.2" stroke-linejoin="round" stroke-linecap="round" opacity="0.85"/><polyline points="867.1,1229.1 892.7,1220.1 914.1,1225.5" fill="none" stroke="#F6F8F6" stroke-width="1.2" stroke-linejoin="round" stroke-linecap="round" opacity="0.85"/><polyline points="1352.8,1412.3 1373.1,1409.1 1388.2,1402.2 1414.9,1408.2 1425.5,1416.8" fill="none" stroke="#F6F8F6" stroke-width="1.2" stroke-linejoin="round" stroke-linecap="round" opacity="0.85"/><polyline points="1141.9,1225.1 1154.2,1212.5 1165.4,1197.5" fill="none" stroke="#F6F8F6" stroke-width="1.2" stroke-linejoin="round" stroke-linecap="round" opacity="0.85"/><polyline points="927.9,1050.8 949.0,1070.2 975.1,1074.1 995.0,1083.5 1025.4,1102.1" fill="none" stroke="#F6F8F6" stroke-width="1.2" stroke-linejoin="round" stroke-linecap="round" opacity="0.85"/><polyline points="1358.7,884.7 1379.9,880.7 1398.0,879.3 1426.3,885.5 1460.0,873.2" fill="none" stroke="#F6F8F6" stroke-width="1.2" stroke-linejoin="round" stroke-linecap="round" opacity="0.85"/><polyline points="665.3,1193.0 635.5,1202.5 601.6,1199.6 583.4,1199.3" fill="none" stroke="#F6F8F6" stroke-width="1.2" stroke-linejoin="round" stroke-linecap="round" opacity="0.85"/><polyline points="773.6,1209.6 800.4,1194.0 832.9,1184.4 857.2,1173.6 874.3,1174.9" fill="none" stroke="#F6F8F6" stroke-width="1.2" stroke-linejoin="round" stroke-linecap="round" opacity="0.85"/><polyline points="1461.4,601.7 1426.6,611.0 1410.8,616.7" fill="none" stroke="#F6F8F6" stroke-width="1.2" stroke-linejoin="round" stroke-linecap="round" opacity="0.85"/><polyline points="1009.1,1100.4 976.3,1106.8 961.1,1108.7" fill="none" stroke="#F6F8F6" stroke-width="1.2" stroke-linejoin="round" stroke-linecap="round" opacity="0.85"/><polyline points="1040.8,1101.3 1035.4,1064.1 1010.9,1040.6 999.0,1033.9" fill="none" stroke="#F6F8F6" stroke-width="1.2" stroke-linejoin="round" stroke-linecap="round" opacity="0.85"/><polyline points="859.4,792.7 872.9,796.2 885.6,803.7 908.8,807.0 922.7,822.0 943.3,835.1" fill="none" stroke="#F6F8F6" stroke-width="1.2" stroke-linejoin="round" stroke-linecap="round" opacity="0.85"/><polyline points="757.1,934.0 746.2,913.0 733.8,886.1 711.5,871.6 699.8,864.1" fill="none" stroke="#F6F8F6" stroke-width="1.2" stroke-linejoin="round" stroke-linecap="round" opacity="0.85"/><polyline points="836.1,1280.4 858.9,1258.3 875.7,1240.8" fill="none" stroke="#F6F8F6" stroke-width="1.2" stroke-linejoin="round" stroke-linecap="round" opacity="0.85"/><polyline points="1286.3,1116.3 1266.9,1113.9 1242.0,1125.9 1226.0,1124.1" fill="none" stroke="#F6F8F6" stroke-width="1.2" stroke-linejoin="round" stroke-linecap="round" opacity="0.85"/><polyline points="969.6,1104.6 971.2,1074.6 986.3,1058.5 1009.2,1053.7" fill="none" stroke="#F6F8F6" stroke-width="1.2" stroke-linejoin="round" stroke-linecap="round" opacity="0.85"/><polyline points="1252.4,1342.6 1248.8,1362.9 1255.0,1376.6 1273.4,1392.0 1281.0,1426.1" fill="none" stroke="#F6F8F6" stroke-width="1.2" stroke-linejoin="round" stroke-linecap="round" opacity="0.85"/><polyline points="1066.8,934.8 1029.3,932.4 1017.4,922.8 1006.7,904.8 994.5,892.4 985.3,878.1" fill="none" stroke="#F6F8F6" stroke-width="1.2" stroke-linejoin="round" stroke-linecap="round" opacity="0.85"/><polyline points="1535.2,757.6 1566.6,758.5 1578.4,765.1 1587.5,773.4" fill="none" stroke="#F6F8F6" stroke-width="1.2" stroke-linejoin="round" stroke-linecap="round" opacity="0.85"/><polyline points="1308.1,1416.9 1331.1,1441.5 1339.6,1461.0 1338.7,1473.4 1331.7,1500.7 1326.6,1527.5" fill="none" stroke="#F6F8F6" stroke-width="1.2" stroke-linejoin="round" stroke-linecap="round" opacity="0.85"/><polyline points="752.4,1313.7 743.6,1296.9 746.2,1271.2 734.9,1253.7 725.2,1243.9 721.3,1208.7" fill="none" stroke="#F6F8F6" stroke-width="1.2" stroke-linejoin="round" stroke-linecap="round" opacity="0.85"/><polyline points="1416.7,583.7 1392.4,586.5 1378.9,581.5" fill="none" stroke="#F6F8F6" stroke-width="1.2" stroke-linejoin="round" stroke-linecap="round" opacity="0.85"/><polyline points="1486.5,816.6 1474.7,829.9 1451.4,845.1 1427.2,853.0" fill="none" stroke="#F6F8F6" stroke-width="1.2" stroke-linejoin="round" stroke-linecap="round" opacity="0.85"/><polyline points="1294.7,1430.9 1280.4,1402.1 1285.4,1365.4 1271.7,1337.0" fill="none" stroke="#F6F8F6" stroke-width="1.2" stroke-linejoin="round" stroke-linecap="round" opacity="0.85"/><polyline points="821.8,865.7 811.5,893.1 799.7,924.4" fill="none" stroke="#F6F8F6" stroke-width="1.2" stroke-linejoin="round" stroke-linecap="round" opacity="0.85"/><polyline points="794.4,847.6 816.7,843.4 846.6,848.1 862.0,861.1" fill="none" stroke="#F6F8F6" stroke-width="1.2" stroke-linejoin="round" stroke-linecap="round" opacity="0.85"/><polyline points="1450.6,1228.7 1439.9,1209.5 1426.9,1202.5 1405.9,1189.6 1399.0,1177.2 1395.9,1164.7" fill="none" stroke="#F6F8F6" stroke-width="1.2" stroke-linejoin="round" stroke-linecap="round" opacity="0.85"/><polyline points="630.2,690.1 663.0,667.8 687.2,639.7 715.0,615.4" fill="none" stroke="#EDBE5C" stroke-width="1.5" stroke-linejoin="round" stroke-linecap="round" opacity="0.85"/><polyline points="1055.3,1458.9 1029.6,1483.5 998.2,1511.2 955.2,1525.1 910.4,1533.1 872.8,1529.0" fill="none" stroke="#EDBE5C" stroke-width="1.5" stroke-linejoin="round" stroke-linecap="round" opacity="0.85"/><polyline points="593.6,1442.8 584.1,1383.9 587.6,1336.6 600.1,1308.6" fill="none" stroke="#EDBE5C" stroke-width="1.5" stroke-linejoin="round" stroke-linecap="round" opacity="0.85"/><polyline points="755.1,1057.1 720.2,1097.7 677.3,1132.1 660.0,1161.6" fill="none" stroke="#EDBE5C" stroke-width="1.5" stroke-linejoin="round" stroke-linecap="round" opacity="0.85"/><polyline points="923.4,709.3 882.6,698.0 850.3,705.4 809.9,698.3 756.6,704.7" fill="none" stroke="#EDBE5C" stroke-width="1.5" stroke-linejoin="round" stroke-linecap="round" opacity="0.85"/><polyline points="1494.3,687.5 1466.5,702.3 1438.0,716.0" fill="none" stroke="#EDBE5C" stroke-width="1.5" stroke-linejoin="round" stroke-linecap="round" opacity="0.85"/><polyline points="1202.0,1291.8 1157.2,1296.9 1122.7,1288.8" fill="none" stroke="#EDBE5C" stroke-width="1.5" stroke-linejoin="round" stroke-linecap="round" opacity="0.85"/><polyline points="1489.2,681.7 1445.3,715.0 1394.1,732.6" fill="none" stroke="#EDBE5C" stroke-width="1.5" stroke-linejoin="round" stroke-linecap="round" opacity="0.85"/><polyline points="978.7,1403.7 970.9,1436.0 967.5,1464.3" fill="none" stroke="#EDBE5C" stroke-width="1.5" stroke-linejoin="round" stroke-linecap="round" opacity="0.85"/><polyline points="1398.4,742.2 1440.6,765.5 1492.3,773.1 1548.6,793.2 1603.6,812.4" fill="none" stroke="#EDBE5C" stroke-width="1.5" stroke-linejoin="round" stroke-linecap="round" opacity="0.85"/><polyline points="802.1,742.7 764.5,784.3 742.7,801.9 716.6,839.4 701.1,860.2 690.7,903.8" fill="none" stroke="#EDBE5C" stroke-width="1.5" stroke-linejoin="round" stroke-linecap="round" opacity="0.85"/><polyline points="1200.8,650.7 1222.5,617.4 1255.4,598.2 1298.2,585.1" fill="none" stroke="#EDBE5C" stroke-width="1.5" stroke-linejoin="round" stroke-linecap="round" opacity="0.85"/><polyline points="1159.5,1457.8 1155.7,1414.1 1161.8,1367.1 1194.5,1318.1" fill="none" stroke="#EDBE5C" stroke-width="1.5" stroke-linejoin="round" stroke-linecap="round" opacity="0.85"/><polyline points="1361.4,770.5 1334.6,740.6 1299.5,704.0 1250.7,684.5 1217.8,674.5 1159.2,669.0" fill="none" stroke="#EDBE5C" stroke-width="1.5" stroke-linejoin="round" stroke-linecap="round" opacity="0.85"/><polyline points="1034.9,1229.6 1033.4,1203.1 1031.0,1160.6 1034.0,1130.1 1048.8,1097.8 1060.1,1072.6" fill="none" stroke="#EDBE5C" stroke-width="1.5" stroke-linejoin="round" stroke-linecap="round" opacity="0.85"/><polyline points="1484.5,966.6 1527.3,958.5 1555.6,949.8 1587.3,918.5 1620.5,907.9 1653.0,891.9" fill="none" stroke="#EDBE5C" stroke-width="1.5" stroke-linejoin="round" stroke-linecap="round" opacity="0.85"/><polyline points="1343.7,1014.0 1340.0,955.3 1351.1,924.4" fill="none" stroke="#EDBE5C" stroke-width="1.5" stroke-linejoin="round" stroke-linecap="round" opacity="0.85"/><polyline points="927.5,695.0 888.3,671.3 864.7,643.1" fill="none" stroke="#EDBE5C" stroke-width="1.5" stroke-linejoin="round" stroke-linecap="round" opacity="0.85"/><polyline points="629.4,1422.7 600.2,1402.0 563.8,1380.6" fill="none" stroke="#EDBE5C" stroke-width="1.5" stroke-linejoin="round" stroke-linecap="round" opacity="0.85"/><polyline points="973.0,1024.2 991.9,1053.0 1025.1,1102.3 1051.9,1120.4" fill="none" stroke="#EDBE5C" stroke-width="1.5" stroke-linejoin="round" stroke-linecap="round" opacity="0.85"/><polyline points="1397.5,646.1 1369.3,653.2 1332.2,647.8 1295.0,629.4 1267.5,598.0" fill="none" stroke="#EDBE5C" stroke-width="1.5" stroke-linejoin="round" stroke-linecap="round" opacity="0.85"/><polyline points="853.6,712.6 806.5,697.6 764.1,697.2" fill="none" stroke="#EDBE5C" stroke-width="1.5" stroke-linejoin="round" stroke-linecap="round" opacity="0.85"/><polyline points="1201.8,777.6 1211.6,810.3 1205.0,860.2" fill="none" stroke="#EDBE5C" stroke-width="1.5" stroke-linejoin="round" stroke-linecap="round" opacity="0.85"/><polyline points="1107.6,1116.4 1126.6,1097.5 1154.8,1085.3 1178.2,1066.9 1214.2,1039.2" fill="none" stroke="#EDBE5C" stroke-width="1.5" stroke-linejoin="round" stroke-linecap="round" opacity="0.85"/><polyline points="1058.3,993.6 1099.9,1028.3 1124.2,1080.2 1122.9,1107.5 1125.5,1148.2" fill="none" stroke="#EDBE5C" stroke-width="1.5" stroke-linejoin="round" stroke-linecap="round" opacity="0.85"/><polyline points="852.4,1234.5 891.4,1190.1 914.9,1139.9 918.6,1104.1" fill="none" stroke="#EDBE5C" stroke-width="1.5" stroke-linejoin="round" stroke-linecap="round" opacity="0.85"/><polyline points="920.4,913.4 956.4,960.7 998.6,980.1 1049.8,981.4" fill="none" stroke="#EDBE5C" stroke-width="1.5" stroke-linejoin="round" stroke-linecap="round" opacity="0.85"/><polyline points="1021.2,1394.4 1032.6,1418.5 1053.4,1436.7" fill="none" stroke="#EDBE5C" stroke-width="1.5" stroke-linejoin="round" stroke-linecap="round" opacity="0.85"/></g><polygon points="1128,814 1143,813 1158,825 1170,846 1172,862 1167,878 1151,883 1146,902 1143,927 1135,940 1128,944 1128,927 1119,919 1122,907 1115,890 1092,897 1095,881 1114,876 1106,854 1099,839 1118,842 1121,827" fill="#93B3F1" /><polygon points="1158,823 1182,813 1187,821 1195,858 1192,887 1201,897 1207,917 1207,938 1202,950 1168,946 1170,930 1177,915 1185,890 1183,860 1175,835" fill="#93B3F1" /><polygon points="903,921 955,926 970,933 948,942 918,940" fill="#93B3F1" /><polygon points="1192,795 1215,792 1229,805 1222,825 1200,822" fill="#93B3F1" /><polyline points="692,579.6 705,600 715,640 716,680 707,710 697,742 672,770 658,783 650,810 640,840 627,862 610,900 600,935" fill="none" stroke="#E5A93B" stroke-width="4.2" stroke-linejoin="round" stroke-linecap="round" /><polyline points="692,579.6 705,600 715,640 716,680 707,710 697,742 672,770 658,783 650,810 640,840 627,862 610,900 600,935" fill="none" stroke="#F9D98E" stroke-width="2.4" stroke-linejoin="round" stroke-linecap="round" /><polyline points="625,1008 660,1030 720,1060 783,1070 830,1080 881,1093 920,1100 974,1093 1022,1062 1060,1040 1110,1036 1170,1030 1213,1029 1240,995 1265,965 1290,950" fill="none" stroke="#E5A93B" stroke-width="4.2" stroke-linejoin="round" stroke-linecap="round" /><polyline points="625,1008 660,1030 720,1060 783,1070 830,1080 881,1093 920,1100 974,1093 1022,1062 1060,1040 1110,1036 1170,1030 1213,1029 1240,995 1265,965 1290,950" fill="none" stroke="#F9D98E" stroke-width="2.4" stroke-linejoin="round" stroke-linecap="round" /><polyline points="1333,952 1370,965 1407,985" fill="none" stroke="#E5A93B" stroke-width="4.2" stroke-linejoin="round" stroke-linecap="round" /><polyline points="1333,952 1370,965 1407,985" fill="none" stroke="#F9D98E" stroke-width="2.4" stroke-linejoin="round" stroke-linecap="round" /><polyline points="1290,955 1250,1000 1235,1030 1220,1070 1200,1130 1178,1200 1175,1260 1165,1320 1150,1370 1140,1400" fill="none" stroke="#E5A93B" stroke-width="4.2" stroke-linejoin="round" stroke-linecap="round" /><polyline points="1290,955 1250,1000 1235,1030 1220,1070 1200,1130 1178,1200 1175,1260 1165,1320 1150,1370 1140,1400" fill="none" stroke="#F9D98E" stroke-width="2.4" stroke-linejoin="round" stroke-linecap="round" /><polyline points="1416,579.6 1410.6,637.7 1401.7,691.4 1391,727.3 1376.6,757.7 1373,790 1383.7,825.8 1401.7,861.6 1412.4,905 1437,940 1445,975 1430,1010 1433,1045 1455,1074" fill="none" stroke="#E5A93B" stroke-width="4.2" stroke-linejoin="round" stroke-linecap="round" /><polyline points="1416,579.6 1410.6,637.7 1401.7,691.4 1391,727.3 1376.6,757.7 1373,790 1383.7,825.8 1401.7,861.6 1412.4,905 1437,940 1445,975 1430,1010 1433,1045 1455,1074" fill="none" stroke="#F9D98E" stroke-width="2.4" stroke-linejoin="round" stroke-linecap="round" /><polyline points="593,737 640,734 690,730 720,728 744,731" fill="none" stroke="#E5A93B" stroke-width="4.2" stroke-linejoin="round" stroke-linecap="round" /><polyline points="593,737 640,734 690,730 720,728 744,731" fill="none" stroke="#F9D98E" stroke-width="2.4" stroke-linejoin="round" stroke-linecap="round" /><polyline points="715,640 760,620 830,610 905,616" fill="none" stroke="#E5A93B" stroke-width="4.2" stroke-linejoin="round" stroke-linecap="round" /><polyline points="715,640 760,620 830,610 905,616" fill="none" stroke="#F9D98E" stroke-width="2.4" stroke-linejoin="round" stroke-linecap="round" /><polyline points="718,680 780,660 840,650" fill="none" stroke="#E5A93B" stroke-width="4.2" stroke-linejoin="round" stroke-linecap="round" /><polyline points="718,680 780,660 840,650" fill="none" stroke="#F9D98E" stroke-width="2.4" stroke-linejoin="round" stroke-linecap="round" /><polyline points="958,941 1000,948 1047,950 1090,948 1118,948 1177,962 1203,957 1261,948 1290,948" fill="none" stroke="#E5A93B" stroke-width="4.2" stroke-linejoin="round" stroke-linecap="round" /><polyline points="958,941 1000,948 1047,950 1090,948 1118,948 1177,962 1203,957 1261,948 1290,948" fill="none" stroke="#F9D98E" stroke-width="2.4" stroke-linejoin="round" stroke-linecap="round" /><polyline points="1066,824 1080,840 1086,870 1080,890 1090,912 1112,922 1120,945" fill="none" stroke="#E5A93B" stroke-width="4.2" stroke-linejoin="round" stroke-linecap="round" /><polyline points="1066,824 1080,840 1086,870 1080,890 1090,912 1112,922 1120,945" fill="none" stroke="#F9D98E" stroke-width="2.4" stroke-linejoin="round" stroke-linecap="round" /><polyline points="1444.7,993 1491,1011 1545,1022 1604,1032.6" fill="none" stroke="#E5A93B" stroke-width="4.2" stroke-linejoin="round" stroke-linecap="round" /><polyline points="1444.7,993 1491,1011 1545,1022 1604,1032.6" fill="none" stroke="#F9D98E" stroke-width="2.4" stroke-linejoin="round" stroke-linecap="round" /><polyline points="1459,968 1509,950 1604,959" fill="none" stroke="#E5A93B" stroke-width="4.2" stroke-linejoin="round" stroke-linecap="round" /><polyline points="1459,968 1509,950 1604,959" fill="none" stroke="#F9D98E" stroke-width="2.4" stroke-linejoin="round" stroke-linecap="round" /><polyline points="1470,935 1482,923 1509,900 1540,880 1604,850" fill="none" stroke="#E5A93B" stroke-width="4.2" stroke-linejoin="round" stroke-linecap="round" /><polyline points="1470,935 1482,923 1509,900 1540,880 1604,850" fill="none" stroke="#F9D98E" stroke-width="2.4" stroke-linejoin="round" stroke-linecap="round" /><polyline points="1416,736 1482,682.5 1509,675 1561,620 1590,585.7 1604,579.6" fill="none" stroke="#E5A93B" stroke-width="4.2" stroke-linejoin="round" stroke-linecap="round" /><polyline points="1416,736 1482,682.5 1509,675 1561,620 1590,585.7 1604,579.6" fill="none" stroke="#F9D98E" stroke-width="2.4" stroke-linejoin="round" stroke-linecap="round" /><polyline points="1420,736 1455,740 1490,742 1520,740 1560,732 1604,722" fill="none" stroke="#E5A93B" stroke-width="4.2" stroke-linejoin="round" stroke-linecap="round" /><polyline points="1420,736 1455,740 1490,742 1520,740 1560,732 1604,722" fill="none" stroke="#F9D98E" stroke-width="2.4" stroke-linejoin="round" stroke-linecap="round" /><polyline points="1492,763 1518,824 1563,820 1604,810" fill="none" stroke="#E5A93B" stroke-width="4.2" stroke-linejoin="round" stroke-linecap="round" /><polyline points="1492,763 1518,824 1563,820 1604,810" fill="none" stroke="#F9D98E" stroke-width="2.4" stroke-linejoin="round" stroke-linecap="round" /><polyline points="783,1070 800,1120 820,1160 836,1193" fill="none" stroke="#E5A93B" stroke-width="4.2" stroke-linejoin="round" stroke-linecap="round" /><polyline points="783,1070 800,1120 820,1160 836,1193" fill="none" stroke="#F9D98E" stroke-width="2.4" stroke-linejoin="round" stroke-linecap="round" /><text x="536" y="589" font-family="Liberation Sans" font-size="16.3" font-weight="400" fill="#3C4043" stroke="#fff" stroke-width="2.6" stroke-opacity="0.85" paint-order="stroke" text-anchor="middle">Viborg</text><text x="696" y="585" font-family="Liberation Sans" font-size="16.3" font-weight="400" fill="#3C4043" stroke="#fff" stroke-width="2.6" stroke-opacity="0.85" paint-order="stroke" text-anchor="middle">Randers</text><text x="908" y="609" font-family="Liberation Sans" font-size="16.3" font-weight="400" fill="#3C4043" stroke="#fff" stroke-width="2.6" stroke-opacity="0.85" paint-order="stroke" text-anchor="middle">Grenå</text><text x="748" y="752" font-family="Liberation Sans" font-size="16.3" font-weight="400" fill="#3C4043" stroke="#fff" stroke-width="2.6" stroke-opacity="0.85" paint-order="stroke" text-anchor="middle">Viby</text><text x="669" y="776" font-family="Liberation Sans" font-size="16.3" font-weight="400" fill="#3C4043" stroke="#fff" stroke-width="2.6" stroke-opacity="0.85" paint-order="stroke" text-anchor="middle">Skanderborg</text><text x="649" y="854" font-family="Liberation Sans" font-size="16.3" font-weight="400" fill="#3C4043" stroke="#fff" stroke-width="2.6" stroke-opacity="0.85" paint-order="stroke" text-anchor="middle">Horsens</text><text x="627" y="981" font-family="Liberation Sans" font-size="16.3" font-weight="400" fill="#3C4043" stroke="#fff" stroke-width="2.6" stroke-opacity="0.85" paint-order="stroke" text-anchor="middle">Fredericia</text><text x="638" y="1013" font-family="Liberation Sans" font-size="16.3" font-weight="400" fill="#3C4043" stroke="#fff" stroke-width="2.6" stroke-opacity="0.85" paint-order="stroke" text-anchor="middle">delfart</text><text x="849" y="1032" font-family="Liberation Sans" font-size="16.3" font-weight="400" fill="#3C4043" stroke="#fff" stroke-width="2.6" stroke-opacity="0.85" paint-order="stroke" text-anchor="middle">Kerteminde</text><text x="885" y="1089" font-family="Liberation Sans" font-size="16.3" font-weight="400" fill="#3C4043" stroke="#fff" stroke-width="2.6" stroke-opacity="0.85" paint-order="stroke" text-anchor="middle">Nyborg</text><text x="971" y="1088" font-family="Liberation Sans" font-size="16.3" font-weight="400" fill="#3C4043" stroke="#fff" stroke-width="2.6" stroke-opacity="0.85" paint-order="stroke" text-anchor="middle">Korsør</text><text x="745" y="1099" font-family="Liberation Sans" font-size="16.3" font-weight="400" fill="#3C4043" stroke="#fff" stroke-width="2.6" stroke-opacity="0.85" paint-order="stroke" text-anchor="middle">Fyn</text><text x="662" y="1112" font-family="Liberation Sans" font-size="16.3" font-weight="400" fill="#3C4043" stroke="#fff" stroke-width="2.6" stroke-opacity="0.85" paint-order="stroke" text-anchor="middle">Assens</text><text x="744" y="1185" font-family="Liberation Sans" font-size="16.3" font-weight="400" fill="#3C4043" stroke="#fff" stroke-width="2.6" stroke-opacity="0.85" paint-order="stroke" text-anchor="middle">Faaborg</text><text x="836" y="1199" font-family="Liberation Sans" font-size="16.3" font-weight="400" fill="#3C4043" stroke="#fff" stroke-width="2.6" stroke-opacity="0.85" paint-order="stroke" text-anchor="middle">Svendborg</text><text x="864" y="1256" font-family="Liberation Sans" font-size="16.3" font-weight="400" fill="#3C4043" stroke="#fff" stroke-width="2.6" stroke-opacity="0.85" paint-order="stroke" text-anchor="middle">Rudkøbing</text><text x="636" y="1265" font-family="Liberation Sans" font-size="16.3" font-weight="400" fill="#3C4043" stroke="#fff" stroke-width="2.6" stroke-opacity="0.85" paint-order="stroke" text-anchor="middle">Sønderborg</text><text x="970" y="1301" font-family="Liberation Sans" font-size="16.3" font-weight="400" fill="#3C4043" stroke="#fff" stroke-width="2.6" stroke-opacity="0.85" paint-order="stroke" text-anchor="middle">Nakskov</text><text x="1059" y="1326" font-family="Liberation Sans" font-size="16.3" font-weight="400" fill="#3C4043" stroke="#fff" stroke-width="2.6" stroke-opacity="0.85" paint-order="stroke" text-anchor="middle">Maribo</text><text x="1048" y="1358" font-family="Liberation Sans" font-size="16.3" font-weight="400" fill="#3C4043" stroke="#fff" stroke-width="2.6" stroke-opacity="0.85" paint-order="stroke" text-anchor="middle">Lolland</text><text x="1159" y="1301" font-family="Liberation Sans" font-size="16.3" font-weight="400" fill="#3C4043" stroke="#fff" stroke-width="2.6" stroke-opacity="0.85" paint-order="stroke" text-anchor="middle">Falster</text><text x="1151" y="1355" font-family="Liberation Sans" font-size="16.3" font-weight="400" fill="#3C4043" stroke="#fff" stroke-width="2.6" stroke-opacity="0.85" paint-order="stroke" text-anchor="middle">Nykøbing</text><text x="1152" y="1371" font-family="Liberation Sans" font-size="16.3" font-weight="400" fill="#3C4043" stroke="#fff" stroke-width="2.6" stroke-opacity="0.85" paint-order="stroke" text-anchor="middle">Falster</text><text x="1158" y="1225" font-family="Liberation Sans" font-size="16.3" font-weight="400" fill="#3C4043" stroke="#fff" stroke-width="2.6" stroke-opacity="0.85" paint-order="stroke" text-anchor="middle">Vordingborg</text><text x="1122" y="1130" font-family="Liberation Sans" font-size="16.3" font-weight="400" fill="#3C4043" stroke="#fff" stroke-width="2.6" stroke-opacity="0.85" paint-order="stroke" text-anchor="middle">Næstved</text><text x="1022" y="1053" font-family="Liberation Sans" font-size="16.3" font-weight="400" fill="#3C4043" stroke="#fff" stroke-width="2.6" stroke-opacity="0.85" paint-order="stroke" text-anchor="middle">Slagelse</text><text x="1112" y="1041" font-family="Liberation Sans" font-size="16.3" font-weight="400" fill="#3C4043" stroke="#fff" stroke-width="2.6" stroke-opacity="0.85" paint-order="stroke" text-anchor="middle">Sjælland</text><text x="1226" y="1030" font-family="Liberation Sans" font-size="16.3" font-weight="400" fill="#3C4043" stroke="#fff" stroke-width="2.6" stroke-opacity="0.85" paint-order="stroke" text-anchor="middle">Køge</text><text x="1203" y="949" font-family="Liberation Sans" font-size="16.3" font-weight="400" fill="#3C4043" stroke="#fff" stroke-width="2.6" stroke-opacity="0.85" paint-order="stroke" text-anchor="middle">Roskilde</text><text x="1111" y="918" font-family="Liberation Sans" font-size="16.3" font-weight="400" fill="#3C4043" stroke="#fff" stroke-width="2.6" stroke-opacity="0.85" paint-order="stroke" text-anchor="middle">Holbæk</text><text x="1230" y="783" font-family="Liberation Sans" font-size="16.3" font-weight="400" fill="#3C4043" stroke="#fff" stroke-width="2.6" stroke-opacity="0.85" paint-order="stroke" text-anchor="middle">Helsinge</text><text x="1256" y="823" font-family="Liberation Sans" font-size="16.3" font-weight="400" fill="#3C4043" stroke="#fff" stroke-width="2.6" stroke-opacity="0.85" paint-order="stroke" text-anchor="middle">Hillerød</text><text x="1304" y="878" font-family="Liberation Sans" font-size="16.3" font-weight="400" fill="#3C4043" stroke="#fff" stroke-width="2.6" stroke-opacity="0.85" paint-order="stroke" text-anchor="middle">Kongens</text><text x="1304" y="895" font-family="Liberation Sans" font-size="16.3" font-weight="400" fill="#3C4043" stroke="#fff" stroke-width="2.6" stroke-opacity="0.85" paint-order="stroke" text-anchor="middle">Lyngby</text><text x="1476" y="920" font-family="Liberation Sans" font-size="16.3" font-weight="400" fill="#3C4043" stroke="#fff" stroke-width="2.6" stroke-opacity="0.85" paint-order="stroke" text-anchor="middle">Lund</text><text x="1395" y="682" font-family="Liberation Sans" font-size="16.3" font-weight="400" fill="#3C4043" stroke="#fff" stroke-width="2.6" stroke-opacity="0.85" paint-order="stroke" text-anchor="middle">Ängelholm</text><text x="1388" y="624" font-family="Liberation Sans" font-size="16.3" font-weight="400" fill="#3C4043" stroke="#fff" stroke-width="2.6" stroke-opacity="0.85" paint-order="stroke" text-anchor="middle">Båstad</text><text x="1583" y="821" font-family="Liberation Sans" font-size="16.3" font-weight="400" fill="#3C4043" stroke="#fff" stroke-width="2.6" stroke-opacity="0.85" paint-order="stroke" text-anchor="middle">Höör</text><text x="1504" y="863" font-family="Liberation Sans" font-size="16.3" font-weight="400" fill="#3C4043" stroke="#fff" stroke-width="2.6" stroke-opacity="0.85" paint-order="stroke" text-anchor="middle">Eslöv</text><text x="1467" y="1091" font-family="Liberation Sans" font-size="16.3" font-weight="400" fill="#3C4043" stroke="#fff" stroke-width="2.6" stroke-opacity="0.85" paint-order="stroke" text-anchor="middle">Trelleborg</text><text x="966" y="1461" font-family="Liberation Sans" font-size="16.3" font-weight="400" fill="#3C4043" stroke="#fff" stroke-width="2.6" stroke-opacity="0.85" paint-order="stroke" text-anchor="middle">Femern</text><text x="647" y="1457" font-family="Liberation Sans" font-size="16.3" font-weight="400" fill="#3C4043" stroke="#fff" stroke-width="2.6" stroke-opacity="0.85" paint-order="stroke" text-anchor="middle">Egernførde</text><text x="605" y="1434" font-family="Liberation Sans" font-size="16.3" font-weight="400" fill="#3C4043" stroke="#fff" stroke-width="2.6" stroke-opacity="0.85" paint-order="stroke" text-anchor="middle">by</text><text x="1583" y="1438" font-family="Liberation Sans" font-size="16.3" font-weight="400" fill="#3C4043" stroke="#fff" stroke-width="2.6" stroke-opacity="0.85" paint-order="stroke" text-anchor="middle">Sassnitz</text><text x="1572" y="586" font-family="Liberation Sans" font-size="16.3" font-weight="400" fill="#3C4043" stroke="#fff" stroke-width="2.6" stroke-opacity="0.85" paint-order="stroke" text-anchor="middle">Markaryd</text><text x="1590" y="721" font-family="Liberation Sans" font-size="16.3" font-weight="400" fill="#3C4043" stroke="#fff" stroke-width="2.6" stroke-opacity="0.85" paint-order="stroke" text-anchor="middle">Häs</text><text x="1592" y="954" font-family="Liberation Sans" font-size="16.3" font-weight="400" fill="#3C4043" stroke="#fff" stroke-width="2.6" stroke-opacity="0.85" paint-order="stroke" text-anchor="middle">Sjö</text><text x="737" y="718.5" font-family="Liberation Sans" font-size="16.8" font-weight="700" fill="#202124" stroke="#fff" stroke-width="2.6" stroke-opacity="0.85" paint-order="stroke" text-anchor="middle">Aarhus</text><text x="786" y="1052" font-family="Liberation Sans" font-size="17.5" font-weight="700" fill="#2A2A2A" stroke="#fff" stroke-width="2.6" stroke-opacity="0.85" paint-order="stroke" text-anchor="middle">Odense</text><text x="1322" y="930" font-family="Liberation Sans" font-size="22.6" font-weight="700" fill="#202124" stroke="#fff" stroke-width="2.6" stroke-opacity="0.85" paint-order="stroke" text-anchor="middle">København</text><text x="1430" y="963" font-family="Liberation Sans" font-size="24.6" font-weight="700" fill="#202124" stroke="#fff" stroke-width="2.6" stroke-opacity="0.85" paint-order="stroke" text-anchor="middle">Malmø</text><text x="1353" y="770" font-family="Liberation Sans" font-size="18.9" font-weight="700" fill="#202124" stroke="#fff" stroke-width="2.6" stroke-opacity="0.85" paint-order="stroke" text-anchor="middle">Helsingborg</text><text x="915" y="930" font-family="Liberation Sans" font-size="16.3" fill="#3C4043" stroke="#fff" stroke-width="2.6" stroke-opacity="0.85" paint-order="stroke">Kalundborg</text><text x="973" y="930" font-family="Liberation Sans" font-size="15.8" fill="#111">Adresse</text><circle cx="696" cy="592" r="3" fill="#fff" stroke="#555" stroke-width="1.3"/><circle cx="910" cy="618" r="3" fill="#fff" stroke="#555" stroke-width="1.3"/><circle cx="737" cy="727" r="3" fill="#fff" stroke="#555" stroke-width="1.3"/><circle cx="723" cy="745" r="3" fill="#fff" stroke="#555" stroke-width="1.3"/><circle cx="645" cy="861" r="3" fill="#fff" stroke="#555" stroke-width="1.3"/><circle cx="622" cy="988" r="3" fill="#fff" stroke="#555" stroke-width="1.3"/><circle cx="620" cy="1015" r="3" fill="#fff" stroke="#555" stroke-width="1.3"/><circle cx="850" cy="1038" r="3" fill="#fff" stroke="#555" stroke-width="1.3"/><circle cx="884" cy="1098" r="3" fill="#fff" stroke="#555" stroke-width="1.3"/><circle cx="972" cy="1095" r="3" fill="#fff" stroke="#555" stroke-width="1.3"/><circle cx="663" cy="1120" r="3" fill="#fff" stroke="#555" stroke-width="1.3"/><circle cx="744" cy="1190" r="3" fill="#fff" stroke="#555" stroke-width="1.3"/><circle cx="835" cy="1206" r="3" fill="#fff" stroke="#555" stroke-width="1.3"/><circle cx="863" cy="1261" r="3" fill="#fff" stroke="#555" stroke-width="1.3"/><circle cx="639" cy="1274" r="3" fill="#fff" stroke="#555" stroke-width="1.3"/><circle cx="972" cy="1304" r="3" fill="#fff" stroke="#555" stroke-width="1.3"/><circle cx="1056" cy="1330" r="3" fill="#fff" stroke="#555" stroke-width="1.3"/><circle cx="1142" cy="1354" r="3" fill="#fff" stroke="#555" stroke-width="1.3"/><circle cx="1129" cy="1137" r="3" fill="#fff" stroke="#555" stroke-width="1.3"/><circle cx="1022" cy="1061" r="3" fill="#fff" stroke="#555" stroke-width="1.3"/><circle cx="1225" cy="1040" r="3" fill="#fff" stroke="#555" stroke-width="1.3"/><circle cx="1203" cy="957" r="3" fill="#fff" stroke="#555" stroke-width="1.3"/><circle cx="1112" cy="922" r="3" fill="#fff" stroke="#555" stroke-width="1.3"/><circle cx="1229" cy="786" r="3" fill="#fff" stroke="#555" stroke-width="1.3"/><circle cx="1256" cy="836" r="3" fill="#fff" stroke="#555" stroke-width="1.3"/><circle cx="1304" cy="905" r="3" fill="#fff" stroke="#555" stroke-width="1.3"/><circle cx="1476" cy="925" r="3" fill="#fff" stroke="#555" stroke-width="1.3"/><circle cx="1391" cy="622" r="3" fill="#fff" stroke="#555" stroke-width="1.3"/><circle cx="1395" cy="688" r="3" fill="#fff" stroke="#555" stroke-width="1.3"/><circle cx="1583" cy="826" r="3" fill="#fff" stroke="#555" stroke-width="1.3"/><circle cx="1504" cy="867" r="3" fill="#fff" stroke="#555" stroke-width="1.3"/><circle cx="1467" cy="1078" r="3" fill="#fff" stroke="#555" stroke-width="1.3"/><circle cx="1352" cy="778" r="3" fill="#fff" stroke="#555" stroke-width="1.3"/><circle cx="1407" cy="987" r="3" fill="#fff" stroke="#555" stroke-width="1.3"/><rect x="702.5" y="646" width="27" height="16" rx="1.5" fill="#6A9B4C"/><text x="716" y="658.6" font-family="Liberation Sans" font-size="12" font-weight="700" fill="#fff" text-anchor="middle">E45</text><rect x="628.0" y="822.6" width="27" height="16" rx="1.5" fill="#6A9B4C"/><text x="641.5" y="835.2" font-family="Liberation Sans" font-size="12" font-weight="700" fill="#fff" text-anchor="middle">E45</text><rect x="649.5" y="1026" width="27" height="16" rx="1.5" fill="#6A9B4C"/><text x="663" y="1038.6" font-family="Liberation Sans" font-size="12" font-weight="700" fill="#fff" text-anchor="middle">E20</text><rect x="1227.5" y="975" width="27" height="16" rx="1.5" fill="#6A9B4C"/><text x="1241" y="987.6" font-family="Liberation Sans" font-size="12" font-weight="700" fill="#fff" text-anchor="middle">E20</text><rect x="1161.5" y="1127.4" width="27" height="16" rx="1.5" fill="#6A9B4C"/><text x="1175" y="1140.0" font-family="Liberation Sans" font-size="12" font-weight="700" fill="#fff" text-anchor="middle">E47</text><rect x="1095.1" y="1304" width="27" height="16" rx="1.5" fill="#6A9B4C"/><text x="1108.6" y="1316.6" font-family="Liberation Sans" font-size="12" font-weight="700" fill="#fff" text-anchor="middle">E47</text><rect x="1291.3" y="801.6" width="27" height="16" rx="1.5" fill="#6A9B4C"/><text x="1304.8" y="814.2" font-family="Liberation Sans" font-size="12" font-weight="700" fill="#fff" text-anchor="middle">E47</text><rect x="1406.5" y="590" width="21" height="16" rx="1.5" fill="#6A9B4C"/><text x="1417" y="602.6" font-family="Liberation Sans" font-size="12" font-weight="700" fill="#fff" text-anchor="middle">E6</text><rect x="1402.2" y="869.6" width="21" height="16" rx="1.5" fill="#6A9B4C"/><text x="1412.7" y="882.2" font-family="Liberation Sans" font-size="12" font-weight="700" fill="#fff" text-anchor="middle">E6</text><rect x="1429.0" y="1038" width="21" height="16" rx="1.5" fill="#6A9B4C"/><text x="1439.5" y="1050.6" font-family="Liberation Sans" font-size="12" font-weight="700" fill="#fff" text-anchor="middle">E6</text><rect x="1396.5" y="734" width="21" height="16" rx="1.5" fill="#6A9B4C"/><text x="1407" y="746.6" font-family="Liberation Sans" font-size="12" font-weight="700" fill="#fff" text-anchor="middle">E4</text><rect x="1502.5" y="890" width="27" height="16" rx="1.5" fill="#6A9B4C"/><text x="1516" y="902.6" font-family="Liberation Sans" font-size="12" font-weight="700" fill="#fff" text-anchor="middle">E22</text><rect x="1446.5" y="989" width="27" height="16" rx="1.5" fill="#6A9B4C"/><text x="1460" y="1001.6" font-family="Liberation Sans" font-size="12" font-weight="700" fill="#fff" text-anchor="middle">E65</text><rect x="1481.5" y="948" width="21" height="16" rx="1.5" fill="#3F74C9"/><text x="1492" y="960.6" font-family="Liberation Sans" font-size="12" font-weight="700" fill="#fff" text-anchor="middle">11</text><rect x="1584.2" y="882.7" width="19" height="16" rx="1.5" fill="#3F74C9"/><text x="1593.7" y="895.3000000000001" font-family="Liberation Sans" font-size="12" font-weight="700" fill="#fff" text-anchor="middle">13</text><rect x="741.8" y="687" width="21" height="16" rx="1.5" fill="#F6D047"/><text x="752.3" y="699.6" font-family="Liberation Sans" font-size="12" font-weight="700" fill="#333" text-anchor="middle">15</text><rect x="605.5" y="725.5" width="21" height="16" rx="1.5" fill="#F6D047"/><text x="616" y="738.1" font-family="Liberation Sans" font-size="12" font-weight="700" fill="#333" text-anchor="middle">15</text><rect x="1066.2" y="882.7" width="21" height="16" rx="1.5" fill="#F6D047"/><text x="1076.7" y="895.3000000000001" font-family="Liberation Sans" font-size="12" font-weight="700" fill="#333" text-anchor="middle">21</text><rect x="592.5" y="948.6" width="21" height="16" rx="1.5" fill="#F6D047"/><text x="603" y="961.2" font-family="Liberation Sans" font-size="12" font-weight="700" fill="#333" text-anchor="middle">28</text><rect x="803.2" y="1134" width="17" height="16" rx="1.5" fill="#F6D047"/><text x="811.7" y="1146.6" font-family="Liberation Sans" font-size="12" font-weight="700" fill="#333" text-anchor="middle">9</text></svg><div class="r" style="left:756.3px;top:1041.7px;width:54px;height:54px;border-radius:50%;background:rgba(95,99,104,0.35)"></div><div class="r" style="left:761.8px;top:1047.2px;width:43px;height:43px;border-radius:50%;background:#5F6368"></div><div class="r" style="left:780.30px;top:1057.70px;width:6.00px;height:1.60px;background:#fff;"></div><svg style="left:778.3px;top:1069.7px" width="10" height="13" viewBox="0 0 10 13"><path d="M5 0.5A4.5 4.5 0 0 0 0.5 5C0.5 8 5 12.5 5 12.5S9.5 8 9.5 5A4.5 4.5 0 0 0 5 0.5Z" fill="#fff"/><circle cx="5" cy="5" r="1.6" fill="#5F6368"/></svg><div class="r" style="left:748px;top:1099px;width:71px;height:19px;border-radius:10px;background:#5F6368;box-shadow:0 1px 2px rgba(0,0,0,.3);overflow:hidden"></div><div class="r" style="left:760.00px;top:1106.00px;width:4.00px;height:1.40px;background:#fff;"></div><div class="r" style="left:756.00px;top:1114.00px;width:12.00px;height:4.00px;background:#5BCB6B;border-radius:6px 6px 0 0"></div><div class="r" style="left:781.00px;top:1106.00px;width:4.00px;height:1.40px;background:#fff;"></div><div class="r" style="left:777.00px;top:1114.00px;width:12.00px;height:4.00px;background:#F1DE3A;border-radius:6px 6px 0 0"></div><div class="r" style="left:802.00px;top:1106.00px;width:4.00px;height:1.40px;background:#fff;"></div><div class="r" style="left:798.00px;top:1114.00px;width:12.00px;height:4.00px;background:#F0605A;border-radius:6px 6px 0 0"></div><div class="r" style="left:1258.4px;top:923px;width:54px;height:54px;border-radius:50%;background:rgba(95,99,104,0.35)"></div><div class="r" style="left:1263.9px;top:928.5px;width:43px;height:43px;border-radius:50%;background:#5F6368"></div><div class="r" style="left:1282.40px;top:939.00px;width:6.00px;height:1.60px;background:#fff;"></div><svg style="left:1280.4px;top:951px" width="10" height="13" viewBox="0 0 10 13"><path d="M5 0.5A4.5 4.5 0 0 0 0.5 5C0.5 8 5 12.5 5 12.5S9.5 8 9.5 5A4.5 4.5 0 0 0 5 0.5Z" fill="#fff"/><circle cx="5" cy="5" r="1.6" fill="#5F6368"/></svg><div class="r" style="left:1250px;top:980px;width:71px;height:19px;border-radius:10px;background:#5F6368;box-shadow:0 1px 2px rgba(0,0,0,.3);overflow:hidden"></div><div class="r" style="left:1262.00px;top:987.00px;width:4.00px;height:1.40px;background:#fff;"></div><div class="r" style="left:1258.00px;top:995.00px;width:12.00px;height:4.00px;background:#5BCB6B;border-radius:6px 6px 0 0"></div><div class="r" style="left:1283.00px;top:987.00px;width:4.00px;height:1.40px;background:#fff;"></div><div class="r" style="left:1279.00px;top:995.00px;width:12.00px;height:4.00px;background:#F1DE3A;border-radius:6px 6px 0 0"></div><div class="r" style="left:1304.00px;top:987.00px;width:4.00px;height:1.40px;background:#fff;"></div><div class="r" style="left:1300.00px;top:995.00px;width:12.00px;height:4.00px;background:#F0605A;border-radius:6px 6px 0 0"></div><svg style="left:944px;top:909px" width="23" height="32" viewBox="0 0 23 32"><path d="M11.5 1C5.5 1 1 5.3 1 11C1 18 11.5 31 11.5 31S22 18 22 11C22 5.3 17.5 1 11.5 1Z" fill="#5F6368"/><rect x="7" y="5" width="9" height="14" rx="1" fill="#fff"/><g fill="#5F6368"><rect x="8.3" y="6.5" width="1.6" height="1.6"/><rect x="10.7" y="6.5" width="1.6" height="1.6"/><rect x="13.1" y="6.5" width="1.6" height="1.6"/><rect x="8.3" y="9.5" width="1.6" height="1.6"/><rect x="10.7" y="9.5" width="1.6" height="1.6"/><rect x="13.1" y="9.5" width="1.6" height="1.6"/><rect x="10" y="14" width="3" height="5"/></g></svg><div class="r" style="left:1539.40px;top:1225.20px;width:34.30px;height:34.30px;background:#fff;box-shadow:0 1px 2px rgba(0,0,0,.3)"></div><div class="r" style="left:1539.40px;top:1270.40px;width:34.30px;height:34.30px;background:#fff;box-shadow:0 1px 2px rgba(0,0,0,.3)"></div><div class="r" style="left:1539.40px;top:1315.40px;width:34.30px;height:34.30px;background:#fff;box-shadow:0 1px 2px rgba(0,0,0,.3)"></div><div class="r" style="left:1539.40px;top:1360.50px;width:34.30px;height:68.90px;background:#fff;box-shadow:0 1px 2px rgba(0,0,0,.3)"></div><div class="r" style="left:1543.00px;top:1395.10px;width:27.00px;height:0.80px;background:#D8D8D8;"></div><svg style="left:1548.5px;top:1234.3px" width="16" height="16" viewBox="0 0 16 16"><path d="M1 5V1H5M11 1H15V5M15 11V15H11M5 15H1V11" stroke="#3C4043" stroke-width="2" fill="none"/></svg><svg style="left:1547.5px;top:1278.5px" width="18" height="19" viewBox="0 0 18 19"><path d="M9 1L17 7L9 12.5L1 7Z" stroke="#3C4043" stroke-width="1.7" fill="none" stroke-linejoin="round"/><path d="M1.5 11L9 16.5L16.5 11" stroke="#3C4043" stroke-width="1.7" fill="none"/></svg><svg style="left:1547.5px;top:1323.5px" width="18" height="18" viewBox="0 0 18 18"><path d="M1 1L6 6M1 1V5M1 1H5M17 1L12 6M17 1V5M17 1H13M1 17L6 12M1 17V13M1 17H5M17 17L12 12M17 17V13M17 17H13" stroke="#3C4043" stroke-width="2" fill="none"/></svg><svg style="left:1546.5px;top:1367px" width="20" height="20" viewBox="0 0 20 20"><path d="M10 0V20M0 10H20" stroke="#3C4043" stroke-width="2"/></svg><div class="r" style="left:1546.50px;top:1411.00px;width:20.00px;height:2.00px;background:#3C4043;"></div><div class="r" style="left:593.00px;top:990.60px;width:23.00px;height:59.40px;background:#fff;border-radius:0 6px 6px 0;box-shadow:1px 1px 3px rgba(0,0,0,.25)"></div><svg style="left:601px;top:1015px" width="7" height="11" viewBox="0 0 7 11"><path d="M6 1L1.5 5.5L6 10" stroke="#111" stroke-width="1.8" fill="none"/></svg><svg style="left:1595px;top:1451px" width="9" height="9" viewBox="0 0 9 9"><path d="M9 0V9H0A9 9 0 0 0 9 0Z" fill="#E3E3E3"/></svg><div class="r" style="left:234.80px;top:588.90px;width:358.30px;height:862.50px;background:#fff;border:1px solid #C9C9C9;box-sizing:border-box;border-radius:6px;box-shadow:0 2px 3px rgba(0,0,0,0.22)"></div><div class="r" style="left:234.80px;top:635.70px;width:358.30px;height:1.20px;background:#D2D2D2;"></div><div class="t" style="left:254.90px;top:603.07px;font-size:16.3px;line-height:19.56px;font-weight:400;color:#1E1E1E;">Søgeresultat (global org.)</div><svg style="left:480.0px;top:606.1px" width="13" height="13" viewBox="0 0 13 13"><path d="M1 1L12 12M12 1L1 12" stroke="#444" stroke-width="1.7"/></svg><svg style="left:510.29999999999995px;top:604.1999999999999px" width="16" height="16" viewBox="0 0 16 16"><circle cx="6.6" cy="6.6" r="5.2" stroke="#555" stroke-width="1.6" fill="none"/><path d="M10.5 10.5L15 15" stroke="#555" stroke-width="1.7"/></svg><div class="r" style="left:543.80px;top:600.90px;width:1.00px;height:24.00px;background:#D0D0D0;"></div><svg style="left:563.5px;top:610.4px" width="12" height="7" viewBox="0 0 12 7"><path d="M0.5 0.5H11.5L6 6.5Z" fill="#444"/></svg><div class="t" style="left:243.95px;top:669.44px;width:340px;text-align:center;font-size:23.2px;line-height:27.84px;font-weight:400;color:#2A2A2A;letter-spacing:0px">Søgeresultat navn</div><div class="t" style="left:248.40px;top:729.12px;width:150px;text-align:center;font-size:15.3px;line-height:18.36px;font-weight:400;color:#666A6E;">Overblik</div><div class="t" style="left:428.40px;top:729.12px;width:150px;text-align:center;font-size:15.3px;line-height:18.36px;font-weight:400;color:#4C8DF0;">Legend</div><div class="r" style="left:234.80px;top:752.90px;width:179.00px;height:2.00px;background:#C8C8C8;"></div><div class="r" style="left:413.80px;top:752.50px;width:179.30px;height:2.60px;background:#4C8DF0;"></div><div class="t" style="left:266.30px;top:792.69px;font-size:14.7px;line-height:17.64px;font-weight:700;color:#111;">Organisationer</div><div class="r" style="left:439.1px;top:788.0px;width:24.6px;height:24.6px;border:1.3px solid #4C8DF0;border-radius:50%;box-sizing:border-box"></div><svg style="left:445.25px;top:794.15px" width="12.3" height="12.3" viewBox="0 0 12.3 12.3"><path d="M1 4.6899999999999995V1H4.6899999999999995M7.610000000000001 1H11.3V4.6899999999999995M11.3 7.610000000000001V11.3H7.610000000000001M4.6899999999999995 11.3H1V7.610000000000001" stroke="#4C8DF0" stroke-width="1.9" fill="none"/></svg><div class="r" style="left:479.8px;top:787.8px;width:89.7px;height:25.4px;border:1.3px solid #4C8DF0;border-radius:13px;box-sizing:border-box"></div><div class="t" style="left:488.40px;top:793.63px;font-size:11.7px;line-height:14.04px;font-weight:400;color:#4C8DF0;">Skjul alle</div><svg style="left:544.0px;top:793.2px" width="18" height="14" viewBox="0 0 18 14"><path d="M1 7C3 3 6 1.2 9 1.2S15 3 17 7C15 11 12 12.8 9 12.8S3 11 1 7Z" stroke="#4C8DF0" stroke-width="1.5" fill="none" stroke-linejoin="round"/><circle cx="9" cy="7" r="3" stroke="#4C8DF0" stroke-width="1.5" fill="none"/><path d="M2 0.5L16.5 13.5" stroke="#4C8DF0" stroke-width="1.5"/></svg><div class="t" style="left:266.30px;top:838.02px;font-size:15.4px;line-height:18.48px;font-weight:400;color:#444;">Filter Org. option</div><svg style="left:508.9px;top:839.9999999999999px" width="13.8" height="13.8" viewBox="0 0 13.8 13.8"><path d="M1 5.14V1H5.14M8.66 1H12.8V5.14M12.8 8.66V12.8H8.66M5.14 12.8H1V8.66" stroke="#4A4A4A" stroke-width="2.1" fill="none"/></svg><svg style="left:543.8px;top:839.6999999999999px" width="18" height="14" viewBox="0 0 18 14"><path d="M1 7C3 3 6 1.2 9 1.2S15 3 17 7C15 11 12 12.8 9 12.8S3 11 1 7Z" stroke="#4A4A4A" stroke-width="1.6" fill="none" stroke-linejoin="round"/><circle cx="9" cy="7" r="3" stroke="#4A4A4A" stroke-width="1.6" fill="none"/><path d="M7.6 6.5A1.6 1.6 0 0 1 9.3 5" stroke="#4A4A4A" stroke-width="1.2" fill="none"/></svg><div class="t" style="left:266.30px;top:873.22px;font-size:15.4px;line-height:18.48px;font-weight:400;color:#444;">Filter Org. option</div><svg style="left:508.9px;top:875.1999999999999px" width="13.8" height="13.8" viewBox="0 0 13.8 13.8"><path d="M1 5.14V1H5.14M8.66 1H12.8V5.14M12.8 8.66V12.8H8.66M5.14 12.8H1V8.66" stroke="#4A4A4A" stroke-width="2.1" fill="none"/></svg><svg style="left:543.8px;top:874.9px" width="18" height="14" viewBox="0 0 18 14"><path d="M1 7C3 3 6 1.2 9 1.2S15 3 17 7C15 11 12 12.8 9 12.8S3 11 1 7Z" stroke="#4A4A4A" stroke-width="1.6" fill="none" stroke-linejoin="round"/><circle cx="9" cy="7" r="3" stroke="#4A4A4A" stroke-width="1.6" fill="none"/><path d="M7.6 6.5A1.6 1.6 0 0 1 9.3 5" stroke="#4A4A4A" stroke-width="1.2" fill="none"/></svg><div class="t" style="left:266.30px;top:908.22px;font-size:15.4px;line-height:18.48px;font-weight:400;color:#444;">Filter Org. option</div><svg style="left:508.9px;top:910.1999999999999px" width="13.8" height="13.8" viewBox="0 0 13.8 13.8"><path d="M1 5.14V1H5.14M8.66 1H12.8V5.14M12.8 8.66V12.8H8.66M5.14 12.8H1V8.66" stroke="#4A4A4A" stroke-width="2.1" fill="none"/></svg><svg style="left:543.8px;top:909.9px" width="18" height="14" viewBox="0 0 18 14"><path d="M1 7C3 3 6 1.2 9 1.2S15 3 17 7C15 11 12 12.8 9 12.8S3 11 1 7Z" stroke="#4A4A4A" stroke-width="1.6" fill="none" stroke-linejoin="round"/><circle cx="9" cy="7" r="3" stroke="#4A4A4A" stroke-width="1.6" fill="none"/><path d="M7.6 6.5A1.6 1.6 0 0 1 9.3 5" stroke="#4A4A4A" stroke-width="1.2" fill="none"/></svg><div class="r" style="left:234.80px;top:1158.50px;width:358.30px;height:1.20px;background:#D2D2D2;"></div><div class="t" style="left:266.30px;top:1196.49px;font-size:14.7px;line-height:17.64px;font-weight:700;color:#111;">Filter</div><div class="r" style="left:493.1px;top:1192.0px;width:76.4px;height:25.3px;border:1.3px solid #4C8DF0;border-radius:13px;box-sizing:border-box"></div><div class="t" style="left:501.30px;top:1197.43px;font-size:11.7px;line-height:14.04px;font-weight:400;color:#4C8DF0;">Vis alle</div><svg style="left:547.4000000000001px;top:1197.6px" width="14" height="14" viewBox="0 0 14 14"><rect x="0.8" y="0.8" width="12.4" height="12.4" rx="1" stroke="#4C8DF0" stroke-width="1.5" fill="none"/><path d="M3.5 7.2L5.9 9.5L10.5 4.5" stroke="#4C8DF0" stroke-width="1.5" fill="none"/></svg><div class="t" style="left:266.30px;top:1242.02px;font-size:15.4px;line-height:18.48px;font-weight:400;color:#333;">Alarmer</div><svg style="left:547.1px;top:1243.6px" width="15" height="15" viewBox="0 0 15 15"><rect x="0.8" y="0.8" width="13.4" height="13.4" rx="1.5" stroke="#4A4A4A" stroke-width="1.5" fill="none"/><path d="M3.8 7.6L6.3 10L11.2 4.8" stroke="#4A4A4A" stroke-width="1.5" fill="none"/></svg><div class="t" style="left:266.30px;top:1277.22px;font-size:15.4px;line-height:18.48px;font-weight:400;color:#333;">Enheder offline</div><svg style="left:547.1px;top:1278.8px" width="15" height="15" viewBox="0 0 15 15"><rect x="0.8" y="0.8" width="13.4" height="13.4" rx="1.5" stroke="#4A4A4A" stroke-width="1.5" fill="none"/><path d="M3.8 7.6L6.3 10L11.2 4.8" stroke="#4A4A4A" stroke-width="1.5" fill="none"/></svg><div class="t" style="left:266.30px;top:1312.02px;font-size:15.4px;line-height:18.48px;font-weight:400;color:#333;">Enheder online</div><svg style="left:547.1px;top:1313.6px" width="15" height="15" viewBox="0 0 15 15"><rect x="0.8" y="0.8" width="13.4" height="13.4" rx="1.5" stroke="#4A4A4A" stroke-width="1.5" fill="none"/><path d="M3.8 7.6L6.3 10L11.2 4.8" stroke="#4A4A4A" stroke-width="1.5" fill="none"/></svg><div class="r" style="left:234.80px;top:1353.60px;width:358.30px;height:1.20px;background:#D2D2D2;"></div><div class="r" style="left:413.50px;top:1370.60px;width:1.30px;height:65.60px;background:#D5D5D5;"></div><svg style="left:249.5px;top:1370.7px" width="18" height="24" viewBox="0 0 18 24"><path d="M9 0.3C4.1 0.3 0.3 4 0.3 8.8C0.3 10.6 0.9 12.2 1.7 13.6L9 23.8L16.3 13.6C17.1 12.2 17.7 10.6 17.7 8.8C17.7 4 13.9 0.3 9 0.3Z" fill="#FF5A52"/><path d="M9 2.8C7.3 2.8 6.2 4 6.2 5.8V8.6L4.2 12H13.8L11.8 8.6V5.8C11.8 4 10.7 2.8 9 2.8Z" fill="#fff"/><path d="M7.7 13.2H10.3L9 14.4Z" fill="#fff"/></svg><div class="t" style="left:276.50px;top:1375.25px;font-size:14px;line-height:16.8px;font-weight:400;color:#111;-webkit-text-stroke:0.15px #111">Alarmer</div><div class="r" style="left:394.00px;top:1383.00px;width:4.50px;height:1.20px;background:#555;"></div><svg style="left:249.5px;top:1411.4px" width="18" height="24" viewBox="0 0 18 24"><path d="M9 0.3C4.1 0.3 0.3 4 0.3 8.8C0.3 10.6 0.9 12.2 1.7 13.6L9 23.8L16.3 13.6C17.1 12.2 17.7 10.6 17.7 8.8C17.7 4 13.9 0.3 9 0.3Z" fill="#EEE11D"/><g stroke="#4A4A4A" stroke-width="1.1" fill="none"><path d="M3.2 7A8.5 8.5 0 0 1 14.8 7"/><path d="M5.3 9.3A5.5 5.5 0 0 1 12.7 9.3"/><path d="M3 3.8L14.8 14.4"/></g><circle cx="9" cy="12.4" r="1.1" fill="#4A4A4A"/></svg><div class="t" style="left:276.50px;top:1415.95px;font-size:14px;line-height:16.8px;font-weight:400;color:#111;-webkit-text-stroke:0.15px #111">Enheder offline</div><div class="r" style="left:394.00px;top:1424.00px;width:4.50px;height:1.20px;background:#555;"></div><svg style="left:429.8px;top:1370.7px" width="18" height="24" viewBox="0 0 18 24"><path d="M9 0.3C4.1 0.3 0.3 4 0.3 8.8C0.3 10.6 0.9 12.2 1.7 13.6L9 23.8L16.3 13.6C17.1 12.2 17.7 10.6 17.7 8.8C17.7 4 13.9 0.3 9 0.3Z" fill="#5BCB6B"/><circle cx="9" cy="8.6" r="5.8" fill="#fff"/><path d="M6.4 8.8L8.3 10.4L11.6 6.8" stroke="#5BCB6B" stroke-width="1.3" fill="none"/></svg><div class="t" style="left:456.60px;top:1375.25px;font-size:14px;line-height:16.8px;font-weight:400;color:#111;-webkit-text-stroke:0.15px #111">Enheder online</div><div class="r" style="left:574.00px;top:1383.00px;width:4.50px;height:1.20px;background:#555;"></div><svg style="left:429.8px;top:1411.4px" width="18" height="24" viewBox="0 0 18 24"><path d="M9 0.3C4.1 0.3 0.3 4 0.3 8.8C0.3 10.6 0.9 12.2 1.7 13.6L9 23.8L16.3 13.6C17.1 12.2 17.7 10.6 17.7 8.8C17.7 4 13.9 0.3 9 0.3Z" fill="#5F6368"/><rect x="5.3" y="3" width="7.4" height="11.5" rx="1" fill="#fff"/><g fill="#5F6368"><rect x="6.5" y="4.4" width="1.3" height="1.3"/><rect x="8.35" y="4.4" width="1.3" height="1.3"/><rect x="10.2" y="4.4" width="1.3" height="1.3"/><rect x="6.5" y="6.9" width="1.3" height="1.3"/><rect x="8.35" y="6.9" width="1.3" height="1.3"/><rect x="10.2" y="6.9" width="1.3" height="1.3"/><rect x="8" y="10.5" width="2" height="4"/></g></svg><div class="t" style="left:456.60px;top:1415.95px;font-size:14px;line-height:16.8px;font-weight:400;color:#111;-webkit-text-stroke:0.15px #111">Lokationer i alt</div><div class="r" style="left:574.00px;top:1424.00px;width:4.50px;height:1.20px;background:#555;"></div><div class="r" style="left:1966.80px;top:317.30px;width:358.30px;height:862.50px;background:#fff;border:1px solid #C9C9C9;box-sizing:border-box;border-radius:6px;box-shadow:0 2px 3px rgba(0,0,0,0.22)"></div><div class="r" style="left:1966.80px;top:364.10px;width:358.30px;height:1.20px;background:#D2D2D2;"></div><div class="t" style="left:1986.90px;top:331.47px;font-size:16.3px;line-height:19.56px;font-weight:400;color:#1E1E1E;">Søgeresultat (global org.)</div><svg style="left:2212.0px;top:334.5px" width="13" height="13" viewBox="0 0 13 13"><path d="M1 1L12 12M12 1L1 12" stroke="#444" stroke-width="1.7"/></svg><svg style="left:2242.3px;top:332.6px" width="16" height="16" viewBox="0 0 16 16"><circle cx="6.6" cy="6.6" r="5.2" stroke="#555" stroke-width="1.6" fill="none"/><path d="M10.5 10.5L15 15" stroke="#555" stroke-width="1.7"/></svg><div class="r" style="left:2275.80px;top:329.30px;width:1.00px;height:24.00px;background:#D0D0D0;"></div><svg style="left:2295.5px;top:338.8px" width="12" height="7" viewBox="0 0 12 7"><path d="M0.5 0.5H11.5L6 6.5Z" fill="#444"/></svg><div class="t" style="left:1975.95px;top:397.84px;width:340px;text-align:center;font-size:23.2px;line-height:27.84px;font-weight:400;color:#2A2A2A;letter-spacing:0px">Søgeresultat navn</div><div class="t" style="left:1980.40px;top:457.52px;width:150px;text-align:center;font-size:15.3px;line-height:18.36px;font-weight:400;color:#666A6E;">Overblik</div><div class="t" style="left:2160.40px;top:457.52px;width:150px;text-align:center;font-size:15.3px;line-height:18.36px;font-weight:400;color:#4C8DF0;">Legend</div><div class="r" style="left:1966.80px;top:481.30px;width:179.00px;height:2.00px;background:#C8C8C8;"></div><div class="r" style="left:2145.80px;top:480.90px;width:179.30px;height:2.60px;background:#4C8DF0;"></div><div class="t" style="left:1998.30px;top:521.09px;font-size:14.7px;line-height:17.64px;font-weight:700;color:#111;">Organisationer</div><div class="r" style="left:2171.1px;top:516.4px;width:24.6px;height:24.6px;border:1.3px solid #4C8DF0;border-radius:50%;box-sizing:border-box"></div><svg style="left:2177.25px;top:522.5500000000001px" width="12.3" height="12.3" viewBox="0 0 12.3 12.3"><path d="M1 4.6899999999999995V1H4.6899999999999995M7.610000000000001 1H11.3V4.6899999999999995M11.3 7.610000000000001V11.3H7.610000000000001M4.6899999999999995 11.3H1V7.610000000000001" stroke="#4C8DF0" stroke-width="1.9" fill="none"/></svg><div class="r" style="left:2211.8px;top:516.2px;width:89.7px;height:25.4px;border:1.3px solid #4C8DF0;border-radius:13px;box-sizing:border-box"></div><div class="t" style="left:2220.40px;top:522.03px;font-size:11.7px;line-height:14.04px;font-weight:400;color:#4C8DF0;">Skjul alle</div><svg style="left:2276.0px;top:521.6px" width="18" height="14" viewBox="0 0 18 14"><path d="M1 7C3 3 6 1.2 9 1.2S15 3 17 7C15 11 12 12.8 9 12.8S3 11 1 7Z" stroke="#4C8DF0" stroke-width="1.5" fill="none" stroke-linejoin="round"/><circle cx="9" cy="7" r="3" stroke="#4C8DF0" stroke-width="1.5" fill="none"/><path d="M2 0.5L16.5 13.5" stroke="#4C8DF0" stroke-width="1.5"/></svg><div class="t" style="left:1998.30px;top:566.42px;font-size:15.4px;line-height:18.48px;font-weight:400;color:#444;">Filter Org. option</div><svg style="left:2240.9px;top:568.4px" width="13.8" height="13.8" viewBox="0 0 13.8 13.8"><path d="M1 5.14V1H5.14M8.66 1H12.8V5.14M12.8 8.66V12.8H8.66M5.14 12.8H1V8.66" stroke="#4A4A4A" stroke-width="2.1" fill="none"/></svg><svg style="left:2275.8px;top:568.1px" width="18" height="14" viewBox="0 0 18 14"><path d="M1 7C3 3 6 1.2 9 1.2S15 3 17 7C15 11 12 12.8 9 12.8S3 11 1 7Z" stroke="#4A4A4A" stroke-width="1.6" fill="none" stroke-linejoin="round"/><circle cx="9" cy="7" r="3" stroke="#4A4A4A" stroke-width="1.6" fill="none"/><path d="M7.6 6.5A1.6 1.6 0 0 1 9.3 5" stroke="#4A4A4A" stroke-width="1.2" fill="none"/></svg><div class="t" style="left:1998.30px;top:601.62px;font-size:15.4px;line-height:18.48px;font-weight:400;color:#444;">Filter Org. option</div><svg style="left:2240.9px;top:603.6px" width="13.8" height="13.8" viewBox="0 0 13.8 13.8"><path d="M1 5.14V1H5.14M8.66 1H12.8V5.14M12.8 8.66V12.8H8.66M5.14 12.8H1V8.66" stroke="#4A4A4A" stroke-width="2.1" fill="none"/></svg><svg style="left:2275.8px;top:603.3000000000001px" width="18" height="14" viewBox="0 0 18 14"><path d="M1 7C3 3 6 1.2 9 1.2S15 3 17 7C15 11 12 12.8 9 12.8S3 11 1 7Z" stroke="#4A4A4A" stroke-width="1.6" fill="none" stroke-linejoin="round"/><circle cx="9" cy="7" r="3" stroke="#4A4A4A" stroke-width="1.6" fill="none"/><path d="M7.6 6.5A1.6 1.6 0 0 1 9.3 5" stroke="#4A4A4A" stroke-width="1.2" fill="none"/></svg><div class="t" style="left:1998.30px;top:636.62px;font-size:15.4px;line-height:18.48px;font-weight:400;color:#444;">Filter Org. option</div><svg style="left:2240.9px;top:638.6px" width="13.8" height="13.8" viewBox="0 0 13.8 13.8"><path d="M1 5.14V1H5.14M8.66 1H12.8V5.14M12.8 8.66V12.8H8.66M5.14 12.8H1V8.66" stroke="#4A4A4A" stroke-width="2.1" fill="none"/></svg><svg style="left:2275.8px;top:638.3000000000001px" width="18" height="14" viewBox="0 0 18 14"><path d="M1 7C3 3 6 1.2 9 1.2S15 3 17 7C15 11 12 12.8 9 12.8S3 11 1 7Z" stroke="#4A4A4A" stroke-width="1.6" fill="none" stroke-linejoin="round"/><circle cx="9" cy="7" r="3" stroke="#4A4A4A" stroke-width="1.6" fill="none"/><path d="M7.6 6.5A1.6 1.6 0 0 1 9.3 5" stroke="#4A4A4A" stroke-width="1.2" fill="none"/></svg><div class="r" style="left:1966.80px;top:886.90px;width:358.30px;height:1.20px;background:#D2D2D2;"></div><div class="t" style="left:1998.30px;top:924.89px;font-size:14.7px;line-height:17.64px;font-weight:700;color:#111;">Filter</div><div class="r" style="left:2222.0px;top:920.4000000000001px;width:79.7px;height:25.3px;border:1.3px solid #4C8DF0;border-radius:13px;box-sizing:border-box"></div><div class="t" style="left:2230.00px;top:925.83px;font-size:11.7px;line-height:14.04px;font-weight:400;color:#4C8DF0;">Ryd alle</div><svg style="left:2279.4px;top:926.0px" width="14" height="14" viewBox="0 0 14 14"><rect x="0.8" y="0.8" width="12.4" height="12.4" rx="1" stroke="#4C8DF0" stroke-width="1.5" fill="none"/><path d="M4.5 4.5L9.5 9.5M9.5 4.5L4.5 9.5" stroke="#4C8DF0" stroke-width="1.5"/></svg><div class="t" style="left:1998.30px;top:970.42px;font-size:15.4px;line-height:18.48px;font-weight:400;color:#333;">Alarmer</div><svg style="left:2279.1px;top:972.0px" width="15" height="15" viewBox="0 0 15 15"><rect x="0.8" y="0.8" width="13.4" height="13.4" rx="1.5" stroke="#4A4A4A" stroke-width="1.5" fill="none"/><path d="M3.8 7.6L6.3 10L11.2 4.8" stroke="#4A4A4A" stroke-width="1.5" fill="none"/></svg><div class="t" style="left:1998.30px;top:1005.62px;font-size:15.4px;line-height:18.48px;font-weight:400;color:#333;">Enheder offline</div><svg style="left:2279.1px;top:1007.2px" width="15" height="15" viewBox="0 0 15 15"><rect x="0.8" y="0.8" width="13.4" height="13.4" rx="1.5" stroke="#4A4A4A" stroke-width="1.5" fill="none"/><path d="M3.8 7.6L6.3 10L11.2 4.8" stroke="#4A4A4A" stroke-width="1.5" fill="none"/></svg><div class="t" style="left:1998.30px;top:1040.42px;font-size:15.4px;line-height:18.48px;font-weight:400;color:#333;">Enheder online</div><svg style="left:2279.1px;top:1042.0px" width="15" height="15" viewBox="0 0 15 15"><rect x="0.8" y="0.8" width="13.4" height="13.4" rx="1.5" stroke="#4A4A4A" stroke-width="1.5" fill="none"/><path d="M3.8 7.6L6.3 10L11.2 4.8" stroke="#4A4A4A" stroke-width="1.5" fill="none"/></svg><div class="r" style="left:1966.80px;top:1082.00px;width:358.30px;height:1.20px;background:#D2D2D2;"></div><div class="r" style="left:2145.50px;top:1099.00px;width:1.30px;height:65.60px;background:#D5D5D5;"></div><svg style="left:1981.5px;top:1099.1000000000001px" width="18" height="24" viewBox="0 0 18 24"><path d="M9 0.3C4.1 0.3 0.3 4 0.3 8.8C0.3 10.6 0.9 12.2 1.7 13.6L9 23.8L16.3 13.6C17.1 12.2 17.7 10.6 17.7 8.8C17.7 4 13.9 0.3 9 0.3Z" fill="#FF5A52"/><path d="M9 2.8C7.3 2.8 6.2 4 6.2 5.8V8.6L4.2 12H13.8L11.8 8.6V5.8C11.8 4 10.7 2.8 9 2.8Z" fill="#fff"/><path d="M7.7 13.2H10.3L9 14.4Z" fill="#fff"/></svg><div class="t" style="left:2008.50px;top:1103.65px;font-size:14px;line-height:16.8px;font-weight:400;color:#111;-webkit-text-stroke:0.15px #111">Alarmer</div><div class="r" style="left:2126.00px;top:1112.00px;width:4.50px;height:1.20px;background:#555;"></div><svg style="left:1981.5px;top:1139.8000000000002px" width="18" height="24" viewBox="0 0 18 24"><path d="M9 0.3C4.1 0.3 0.3 4 0.3 8.8C0.3 10.6 0.9 12.2 1.7 13.6L9 23.8L16.3 13.6C17.1 12.2 17.7 10.6 17.7 8.8C17.7 4 13.9 0.3 9 0.3Z" fill="#EEE11D"/><g stroke="#4A4A4A" stroke-width="1.1" fill="none"><path d="M3.2 7A8.5 8.5 0 0 1 14.8 7"/><path d="M5.3 9.3A5.5 5.5 0 0 1 12.7 9.3"/><path d="M3 3.8L14.8 14.4"/></g><circle cx="9" cy="12.4" r="1.1" fill="#4A4A4A"/></svg><div class="t" style="left:2008.50px;top:1144.35px;font-size:14px;line-height:16.8px;font-weight:400;color:#111;-webkit-text-stroke:0.15px #111">Enheder offline</div><div class="r" style="left:2126.00px;top:1152.00px;width:4.50px;height:1.20px;background:#555;"></div><svg style="left:2161.8px;top:1099.1000000000001px" width="18" height="24" viewBox="0 0 18 24"><path d="M9 0.3C4.1 0.3 0.3 4 0.3 8.8C0.3 10.6 0.9 12.2 1.7 13.6L9 23.8L16.3 13.6C17.1 12.2 17.7 10.6 17.7 8.8C17.7 4 13.9 0.3 9 0.3Z" fill="#5BCB6B"/><circle cx="9" cy="8.6" r="5.8" fill="#fff"/><path d="M6.4 8.8L8.3 10.4L11.6 6.8" stroke="#5BCB6B" stroke-width="1.3" fill="none"/></svg><div class="t" style="left:2188.60px;top:1103.65px;font-size:14px;line-height:16.8px;font-weight:400;color:#111;-webkit-text-stroke:0.15px #111">Enheder online</div><div class="r" style="left:2306.00px;top:1112.00px;width:4.50px;height:1.20px;background:#555;"></div><svg style="left:2161.8px;top:1139.8000000000002px" width="18" height="24" viewBox="0 0 18 24"><path d="M9 0.3C4.1 0.3 0.3 4 0.3 8.8C0.3 10.6 0.9 12.2 1.7 13.6L9 23.8L16.3 13.6C17.1 12.2 17.7 10.6 17.7 8.8C17.7 4 13.9 0.3 9 0.3Z" fill="#5F6368"/><rect x="5.3" y="3" width="7.4" height="11.5" rx="1" fill="#fff"/><g fill="#5F6368"><rect x="6.5" y="4.4" width="1.3" height="1.3"/><rect x="8.35" y="4.4" width="1.3" height="1.3"/><rect x="10.2" y="4.4" width="1.3" height="1.3"/><rect x="6.5" y="6.9" width="1.3" height="1.3"/><rect x="8.35" y="6.9" width="1.3" height="1.3"/><rect x="10.2" y="6.9" width="1.3" height="1.3"/><rect x="8" y="10.5" width="2" height="4"/></g></svg><div class="t" style="left:2188.60px;top:1144.35px;font-size:14px;line-height:16.8px;font-weight:400;color:#111;-webkit-text-stroke:0.15px #111">Lokationer i alt</div><div class="r" style="left:2306.00px;top:1152.00px;width:4.50px;height:1.20px;background:#555;"></div><div class="r" style="left:2325.10px;top:719.50px;width:23.00px;height:59.40px;background:#fff;border-radius:0 6px 6px 0;box-shadow:1px 1px 3px rgba(0,0,0,.25)"></div><svg style="left:2333.1px;top:744.0px" width="7" height="11" viewBox="0 0 7 11"><path d="M6 1L1.5 5.5L6 10" stroke="#111" stroke-width="1.8" fill="none"/></svg><div class="r" style="left:1966.80px;top:1353.20px;width:358.30px;height:862.50px;background:#fff;border:1px solid #C9C9C9;box-sizing:border-box;border-radius:6px;box-shadow:0 2px 3px rgba(0,0,0,0.22)"></div><div class="r" style="left:1966.80px;top:1400.00px;width:358.30px;height:1.20px;background:#D2D2D2;"></div><div class="t" style="left:1986.90px;top:1367.37px;font-size:16.3px;line-height:19.56px;font-weight:400;color:#1E1E1E;">Søgeresultat (organisation)</div><svg style="left:2212.0px;top:1370.4px" width="13" height="13" viewBox="0 0 13 13"><path d="M1 1L12 12M12 1L1 12" stroke="#444" stroke-width="1.7"/></svg><svg style="left:2242.3px;top:1368.5px" width="16" height="16" viewBox="0 0 16 16"><circle cx="6.6" cy="6.6" r="5.2" stroke="#555" stroke-width="1.6" fill="none"/><path d="M10.5 10.5L15 15" stroke="#555" stroke-width="1.7"/></svg><div class="r" style="left:2275.80px;top:1365.20px;width:1.00px;height:24.00px;background:#D0D0D0;"></div><svg style="left:2295.5px;top:1374.7px" width="12" height="7" viewBox="0 0 12 7"><path d="M0.5 0.5H11.5L6 6.5Z" fill="#444"/></svg><div class="t" style="left:1975.95px;top:1433.74px;width:340px;text-align:center;font-size:23.2px;line-height:27.84px;font-weight:400;color:#2A2A2A;letter-spacing:0px">Søgeresultat navn</div><div class="t" style="left:1980.40px;top:1493.42px;width:150px;text-align:center;font-size:15.3px;line-height:18.36px;font-weight:400;color:#666A6E;">Overblik</div><div class="t" style="left:2160.40px;top:1493.42px;width:150px;text-align:center;font-size:15.3px;line-height:18.36px;font-weight:400;color:#4C8DF0;">Legend</div><div class="r" style="left:1966.80px;top:1517.20px;width:179.00px;height:2.00px;background:#C8C8C8;"></div><div class="r" style="left:2145.80px;top:1516.80px;width:179.30px;height:2.60px;background:#4C8DF0;"></div><div class="t" style="left:1998.30px;top:1556.99px;font-size:14.7px;line-height:17.64px;font-weight:700;color:#111;">Organisationer</div><div class="r" style="left:2171.1px;top:1552.3px;width:24.6px;height:24.6px;border:1.3px solid #4C8DF0;border-radius:50%;box-sizing:border-box"></div><svg style="left:2177.25px;top:1558.45px" width="12.3" height="12.3" viewBox="0 0 12.3 12.3"><path d="M1 4.6899999999999995V1H4.6899999999999995M7.610000000000001 1H11.3V4.6899999999999995M11.3 7.610000000000001V11.3H7.610000000000001M4.6899999999999995 11.3H1V7.610000000000001" stroke="#4C8DF0" stroke-width="1.9" fill="none"/></svg><div class="r" style="left:2211.8px;top:1552.1000000000001px;width:89.7px;height:25.4px;border:1.3px solid #4C8DF0;border-radius:13px;box-sizing:border-box"></div><div class="t" style="left:2220.40px;top:1557.93px;font-size:11.7px;line-height:14.04px;font-weight:400;color:#4C8DF0;">Skjul alle</div><svg style="left:2276.0px;top:1557.5px" width="18" height="14" viewBox="0 0 18 14"><path d="M1 7C3 3 6 1.2 9 1.2S15 3 17 7C15 11 12 12.8 9 12.8S3 11 1 7Z" stroke="#4C8DF0" stroke-width="1.5" fill="none" stroke-linejoin="round"/><circle cx="9" cy="7" r="3" stroke="#4C8DF0" stroke-width="1.5" fill="none"/><path d="M2 0.5L16.5 13.5" stroke="#4C8DF0" stroke-width="1.5"/></svg><div class="t" style="left:1998.30px;top:1602.12px;font-size:15.4px;line-height:18.48px;font-weight:400;color:#444;">Filter Org. option</div><svg style="left:2240.9px;top:1604.1px" width="13.8" height="13.8" viewBox="0 0 13.8 13.8"><path d="M1 5.14V1H5.14M8.66 1H12.8V5.14M12.8 8.66V12.8H8.66M5.14 12.8H1V8.66" stroke="#4A4A4A" stroke-width="2.1" fill="none"/></svg><svg style="left:2275.8px;top:1603.8px" width="18" height="14" viewBox="0 0 18 14"><path d="M1 7C3 3 6 1.2 9 1.2S15 3 17 7C15 11 12 12.8 9 12.8S3 11 1 7Z" stroke="#4A4A4A" stroke-width="1.6" fill="none" stroke-linejoin="round"/><circle cx="9" cy="7" r="3" stroke="#4A4A4A" stroke-width="1.6" fill="none"/><path d="M7.6 6.5A1.6 1.6 0 0 1 9.3 5" stroke="#4A4A4A" stroke-width="1.2" fill="none"/></svg><div class="r" style="left:1987.40px;top:1644.40px;width:317.00px;height:1.60px;background:#D7D7D7;"></div><div class="t" style="left:1998.30px;top:1669.22px;font-size:15.4px;line-height:18.48px;font-weight:400;color:#C8C8C8;">Filter Org. option</div><svg style="left:2240.9px;top:1671.2px" width="13.8" height="13.8" viewBox="0 0 13.8 13.8"><path d="M1 5.14V1H5.14M8.66 1H12.8V5.14M12.8 8.66V12.8H8.66M5.14 12.8H1V8.66" stroke="#C8C8C8" stroke-width="2.1" fill="none"/></svg><svg style="left:2275.8px;top:1670.9px" width="18" height="14" viewBox="0 0 18 14"><path d="M1 7C3 3 6 1.2 9 1.2S15 3 17 7C15 11 12 12.8 9 12.8S3 11 1 7Z" stroke="#C8C8C8" stroke-width="1.6" fill="none" stroke-linejoin="round"/><circle cx="9" cy="7" r="3" stroke="#C8C8C8" stroke-width="1.6" fill="none"/><path d="M2 0.5L16.5 13.5" stroke="#C8C8C8" stroke-width="1.6"/></svg><div class="t" style="left:1998.30px;top:1704.22px;font-size:15.4px;line-height:18.48px;font-weight:400;color:#C8C8C8;">Filter Org. option</div><svg style="left:2240.9px;top:1706.2px" width="13.8" height="13.8" viewBox="0 0 13.8 13.8"><path d="M1 5.14V1H5.14M8.66 1H12.8V5.14M12.8 8.66V12.8H8.66M5.14 12.8H1V8.66" stroke="#C8C8C8" stroke-width="2.1" fill="none"/></svg><svg style="left:2275.8px;top:1705.9px" width="18" height="14" viewBox="0 0 18 14"><path d="M1 7C3 3 6 1.2 9 1.2S15 3 17 7C15 11 12 12.8 9 12.8S3 11 1 7Z" stroke="#C8C8C8" stroke-width="1.6" fill="none" stroke-linejoin="round"/><circle cx="9" cy="7" r="3" stroke="#C8C8C8" stroke-width="1.6" fill="none"/><path d="M2 0.5L16.5 13.5" stroke="#C8C8C8" stroke-width="1.6"/></svg><div class="r" style="left:1966.80px;top:1922.80px;width:358.30px;height:1.20px;background:#D2D2D2;"></div><div class="t" style="left:1998.30px;top:1960.79px;font-size:14.7px;line-height:17.64px;font-weight:700;color:#111;">Filter</div><div class="r" style="left:2222.0px;top:1956.3000000000002px;width:79.7px;height:25.3px;border:1.3px solid #4C8DF0;border-radius:13px;box-sizing:border-box"></div><div class="t" style="left:2230.00px;top:1961.73px;font-size:11.7px;line-height:14.04px;font-weight:400;color:#4C8DF0;">Ryd alle</div><svg style="left:2279.4px;top:1961.9px" width="14" height="14" viewBox="0 0 14 14"><rect x="0.8" y="0.8" width="12.4" height="12.4" rx="1" stroke="#4C8DF0" stroke-width="1.5" fill="none"/><path d="M4.5 4.5L9.5 9.5M9.5 4.5L4.5 9.5" stroke="#4C8DF0" stroke-width="1.5"/></svg><div class="t" style="left:1998.30px;top:2006.32px;font-size:15.4px;line-height:18.48px;font-weight:400;color:#333;">Alarmer</div><svg style="left:2279.1px;top:2007.9px" width="15" height="15" viewBox="0 0 15 15"><rect x="0.8" y="0.8" width="13.4" height="13.4" rx="1.5" stroke="#4A4A4A" stroke-width="1.5" fill="none"/><path d="M3.8 7.6L6.3 10L11.2 4.8" stroke="#4A4A4A" stroke-width="1.5" fill="none"/></svg><div class="t" style="left:1998.30px;top:2041.52px;font-size:15.4px;line-height:18.48px;font-weight:400;color:#333;">Enheder offline</div><svg style="left:2279.1px;top:2043.1px" width="15" height="15" viewBox="0 0 15 15"><rect x="0.8" y="0.8" width="13.4" height="13.4" rx="1.5" stroke="#4A4A4A" stroke-width="1.5" fill="none"/><path d="M3.8 7.6L6.3 10L11.2 4.8" stroke="#4A4A4A" stroke-width="1.5" fill="none"/></svg><div class="t" style="left:1998.30px;top:2076.32px;font-size:15.4px;line-height:18.48px;font-weight:400;color:#333;">Enheder online</div><svg style="left:2279.1px;top:2077.9px" width="15" height="15" viewBox="0 0 15 15"><rect x="0.8" y="0.8" width="13.4" height="13.4" rx="1.5" stroke="#4A4A4A" stroke-width="1.5" fill="none"/><path d="M3.8 7.6L6.3 10L11.2 4.8" stroke="#4A4A4A" stroke-width="1.5" fill="none"/></svg><div class="r" style="left:1966.80px;top:2117.90px;width:358.30px;height:1.20px;background:#D2D2D2;"></div><div class="r" style="left:2145.50px;top:2134.90px;width:1.30px;height:65.60px;background:#D5D5D5;"></div><svg style="left:1981.5px;top:2135.0px" width="18" height="24" viewBox="0 0 18 24"><path d="M9 0.3C4.1 0.3 0.3 4 0.3 8.8C0.3 10.6 0.9 12.2 1.7 13.6L9 23.8L16.3 13.6C17.1 12.2 17.7 10.6 17.7 8.8C17.7 4 13.9 0.3 9 0.3Z" fill="#FF5A52"/><path d="M9 2.8C7.3 2.8 6.2 4 6.2 5.8V8.6L4.2 12H13.8L11.8 8.6V5.8C11.8 4 10.7 2.8 9 2.8Z" fill="#fff"/><path d="M7.7 13.2H10.3L9 14.4Z" fill="#fff"/></svg><div class="t" style="left:2008.50px;top:2139.55px;font-size:14px;line-height:16.8px;font-weight:400;color:#111;-webkit-text-stroke:0.15px #111">Alarmer</div><div class="r" style="left:2126.00px;top:2148.00px;width:4.50px;height:1.20px;background:#555;"></div><svg style="left:1981.5px;top:2175.7000000000003px" width="18" height="24" viewBox="0 0 18 24"><path d="M9 0.3C4.1 0.3 0.3 4 0.3 8.8C0.3 10.6 0.9 12.2 1.7 13.6L9 23.8L16.3 13.6C17.1 12.2 17.7 10.6 17.7 8.8C17.7 4 13.9 0.3 9 0.3Z" fill="#EEE11D"/><g stroke="#4A4A4A" stroke-width="1.1" fill="none"><path d="M3.2 7A8.5 8.5 0 0 1 14.8 7"/><path d="M5.3 9.3A5.5 5.5 0 0 1 12.7 9.3"/><path d="M3 3.8L14.8 14.4"/></g><circle cx="9" cy="12.4" r="1.1" fill="#4A4A4A"/></svg><div class="t" style="left:2008.50px;top:2180.25px;font-size:14px;line-height:16.8px;font-weight:400;color:#111;-webkit-text-stroke:0.15px #111">Enheder offline</div><div class="r" style="left:2126.00px;top:2188.00px;width:4.50px;height:1.20px;background:#555;"></div><svg style="left:2161.8px;top:2135.0px" width="18" height="24" viewBox="0 0 18 24"><path d="M9 0.3C4.1 0.3 0.3 4 0.3 8.8C0.3 10.6 0.9 12.2 1.7 13.6L9 23.8L16.3 13.6C17.1 12.2 17.7 10.6 17.7 8.8C17.7 4 13.9 0.3 9 0.3Z" fill="#5BCB6B"/><circle cx="9" cy="8.6" r="5.8" fill="#fff"/><path d="M6.4 8.8L8.3 10.4L11.6 6.8" stroke="#5BCB6B" stroke-width="1.3" fill="none"/></svg><div class="t" style="left:2188.60px;top:2139.55px;font-size:14px;line-height:16.8px;font-weight:400;color:#111;-webkit-text-stroke:0.15px #111">Enheder online</div><div class="r" style="left:2306.00px;top:2148.00px;width:4.50px;height:1.20px;background:#555;"></div><svg style="left:2161.8px;top:2175.7000000000003px" width="18" height="24" viewBox="0 0 18 24"><path d="M9 0.3C4.1 0.3 0.3 4 0.3 8.8C0.3 10.6 0.9 12.2 1.7 13.6L9 23.8L16.3 13.6C17.1 12.2 17.7 10.6 17.7 8.8C17.7 4 13.9 0.3 9 0.3Z" fill="#5F6368"/><rect x="5.3" y="3" width="7.4" height="11.5" rx="1" fill="#fff"/><g fill="#5F6368"><rect x="6.5" y="4.4" width="1.3" height="1.3"/><rect x="8.35" y="4.4" width="1.3" height="1.3"/><rect x="10.2" y="4.4" width="1.3" height="1.3"/><rect x="6.5" y="6.9" width="1.3" height="1.3"/><rect x="8.35" y="6.9" width="1.3" height="1.3"/><rect x="10.2" y="6.9" width="1.3" height="1.3"/><rect x="8" y="10.5" width="2" height="4"/></g></svg><div class="t" style="left:2188.60px;top:2180.25px;font-size:14px;line-height:16.8px;font-weight:400;color:#111;-webkit-text-stroke:0.15px #111">Lokationer i alt</div><div class="r" style="left:2306.00px;top:2188.00px;width:4.50px;height:1.20px;background:#555;"></div><div class="r" style="left:2325.10px;top:1755.40px;width:23.00px;height:59.40px;background:#fff;border-radius:0 6px 6px 0;box-shadow:1px 1px 3px rgba(0,0,0,.25)"></div><svg style="left:2333.1px;top:1779.9px" width="7" height="11" viewBox="0 0 7 11"><path d="M6 1L1.5 5.5L6 10" stroke="#111" stroke-width="1.8" fill="none"/></svg><div class="r" style="left:1919.00px;top:526.10px;width:72.20px;height:1.60px;background:#93BCF6;"></div><div class="r" style="left:1898.9px;top:516.9px;width:20px;height:20px;border-radius:50%;background:#2D72D9"></div><div class="t" style="left:1893.90px;top:520.12px;width:30px;text-align:center;font-size:11.5px;line-height:13.8px;font-weight:700;color:#fff;letter-spacing:-0.3px">1</div><div class="r" style="left:1919.00px;top:575.10px;width:72.20px;height:1.60px;background:#93BCF6;"></div><div class="r" style="left:1898.9px;top:565.9px;width:20px;height:20px;border-radius:50%;background:#2D72D9"></div><div class="t" style="left:1893.90px;top:569.12px;width:30px;text-align:center;font-size:11.5px;line-height:13.8px;font-weight:700;color:#fff;letter-spacing:-0.3px">2</div><div class="r" style="left:2308.60px;top:526.20px;width:71.40px;height:1.60px;background:#93BCF6;"></div><div class="r" style="left:2379.8px;top:517px;width:20px;height:20px;border-radius:50%;background:#2D72D9"></div><div class="t" style="left:2374.80px;top:520.22px;width:30px;text-align:center;font-size:11.5px;line-height:13.8px;font-weight:700;color:#fff;letter-spacing:-0.3px">3</div><div class="r" style="left:2182.60px;top:543.70px;width:1.60px;height:13.10px;background:#93BCF6;"></div><div class="r" style="left:2182.60px;top:555.20px;width:229.40px;height:1.60px;background:#93BCF6;"></div><div class="r" style="left:2411.7px;top:546px;width:20px;height:20px;border-radius:50%;background:#2D72D9"></div><div class="t" style="left:2406.70px;top:549.22px;width:30px;text-align:center;font-size:11.5px;line-height:13.8px;font-weight:700;color:#fff;letter-spacing:-0.3px">4</div><div class="r" style="left:2308.60px;top:645.00px;width:71.40px;height:1.60px;background:#93BCF6;"></div><div class="r" style="left:2379.8px;top:635.8px;width:20px;height:20px;border-radius:50%;background:#2D72D9"></div><div class="t" style="left:2374.80px;top:639.02px;width:30px;text-align:center;font-size:11.5px;line-height:13.8px;font-weight:700;color:#fff;letter-spacing:-0.3px">5</div><div class="r" style="left:2247.20px;top:661.00px;width:1.60px;height:15.70px;background:#93BCF6;"></div><div class="r" style="left:2247.20px;top:675.10px;width:132.80px;height:1.60px;background:#93BCF6;"></div><div class="r" style="left:2379.8px;top:665.9px;width:20px;height:20px;border-radius:50%;background:#2D72D9"></div><div class="t" style="left:2374.80px;top:669.12px;width:30px;text-align:center;font-size:11.5px;line-height:13.8px;font-weight:700;color:#fff;letter-spacing:-0.3px">6</div><div class="r" style="left:2316.50px;top:1593.70px;width:1.60px;height:145.10px;background:#93BCF6;"></div><div class="r" style="left:2302.80px;top:1593.70px;width:15.30px;height:1.60px;background:#93BCF6;"></div><div class="r" style="left:2302.80px;top:1737.20px;width:15.30px;height:1.60px;background:#93BCF6;"></div><div class="r" style="left:2317.30px;top:1624.20px;width:125.70px;height:1.60px;background:#93BCF6;"></div><div class="r" style="left:2442.9px;top:1615px;width:20px;height:20px;border-radius:50%;background:#2D72D9"></div><div class="t" style="left:2437.90px;top:1618.22px;width:30px;text-align:center;font-size:11.5px;line-height:13.8px;font-weight:700;color:#fff;letter-spacing:-0.3px">7</div><div class="r" style="left:1919.80px;top:1588.50px;width:1.60px;height:334.30px;background:#93BCF6;"></div><div class="r" style="left:1919.80px;top:1588.50px;width:37.10px;height:1.60px;background:#93BCF6;"></div><div class="r" style="left:1919.80px;top:1921.20px;width:37.10px;height:1.60px;background:#93BCF6;"></div><div class="r" style="left:1891.00px;top:1751.00px;width:29.60px;height:1.60px;background:#93BCF6;"></div><div class="r" style="left:1871.5px;top:1741.8px;width:20px;height:20px;border-radius:50%;background:#2D72D9"></div><div class="t" style="left:1866.50px;top:1745.02px;width:30px;text-align:center;font-size:11.5px;line-height:13.8px;font-weight:700;color:#fff;letter-spacing:-0.3px">8</div><div class="r" style="left:1910.00px;top:1967.70px;width:71.50px;height:1.60px;background:#93BCF6;"></div><div class="r" style="left:1890px;top:1958.5px;width:20px;height:20px;border-radius:50%;background:#2D72D9"></div><div class="t" style="left:1885.00px;top:1961.72px;width:30px;text-align:center;font-size:11.5px;line-height:13.8px;font-weight:700;color:#fff;letter-spacing:-0.3px">9</div><div class="r" style="left:2313.60px;top:1967.70px;width:59.40px;height:1.60px;background:#93BCF6;"></div><div class="r" style="left:2372.8px;top:1958.5px;width:20px;height:20px;border-radius:50%;background:#2D72D9"></div><div class="t" style="left:2367.80px;top:1962.38px;width:30px;text-align:center;font-size:10.8px;line-height:12.96px;font-weight:700;color:#fff;letter-spacing:-0.3px">10</div><div class="r" style="left:2301.90px;top:2015.00px;width:71.10px;height:1.60px;background:#93BCF6;"></div><div class="r" style="left:2372.8px;top:2005.8px;width:20px;height:20px;border-radius:50%;background:#2D72D9"></div><div class="t" style="left:2367.80px;top:2009.68px;width:30px;text-align:center;font-size:10.8px;line-height:12.96px;font-weight:700;color:#fff;letter-spacing:-0.3px">11</div><div class="r" style="left:1904.00px;top:2165.70px;width:72.20px;height:1.60px;background:#93BCF6;"></div><div class="r" style="left:1884.7px;top:2156.5px;width:20px;height:20px;border-radius:50%;background:#2D72D9"></div><div class="t" style="left:1879.70px;top:2160.38px;width:30px;text-align:center;font-size:10.8px;line-height:12.96px;font-weight:700;color:#fff;letter-spacing:-0.3px">12</div><div class="r" style="left:2540.50px;top:369.40px;width:377.20px;height:163.00px;background:#fff;border:1px solid #C6C6C6;box-sizing:border-box"></div><div class="t" style="left:2550.30px;top:381.20px;font-size:11.2px;line-height:13.44px;font-weight:700;color:#111;">Element name:</div><div class="t" style="left:2550.30px;top:398.73px;font-size:11.7px;line-height:14.04px;font-weight:400;color:#3E3E3E;white-space:pre">Organisation sektion</div><div class="t" style="left:2550.30px;top:435.20px;font-size:11.2px;line-height:13.44px;font-weight:700;color:#111;">Notes:</div><div class="r" style="left:2557.80px;top:458.90px;width:2.80px;height:2.80px;background:#333;border-radius:50%"></div><div class="t" style="left:2568.30px;top:452.73px;font-size:11.7px;line-height:14.04px;font-weight:400;color:#3E3E3E;white-space:pre">Denne sektion lister organisationerne (afd.) under den globale</div><div class="t" style="left:2568.30px;top:470.73px;font-size:11.7px;line-height:14.04px;font-weight:400;color:#3E3E3E;white-space:pre">org.</div><div class="r" style="left:2557.80px;top:494.90px;width:2.80px;height:2.80px;background:#333;border-radius:50%"></div><div class="t" style="left:2568.30px;top:488.73px;font-size:11.7px;line-height:14.04px;font-weight:400;color:#3E3E3E;white-space:pre">Hvis et søgeresultat for organisaiton eller lokation er valgt vil den</div><div class="t" style="left:2568.30px;top:506.73px;font-size:11.7px;line-height:14.04px;font-weight:400;color:#3E3E3E;white-space:pre">pågældende organisation være fokuseret på. (se note 6)</div><div class="r" style="left:2530px;top:358.9px;width:20px;height:20px;border-radius:50%;background:#2D72D9"></div><div class="t" style="left:2525.00px;top:362.12px;width:30px;text-align:center;font-size:11.5px;line-height:13.8px;font-weight:700;color:#fff;letter-spacing:-0.3px">1</div><div class="r" style="left:2540.50px;top:573.20px;width:377.20px;height:181.00px;background:#fff;border:1px solid #C6C6C6;box-sizing:border-box"></div><div class="t" style="left:2550.30px;top:585.00px;font-size:11.2px;line-height:13.44px;font-weight:700;color:#111;">Element name:</div><div class="t" style="left:2550.30px;top:602.53px;font-size:11.7px;line-height:14.04px;font-weight:400;color:#3E3E3E;white-space:pre">Organisation liste element</div><div class="t" style="left:2550.30px;top:639.00px;font-size:11.2px;line-height:13.44px;font-weight:700;color:#111;">Notes:</div><div class="r" style="left:2557.80px;top:662.70px;width:2.80px;height:2.80px;background:#333;border-radius:50%"></div><div class="t" style="left:2568.30px;top:656.53px;font-size:11.7px;line-height:14.04px;font-weight:400;color:#3E3E3E;white-space:pre">Org. liste element ikonerne har hover states</div><div class="r" style="left:2557.80px;top:680.70px;width:2.80px;height:2.80px;background:#333;border-radius:50%"></div><div class="t" style="left:2568.30px;top:674.53px;font-size:11.7px;line-height:14.04px;font-weight:400;color:#3E3E3E;white-space:pre"> Hele liste elementet har en hidden state hvis organisationen</div><div class="t" style="left:2568.30px;top:692.53px;font-size:11.7px;line-height:14.04px;font-weight:400;color:#3E3E3E;white-space:pre">skjules på kortet via klik på “eye”-ikonet, for det pågældende</div><div class="t" style="left:2568.30px;top:710.53px;font-size:11.7px;line-height:14.04px;font-weight:400;color:#3E3E3E;white-space:pre">element eller via klik på “skjul alle”- knappen.</div><div class="r" style="left:2557.80px;top:734.70px;width:2.80px;height:2.80px;background:#333;border-radius:50%"></div><div class="t" style="left:2568.30px;top:728.53px;font-size:11.7px;line-height:14.04px;font-weight:400;color:#3E3E3E;white-space:pre">Liste elementerne er links til de pågældende org. søgeresultater.</div><div class="r" style="left:2530px;top:562.7px;width:20px;height:20px;border-radius:50%;background:#2D72D9"></div><div class="t" style="left:2525.00px;top:565.92px;width:30px;text-align:center;font-size:11.5px;line-height:13.8px;font-weight:700;color:#fff;letter-spacing:-0.3px">2</div><div class="r" style="left:2540.50px;top:777.10px;width:377.20px;height:181.00px;background:#fff;border:1px solid #C6C6C6;box-sizing:border-box"></div><div class="t" style="left:2550.30px;top:788.90px;font-size:11.2px;line-height:13.44px;font-weight:700;color:#111;">Element name:</div><div class="t" style="left:2550.30px;top:806.43px;font-size:11.7px;line-height:14.04px;font-weight:400;color:#3E3E3E;white-space:pre">Skjul/vis alle funktion</div><div class="t" style="left:2550.30px;top:842.90px;font-size:11.2px;line-height:13.44px;font-weight:700;color:#111;">Notes:</div><div class="r" style="left:2557.80px;top:866.60px;width:2.80px;height:2.80px;background:#333;border-radius:50%"></div><div class="t" style="left:2568.30px;top:860.43px;font-size:11.7px;line-height:14.04px;font-weight:400;color:#3E3E3E;white-space:pre">Knappen har en “Skjul alle” state hvis alle org. liste element er</div><div class="t" style="left:2568.30px;top:878.43px;font-size:11.7px;line-height:14.04px;font-weight:400;color:#3E3E3E;white-space:pre">synlige. Funktionen vil skjule alle liste elementer.</div><div class="r" style="left:2557.80px;top:902.60px;width:2.80px;height:2.80px;background:#333;border-radius:50%"></div><div class="t" style="left:2568.30px;top:896.43px;font-size:11.7px;line-height:14.04px;font-weight:400;color:#3E3E3E;white-space:pre">Knappen har dertil en “Vis alle” state hvis mindst ét org. liste</div><div class="t" style="left:2568.30px;top:914.43px;font-size:11.7px;line-height:14.04px;font-weight:400;color:#3E3E3E;white-space:pre">element er synlig. Funktionen vil synliggøre alle liste elementer.</div><div class="r" style="left:2557.80px;top:938.60px;width:2.80px;height:2.80px;background:#333;border-radius:50%"></div><div class="t" style="left:2568.30px;top:932.43px;font-size:11.7px;line-height:14.04px;font-weight:400;color:#3E3E3E;white-space:pre">Der er en cursor-hover state.</div><div class="r" style="left:2530px;top:766.6px;width:20px;height:20px;border-radius:50%;background:#2D72D9"></div><div class="t" style="left:2525.00px;top:769.82px;width:30px;text-align:center;font-size:11.5px;line-height:13.8px;font-weight:700;color:#fff;letter-spacing:-0.3px">3</div><div class="r" style="left:2540.50px;top:999.30px;width:377.20px;height:127.00px;background:#fff;border:1px solid #C6C6C6;box-sizing:border-box"></div><div class="t" style="left:2550.30px;top:1011.10px;font-size:11.2px;line-height:13.44px;font-weight:700;color:#111;">Element name:</div><div class="t" style="left:2550.30px;top:1028.63px;font-size:11.7px;line-height:14.04px;font-weight:400;color:#3E3E3E;white-space:pre">Zoom-to-fit funktion</div><div class="t" style="left:2550.30px;top:1065.10px;font-size:11.2px;line-height:13.44px;font-weight:700;color:#111;">Notes:</div><div class="r" style="left:2557.80px;top:1088.80px;width:2.80px;height:2.80px;background:#333;border-radius:50%"></div><div class="t" style="left:2568.30px;top:1082.63px;font-size:11.7px;line-height:14.04px;font-weight:400;color:#3E3E3E;white-space:pre">Knappen vil fokusere kortet til at vise alle synlige organisationers</div><div class="t" style="left:2568.30px;top:1100.63px;font-size:11.7px;line-height:14.04px;font-weight:400;color:#3E3E3E;white-space:pre">lokationer.</div><div class="r" style="left:2530px;top:988.8px;width:20px;height:20px;border-radius:50%;background:#2D72D9"></div><div class="t" style="left:2525.00px;top:992.02px;width:30px;text-align:center;font-size:11.5px;line-height:13.8px;font-weight:700;color:#fff;letter-spacing:-0.3px">4</div><div class="r" style="left:2540.50px;top:1167.10px;width:377.20px;height:163.00px;background:#fff;border:1px solid #C6C6C6;box-sizing:border-box"></div><div class="t" style="left:2550.30px;top:1178.90px;font-size:11.2px;line-height:13.44px;font-weight:700;color:#111;">Element name:</div><div class="t" style="left:2550.30px;top:1196.43px;font-size:11.7px;line-height:14.04px;font-weight:400;color:#3E3E3E;white-space:pre">Org. liste elements skjul/vis funktion</div><div class="t" style="left:2550.30px;top:1232.90px;font-size:11.2px;line-height:13.44px;font-weight:700;color:#111;">Notes:</div><div class="r" style="left:2557.80px;top:1256.60px;width:2.80px;height:2.80px;background:#333;border-radius:50%"></div><div class="t" style="left:2568.30px;top:1250.43px;font-size:11.7px;line-height:14.04px;font-weight:400;color:#3E3E3E;white-space:pre">Knappen vil skjule eller synliggøre org. liste elementet på kortet.</div><div class="r" style="left:2557.80px;top:1274.60px;width:2.80px;height:2.80px;background:#333;border-radius:50%"></div><div class="t" style="left:2568.30px;top:1268.43px;font-size:11.7px;line-height:14.04px;font-weight:400;color:#3E3E3E;white-space:pre">Knappen har to states, for skjul elementet og doe at vise</div><div class="t" style="left:2568.30px;top:1286.43px;font-size:11.7px;line-height:14.04px;font-weight:400;color:#3E3E3E;white-space:pre">elementet.</div><div class="r" style="left:2557.80px;top:1310.60px;width:2.80px;height:2.80px;background:#333;border-radius:50%"></div><div class="t" style="left:2568.30px;top:1304.43px;font-size:11.7px;line-height:14.04px;font-weight:400;color:#3E3E3E;white-space:pre">Knappen har en cursor-hover state.</div><div class="r" style="left:2530px;top:1156.6px;width:20px;height:20px;border-radius:50%;background:#2D72D9"></div><div class="t" style="left:2525.00px;top:1159.82px;width:30px;text-align:center;font-size:11.5px;line-height:13.8px;font-weight:700;color:#fff;letter-spacing:-0.3px">5</div><div class="r" style="left:2540.50px;top:1371.50px;width:377.20px;height:127.00px;background:#fff;border:1px solid #C6C6C6;box-sizing:border-box"></div><div class="t" style="left:2550.30px;top:1383.30px;font-size:11.2px;line-height:13.44px;font-weight:700;color:#111;">Element name:</div><div class="t" style="left:2550.30px;top:1400.83px;font-size:11.7px;line-height:14.04px;font-weight:400;color:#3E3E3E;white-space:pre">Org. liste elements zoom-to-fit funktion</div><div class="t" style="left:2550.30px;top:1437.30px;font-size:11.2px;line-height:13.44px;font-weight:700;color:#111;">Notes:</div><div class="r" style="left:2557.80px;top:1461.00px;width:2.80px;height:2.80px;background:#333;border-radius:50%"></div><div class="t" style="left:2568.30px;top:1454.83px;font-size:11.7px;line-height:14.04px;font-weight:400;color:#3E3E3E;white-space:pre">Knappen vil fokusere kortet til at vise den pågældende</div><div class="t" style="left:2568.30px;top:1472.83px;font-size:11.7px;line-height:14.04px;font-weight:400;color:#3E3E3E;white-space:pre">organisations lokationer.</div><div class="r" style="left:2530px;top:1361.0px;width:20px;height:20px;border-radius:50%;background:#2D72D9"></div><div class="t" style="left:2525.00px;top:1364.22px;width:30px;text-align:center;font-size:11.5px;line-height:13.8px;font-weight:700;color:#fff;letter-spacing:-0.3px">6</div><div class="r" style="left:2540.50px;top:1539.40px;width:377.20px;height:199.00px;background:#fff;border:1px solid #C6C6C6;box-sizing:border-box"></div><div class="t" style="left:2550.30px;top:1551.20px;font-size:11.2px;line-height:13.44px;font-weight:700;color:#111;">Element name:</div><div class="t" style="left:2550.30px;top:1568.73px;font-size:11.7px;line-height:14.04px;font-weight:400;color:#3E3E3E;white-space:pre">Fokuseret Org. liste element (organisation eller lokation valgt som</div><div class="t" style="left:2550.30px;top:1586.73px;font-size:11.7px;line-height:14.04px;font-weight:400;color:#3E3E3E;white-space:pre">søgeresultat)</div><div class="t" style="left:2550.30px;top:1623.20px;font-size:11.2px;line-height:13.44px;font-weight:700;color:#111;">Notes:</div><div class="r" style="left:2557.80px;top:1646.90px;width:2.80px;height:2.80px;background:#333;border-radius:50%"></div><div class="t" style="left:2568.30px;top:1640.73px;font-size:11.7px;line-height:14.04px;font-weight:400;color:#3E3E3E;white-space:pre">Org. liste elementet for det valgte søgeresultat er fokuseret ved</div><div class="t" style="left:2568.30px;top:1658.73px;font-size:11.7px;line-height:14.04px;font-weight:400;color:#3E3E3E;white-space:pre">at være det eneste synlige liste element.</div><div class="r" style="left:2557.80px;top:1682.90px;width:2.80px;height:2.80px;background:#333;border-radius:50%"></div><div class="t" style="left:2568.30px;top:1676.73px;font-size:11.7px;line-height:14.04px;font-weight:400;color:#3E3E3E;white-space:pre">Skille stregen under det fokuseret liste element vil være der</div><div class="t" style="left:2568.30px;top:1694.73px;font-size:11.7px;line-height:14.04px;font-weight:400;color:#3E3E3E;white-space:pre">uanset om andre liste elementer synliggøres, indtil en anden</div><div class="t" style="left:2568.30px;top:1712.73px;font-size:11.7px;line-height:14.04px;font-weight:400;color:#3E3E3E;white-space:pre">global org. søgeresultat vælges.</div><div class="r" style="left:2530px;top:1528.9px;width:20px;height:20px;border-radius:50%;background:#2D72D9"></div><div class="t" style="left:2525.00px;top:1532.12px;width:30px;text-align:center;font-size:11.5px;line-height:13.8px;font-weight:700;color:#fff;letter-spacing:-0.3px">7</div><div class="r" style="left:2540.50px;top:1779.20px;width:377.20px;height:145.00px;background:#fff;border:1px solid #C6C6C6;box-sizing:border-box"></div><div class="t" style="left:2550.30px;top:1791.00px;font-size:11.2px;line-height:13.44px;font-weight:700;color:#111;">Element name:</div><div class="t" style="left:2550.30px;top:1808.53px;font-size:11.7px;line-height:14.04px;font-weight:400;color:#3E3E3E;white-space:pre">Scroll vindue</div><div class="t" style="left:2550.30px;top:1845.00px;font-size:11.2px;line-height:13.44px;font-weight:700;color:#111;">Notes:</div><div class="r" style="left:2557.80px;top:1868.70px;width:2.80px;height:2.80px;background:#333;border-radius:50%"></div><div class="t" style="left:2568.30px;top:1862.53px;font-size:11.7px;line-height:14.04px;font-weight:400;color:#3E3E3E;white-space:pre">Hvis Organisationer sektionen overskrides med liste elementer</div><div class="t" style="left:2568.30px;top:1880.53px;font-size:11.7px;line-height:14.04px;font-weight:400;color:#3E3E3E;white-space:pre">forlænges sektionen og det markeret område bliver til et scroll</div><div class="t" style="left:2568.30px;top:1898.53px;font-size:11.7px;line-height:14.04px;font-weight:400;color:#3E3E3E;white-space:pre">vindue.</div><div class="r" style="left:2530px;top:1768.7px;width:20px;height:20px;border-radius:50%;background:#2D72D9"></div><div class="t" style="left:2525.00px;top:1771.92px;width:30px;text-align:center;font-size:11.5px;line-height:13.8px;font-weight:700;color:#fff;letter-spacing:-0.3px">8</div><div class="r" style="left:2540.50px;top:1965.30px;width:377.20px;height:163.00px;background:#fff;border:1px solid #C6C6C6;box-sizing:border-box"></div><div class="t" style="left:2550.30px;top:1977.10px;font-size:11.2px;line-height:13.44px;font-weight:700;color:#111;">Element name:</div><div class="t" style="left:2550.30px;top:1994.63px;font-size:11.7px;line-height:14.04px;font-weight:400;color:#3E3E3E;white-space:pre">Filter sektion</div><div class="t" style="left:2550.30px;top:2031.10px;font-size:11.2px;line-height:13.44px;font-weight:700;color:#111;">Notes:</div><div class="r" style="left:2557.80px;top:2054.80px;width:2.80px;height:2.80px;background:#333;border-radius:50%"></div><div class="t" style="left:2568.30px;top:2048.63px;font-size:11.7px;line-height:14.04px;font-weight:400;color:#3E3E3E;white-space:pre">Filter sektionen styre hvilke enhedsstatusser for lokationer der</div><div class="t" style="left:2568.30px;top:2066.63px;font-size:11.7px;line-height:14.04px;font-weight:400;color:#3E3E3E;white-space:pre">skal vises på kortet.</div><div class="r" style="left:2557.80px;top:2090.80px;width:2.80px;height:2.80px;background:#333;border-radius:50%"></div><div class="t" style="left:2568.30px;top:2084.63px;font-size:11.7px;line-height:14.04px;font-weight:400;color:#3E3E3E;white-space:pre">Tjekkes et eller flere filtre fra vil enhedsstatusserne forsvinde</div><div class="t" style="left:2568.30px;top:2102.63px;font-size:11.7px;line-height:14.04px;font-weight:400;color:#3E3E3E;white-space:pre">men lokationerne vil forblive på kortet som et default ikon.</div><div class="r" style="left:2530px;top:1954.8px;width:20px;height:20px;border-radius:50%;background:#2D72D9"></div><div class="t" style="left:2525.00px;top:1958.02px;width:30px;text-align:center;font-size:11.5px;line-height:13.8px;font-weight:700;color:#fff;letter-spacing:-0.3px">9</div><div class="r" style="left:2540.50px;top:2169.40px;width:377.20px;height:181.00px;background:#fff;border:1px solid #C6C6C6;box-sizing:border-box"></div><div class="t" style="left:2550.30px;top:2181.20px;font-size:11.2px;line-height:13.44px;font-weight:700;color:#111;">Element name:</div><div class="t" style="left:2550.30px;top:2198.73px;font-size:11.7px;line-height:14.04px;font-weight:400;color:#3E3E3E;white-space:pre">Tjek af/ ryd alle filtre funktion</div><div class="t" style="left:2550.30px;top:2235.20px;font-size:11.2px;line-height:13.44px;font-weight:700;color:#111;">Notes:</div><div class="r" style="left:2557.80px;top:2258.90px;width:2.80px;height:2.80px;background:#333;border-radius:50%"></div><div class="t" style="left:2568.30px;top:2252.73px;font-size:11.7px;line-height:14.04px;font-weight:400;color:#3E3E3E;white-space:pre">Knappen har en “Ryd alle” state der vil rydde alle filtre hvis alle</div><div class="t" style="left:2568.30px;top:2270.73px;font-size:11.7px;line-height:14.04px;font-weight:400;color:#3E3E3E;white-space:pre">filtre er tjekket af.</div><div class="r" style="left:2557.80px;top:2294.90px;width:2.80px;height:2.80px;background:#333;border-radius:50%"></div><div class="t" style="left:2568.30px;top:2288.73px;font-size:11.7px;line-height:14.04px;font-weight:400;color:#3E3E3E;white-space:pre">Knappen har dertil en “Vis alle” state der vil tjekke alle filtre af</div><div class="t" style="left:2568.30px;top:2306.73px;font-size:11.7px;line-height:14.04px;font-weight:400;color:#3E3E3E;white-space:pre">hvis mindst ét filter er tjekket af i forvejen.</div><div class="r" style="left:2557.80px;top:2330.90px;width:2.80px;height:2.80px;background:#333;border-radius:50%"></div><div class="t" style="left:2568.30px;top:2324.73px;font-size:11.7px;line-height:14.04px;font-weight:400;color:#3E3E3E;white-space:pre">Der er en cursor-hover state.</div><div class="r" style="left:2530px;top:2158.9px;width:20px;height:20px;border-radius:50%;background:#2D72D9"></div><div class="t" style="left:2525.00px;top:2162.78px;width:30px;text-align:center;font-size:10.8px;line-height:12.96px;font-weight:700;color:#fff;letter-spacing:-0.3px">10</div><div class="r" style="left:2540.50px;top:2355.50px;width:377.20px;height:145.00px;background:#fff;border:1px solid #C6C6C6;box-sizing:border-box"></div><div class="t" style="left:2550.30px;top:2367.30px;font-size:11.2px;line-height:13.44px;font-weight:700;color:#111;">Element name:</div><div class="t" style="left:2550.30px;top:2384.83px;font-size:11.7px;line-height:14.04px;font-weight:400;color:#3E3E3E;white-space:pre">Tjek af/ ryd filter funktion</div><div class="t" style="left:2550.30px;top:2421.30px;font-size:11.2px;line-height:13.44px;font-weight:700;color:#111;">Notes:</div><div class="r" style="left:2557.80px;top:2445.00px;width:2.80px;height:2.80px;background:#333;border-radius:50%"></div><div class="t" style="left:2568.30px;top:2438.83px;font-size:11.7px;line-height:14.04px;font-weight:400;color:#3E3E3E;white-space:pre">Knappen vil skjule alle hvis der er mindst ét filter tjekket af.</div><div class="r" style="left:2557.80px;top:2463.00px;width:2.80px;height:2.80px;background:#333;border-radius:50%"></div><div class="t" style="left:2568.30px;top:2456.83px;font-size:11.7px;line-height:14.04px;font-weight:400;color:#3E3E3E;white-space:pre">Knappen vil tjekke alle af hvis alle filtre er ryddet.</div><div class="r" style="left:2557.80px;top:2481.00px;width:2.80px;height:2.80px;background:#333;border-radius:50%"></div><div class="t" style="left:2568.30px;top:2474.83px;font-size:11.7px;line-height:14.04px;font-weight:400;color:#3E3E3E;white-space:pre">Der er en cursor-hover state.</div><div class="r" style="left:2530px;top:2345.0px;width:20px;height:20px;border-radius:50%;background:#2D72D9"></div><div class="t" style="left:2525.00px;top:2348.88px;width:30px;text-align:center;font-size:10.8px;line-height:12.96px;font-weight:700;color:#fff;letter-spacing:-0.3px">11</div><div class="r" style="left:2540.50px;top:2541.40px;width:377.20px;height:127.00px;background:#fff;border:1px solid #C6C6C6;box-sizing:border-box"></div><div class="t" style="left:2550.30px;top:2553.20px;font-size:11.2px;line-height:13.44px;font-weight:700;color:#111;">Element name:</div><div class="t" style="left:2550.30px;top:2570.73px;font-size:11.7px;line-height:14.04px;font-weight:400;color:#3E3E3E;white-space:pre">Stats sektionen</div><div class="t" style="left:2550.30px;top:2607.20px;font-size:11.2px;line-height:13.44px;font-weight:700;color:#111;">Notes:</div><div class="r" style="left:2557.80px;top:2630.90px;width:2.80px;height:2.80px;background:#333;border-radius:50%"></div><div class="t" style="left:2568.30px;top:2624.73px;font-size:11.7px;line-height:14.04px;font-weight:400;color:#3E3E3E;white-space:pre">Stats sektionen viser sum at alle synlige lokationer og</div><div class="t" style="left:2568.30px;top:2642.73px;font-size:11.7px;line-height:14.04px;font-weight:400;color:#3E3E3E;white-space:pre">enhedssatusser på kortet.</div><div class="r" style="left:2530px;top:2530.9px;width:20px;height:20px;border-radius:50%;background:#2D72D9"></div><div class="t" style="left:2525.00px;top:2534.78px;width:30px;text-align:center;font-size:10.8px;line-height:12.96px;font-weight:700;color:#fff;letter-spacing:-0.3px">12</div>
</body></html>
